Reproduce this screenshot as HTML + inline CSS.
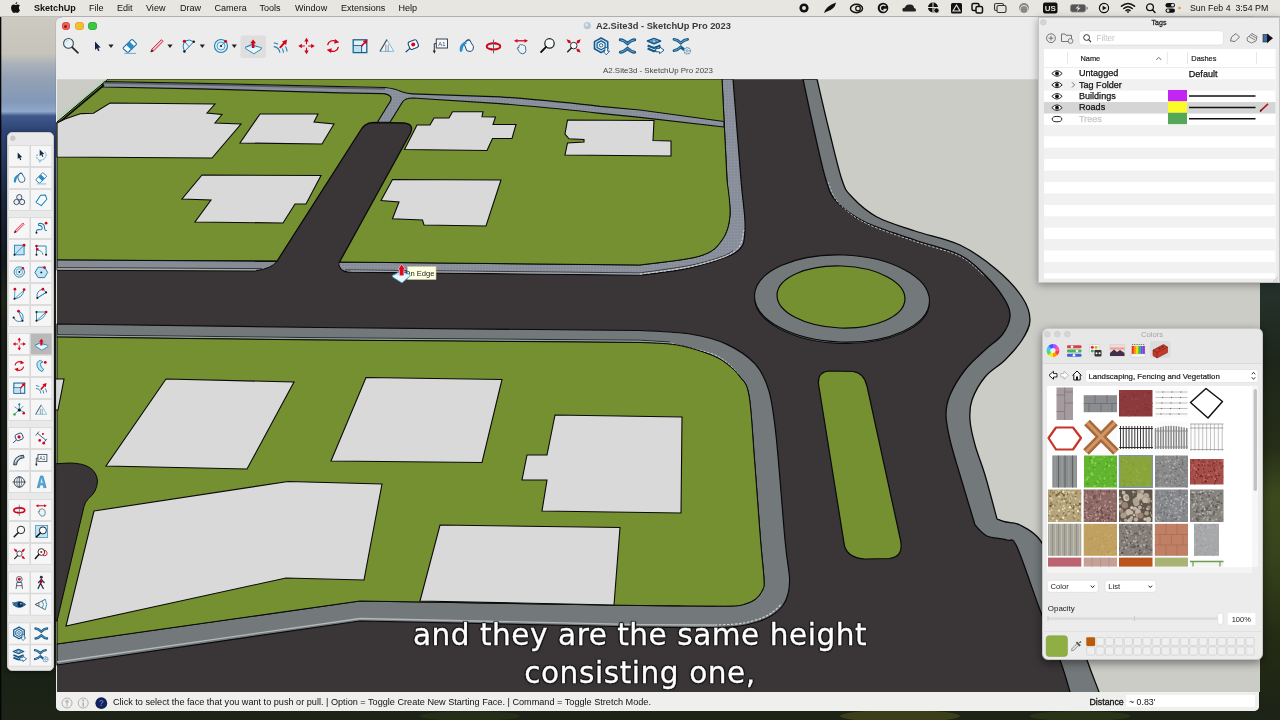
<!DOCTYPE html><html><head><meta charset="utf-8"><title>SketchUp</title><style>
*{margin:0;padding:0;box-sizing:border-box}
#root{position:absolute;left:0;top:0;width:1280px;height:720px;overflow:hidden;will-change:transform}
html,body{width:1280px;height:720px;overflow:hidden;background:#1d2418;font-family:"Liberation Sans",sans-serif;}
.abs{position:absolute}
#desk{position:absolute;left:0;top:0;width:1280px;height:720px}
#menubar{position:absolute;left:0;top:0;width:1280px;height:17px;background:#e7e6e0;border-bottom:1px solid #bdbcb8}
#menubar span{position:absolute;top:2.8px;font-size:9.05px;color:#111;white-space:nowrap;line-height:11px}
#win{position:absolute;left:56.3px;top:16.5px;width:1203.2px;height:694.8px;background:#ececec;border-radius:6px 6px 5px 5px;overflow:hidden;box-shadow:0 0 0 0.5px rgba(0,0,0,.12)}
.tl{position:absolute;width:8.6px;height:8.6px;border-radius:50%}
#title{position:absolute;left:596px;top:21px;font-size:9.3px;font-weight:bold;color:#3a3a3a;white-space:nowrap;line-height:11px}
#title2{position:absolute;left:603px;top:66px;font-size:7.92px;color:#444;white-space:nowrap;line-height:9px}
#status{position:absolute;left:56.3px;top:692px;width:1203.2px;height:19.3px;background:#efefed;border-radius:0 0 5px 5px}
#status .t{position:absolute;top:5.3px;font-size:9.13px;color:#111;white-space:nowrap;line-height:10px}
.scene{position:absolute;left:0;top:0}
#ui{position:absolute;left:0;top:0}
#palette{position:absolute;left:6.5px;top:131.5px;width:47px;height:539px;background:#e9e9e9;border-radius:5px;border:0.7px solid #c9c9c9;box-shadow:0 1px 4px rgba(0,0,0,.5)}
.cell{position:absolute;width:21px;height:21px;background:#f6f6f6;border:0.6px solid #d2d2d2}
#tags{position:absolute;left:1038px;top:16.5px;width:241.5px;height:266.5px;background:#ececec;border:0.6px solid #c4c4c4;box-shadow:0 2px 8px rgba(0,0,0,.35)}
#tags .hd{position:absolute;font-size:8.6px;color:#222}
#tags .row{position:absolute;left:6px;width:231px;height:11.5px}
#tags .nm{position:absolute;font-size:9.6px;color:#111;white-space:nowrap;line-height:11.5px}
#colors{position:absolute;left:1041.5px;top:327.6px;width:221.5px;height:332.4px;background:linear-gradient(#e7e7e7 0,#e7e7e7 34.4px,#d9d9d9 34.4px,#d9d9d9 35px,#ececec 35px);border-radius:6px;border:0.6px solid #c6c6c6;box-shadow:0 3px 10px rgba(0,0,0,.45)}
.sw{position:absolute}
.dd{position:absolute;background:#fff;border-radius:3px;box-shadow:0 0 0 .5px #cfcfcf,0 .5px 1px rgba(0,0,0,.25);font-size:8.6px;color:#222;line-height:12px;padding-left:4px;white-space:nowrap}
.sub{position:absolute;left:0;width:1280px;text-align:center;color:#fff;font-family:"DejaVu Sans","Liberation Sans",sans-serif;font-size:29.6px;white-space:nowrap;line-height:36px;
 text-shadow:-1px -1px 0 #1a1a1a,1px -1px 0 #1a1a1a,-1px 1px 0 #1a1a1a,1px 1px 0 #1a1a1a,0 1.4px 0 #1a1a1a,1.4px 0 0 #1a1a1a,-1.4px 0 0 #1a1a1a,0 -1.4px 0 #1a1a1a,0 0 3px #000;-webkit-text-stroke:.3px #fff}
</style></head><body><div id="root">
<svg id="desk" width="1280" height="720" viewBox="0 0 1280 720">
<defs>
<linearGradient id="sky" x1="0" y1="0" x2="0" y2="1">
<stop offset="0.022" stop-color="#cdcac1"/><stop offset="0.075" stop-color="#c6c3ba"/><stop offset="0.09" stop-color="#a9b0ba"/><stop offset="0.11" stop-color="#94a1b5"/><stop offset="0.14" stop-color="#8398b8"/><stop offset="0.155" stop-color="#90a8ca"/><stop offset="0.161" stop-color="#3f588b"/>
<stop offset="0.18" stop-color="#2f4575"/><stop offset="0.21" stop-color="#2a3e6a"/><stop offset="0.28" stop-color="#1b2840"/><stop offset="0.36" stop-color="#151b20"/><stop offset="0.42" stop-color="#23281a"/><stop offset="0.46" stop-color="#1a1f18"/><stop offset="0.8" stop-color="#141b14"/><stop offset="1" stop-color="#1c2416"/></linearGradient>
<linearGradient id="rgt" x1="0" y1="0" x2="0" y2="1">
<stop offset="0.39" stop-color="#26332e"/><stop offset="0.5" stop-color="#1d261a"/><stop offset="0.62" stop-color="#262d17"/><stop offset="0.69" stop-color="#3d4a1e"/><stop offset="0.78" stop-color="#36421b"/><stop offset="0.88" stop-color="#252c15"/><stop offset="1" stop-color="#1c2213"/></linearGradient>
</defs>
<rect width="1280" height="720" fill="#1c2317"/>
<rect x="0" y="0" width="60" height="720" fill="url(#sky)"/>
<rect x="1255" y="0" width="25" height="720" fill="url(#rgt)"/>
<rect x="0" y="706" width="1280" height="14" fill="#1d2417"/>
<rect x="0" y="0" width="1.3" height="720" fill="#050505"/>
<ellipse cx="900" cy="716" rx="60" ry="6" fill="#4a4a1c" opacity=".7"/>
<ellipse cx="1080" cy="716" rx="50" ry="5" fill="#2e3a1a" opacity=".7"/>
<ellipse cx="470" cy="716" rx="50" ry="5" fill="#2a3318" opacity=".7"/>
</svg>
<div id="menubar">
<span style="left:34px;font-weight:bold;">SketchUp</span>
<span style="left:89px;">File</span>
<span style="left:117px;">Edit</span>
<span style="left:146px;">View</span>
<span style="left:180px;">Draw</span>
<span style="left:214.5px;">Camera</span>
<span style="left:259.5px;">Tools</span>
<span style="left:295px;">Window</span>
<span style="left:341px;">Extensions</span>
<span style="left:398.5px;">Help</span>
<span style="left:1190px;font-size:8.8px">Sun Feb 4&nbsp; 3:54 PM</span>
</div>
<svg class="abs" style="left:0;top:0" width="1280" height="16" viewBox="0 0 1280 16"><path d="M17.6,5.2 C16.9,4.4 15.9,4.3 15.4,4.3 C14.5,4.3 14,4.8 13.3,4.8 C12.6,4.8 12.1,4.3 11.3,4.3 C10.2,4.3 8.8,5.3 8.8,7.5 C8.8,9.8 10.4,12.6 11.6,12.6 C12.2,12.6 12.6,12.2 13.4,12.2 C14.2,12.2 14.5,12.6 15.2,12.6 C16.3,12.6 17.4,10.6 17.7,9.7 C16.2,9 16.2,6.2 17.6,5.2Z M14.9,1.6 C14,1.7 13,2.7 13.2,3.8 C14.2,3.8 15.1,2.8 14.9,1.6Z" fill="#111" transform="translate(2.3,.3)"/><circle cx="804" cy="8" r="4.6" fill="#111"/><circle cx="804" cy="8" r="2" fill="#e6e4df"/><path d="M824,13 Q826,6 836,2.5 Q835,9 827,11.5Z" fill="#111"/><ellipse cx="856.5" cy="8.5" rx="6" ry="4.2" fill="none" stroke="#111" stroke-width="1.5"/><circle cx="858" cy="8.5" r="2.3" fill="none" stroke="#111" stroke-width="1.2"/><circle cx="883" cy="8" r="5.3" fill="#111"/><path d="M885.5,6 A3,3 0 1 0 886,9.5 L883.5,9.5" stroke="#e6e4df" stroke-width="1.3" fill="none"/><path d="M903,11.5 Q901,8 905,7.5 Q906,4 910,4.5 Q914,4.5 914,8 Q917,8.5 915.5,11.5Z" fill="#222"/><circle cx="933" cy="7.5" r="5" fill="#111"/><path d="M933,2.5 L933,12.5 M928,7.5 L938,7.5" stroke="#e6e4df" stroke-width="1"/><circle cx="936.5" cy="10.5" r="2.6" fill="#111" stroke="#e6e4df" stroke-width=".8"/><rect x="951" y="3" width="11" height="10.5" rx="1.5" fill="#111"/><path d="M956.5,5 L960,11 L953,11Z" fill="none" stroke="#e6e4df" stroke-width="1.1"/><rect x="972" y="3.5" width="7" height="7" rx="1.5" fill="none" stroke="#111" stroke-width="1.5"/><rect x="976" y="6.5" width="6.5" height="6.5" rx="1.5" fill="#e6e4df" stroke="#111" stroke-width="1.5"/><rect x="994.5" y="3.5" width="9" height="7" rx="1.6" fill="none" stroke="#333" stroke-width="1.1"/><rect x="997" y="5.5" width="9" height="7" rx="1.6" fill="#e6e4df" stroke="#333" stroke-width="1.1"/><circle cx="1024" cy="8" r="5" fill="#8a8883"/><path d="M1020.5,11.5 A4,4 0 1 1 1027.5,11.5" stroke="#e6e4df" stroke-width="1" fill="none"/><rect x="1043" y="2.5" width="14.5" height="11" rx="2" fill="#111"/><text x="1050.2" y="11.3" font-family="Liberation Sans,sans-serif" font-size="8" font-weight="bold" fill="#e6e4df" text-anchor="middle">US</text><rect x="1070.5" y="4.5" width="15" height="7.5" rx="2" fill="#555" stroke="#888" stroke-width=".8"/><rect x="1086.3" y="6.8" width="1.5" height="3" rx=".7" fill="#888"/><path d="M1079,5 L1075.5,8.6 L1078,8.6 L1077,11.5 L1080.6,7.8 L1078.2,7.8Z" fill="#e6e4df"/><circle cx="1104" cy="8" r="4.6" fill="none" stroke="#111" stroke-width="1.2"/><path d="M1102.6,5.7 L1106.6,8 L1102.6,10.3Z" fill="#111"/><path d="M1121.5,6.2 Q1128,0.8 1134.5,6.2 M1123.8,8.5 Q1128,5 1132.2,8.5 M1126,10.6 Q1128,9 1130,10.6" fill="none" stroke="#111" stroke-width="1.5" stroke-linecap="round"/><circle cx="1128" cy="12" r=".9" fill="#111"/><circle cx="1150" cy="7.3" r="3.4" fill="none" stroke="#111" stroke-width="1.3"/><path d="M1152.5,9.8 L1155,12.5" stroke="#111" stroke-width="1.4" stroke-linecap="round"/><rect x="1165.5" y="3" width="9.5" height="4.4" rx="2.2" fill="#111"/><rect x="1165.5" y="8.4" width="9.5" height="4.4" rx="2.2" fill="#111"/><circle cx="1172.6" cy="5.2" r="1.4" fill="#e6e4df"/><circle cx="1168" cy="10.6" r="1.4" fill="#e6e4df"/><circle cx="1179.5" cy="8" r="1.2" fill="#f08a24"/></svg>
<div id="win"></div>
<div class="tl" style="left:61.6px;top:21.8px;background:#ee5f57;box-shadow:inset 0 0 0 .5px #c9443d"></div><div class="abs" style="left:64.4px;top:24.6px;width:3px;height:3px;border-radius:50%;background:#8c1a10"></div>
<div class="tl" style="left:75px;top:21.8px;background:#f5bd30;box-shadow:inset 0 0 0 .5px #d39e25"></div>
<div class="tl" style="left:88.4px;top:21.8px;background:#3bc643;box-shadow:inset 0 0 0 .5px #2ba231"></div>
<div id="title">A2.Site3d - SketchUp Pro 2023</div>
<div id="title2">A2.Site3d - SketchUp Pro 2023</div>
<svg class="abs" style="left:0;top:0" width="1280" height="80" viewBox="0 0 1280 80"><rect x="240.5" y="35.5" width="25.5" height="22.5" rx="2" fill="#dedede"/><circle cx="587.3" cy="25.7" r="3.6" fill="#b7c7d6"/><circle cx="586.5" cy="24.8" r="1.6" fill="#d9e4ee"/><svg x="61.0" y="36.0" width="20" height="20" viewBox="0 0 20 20"><circle cx="7.5" cy="7.4" r="4.9" fill="#e6f2f8" stroke="#3a4a55" stroke-width="1.1"/><path d="M4.8,6.6 Q5.6,4.6 7.6,4.3" stroke="#a8d4e6" stroke-width="1" fill="none"/><path d="M11.3,11.3 L17,16.8" stroke="#222" stroke-width="1.6" stroke-linecap="round"/></svg><svg x="87.0" y="36.0" width="20" height="20" viewBox="0 0 20 20"><path d="M8,5.6 L8,13.9 L9.9,12.2 L11.2,15.2 L12.5,14.6 L11.2,11.7 L13.7,11.5 Z" fill="#15254a"/></svg><svg x="120.0" y="36.0" width="20" height="20" viewBox="0 0 20 20"><path d="M3.4,11.6 L11.2,3.9 Q12,3.3 12.8,3.9 L16.2,7.3 Q16.8,8 16.2,8.7 L8.6,16 Q7.8,16.5 7,16 L3.4,12.9 Q2.9,12.2 3.4,11.6Z" fill="#fff" stroke="#1b6fa3" stroke-width="1.1"/><path d="M6.2,8.9 L9.6,5.5 L14.3,10.3 L11,13.6Z" fill="#2a8cc4"/><path d="M4.4,17.4 L16,17.4" stroke="#5fb0d8" stroke-width="1"/></svg><svg x="147.0" y="36.0" width="20" height="20" viewBox="0 0 20 20"><path d="M3.9,15.9 L4.9,13.2 L14.4,3.7 L16,5.3 L6.6,14.9 Z" fill="#f7c6cb" stroke="#c8102e" stroke-width="0.9" stroke-linejoin="round"/><path d="M3.6,16.3 L4.9,13.2 L6.6,14.9Z" fill="#2b2b2b"/></svg><svg x="178.5" y="36.0" width="20" height="20" viewBox="0 0 20 20"><path d="M5.9,15.5 Q3.2,10 5.9,5.25 Q11,2.5 15.25,5.75 Z" fill="#eaf5fa" stroke="#1c7fb2" stroke-width="1"/><path d="M5.9,5.25 L10.5,10.6" stroke="#1c7fb2" stroke-width="0.9"/><circle cx="5.9" cy="5.25" r="1.6" fill="#d4041c"/><circle cx="15.25" cy="5.75" r="1.2" fill="#1a1a1a"/><circle cx="5.9" cy="15.5" r="1.2" fill="#1a1a1a"/></svg><svg x="211.0" y="36.0" width="20" height="20" viewBox="0 0 20 20"><circle cx="10" cy="10" r="6.5" fill="#dff0f8" stroke="#1c7fb2" stroke-width="1.1"/><circle cx="10" cy="10" r="4" fill="none" stroke="#1c7fb2" stroke-width="0.7"/><path d="M10,10 L14.4,5.4" stroke="#1c7fb2" stroke-width="0.8"/><circle cx="10" cy="10" r="1.1" fill="#1a1a1a"/><circle cx="14.6" cy="5.2" r="1.5" fill="#d4041c"/></svg><svg x="243.0" y="36.0" width="20" height="20" viewBox="0 0 20 20"><path d="M2.6,11.3 L8.3,8.7 L18.2,11.8 L10.8,16.3 Z" fill="#c9e8f6" stroke="#1c7fb2" stroke-width="1.1" stroke-linejoin="round"/><path d="M2.6,11.3 L2.6,12.6 L10.8,17.8 L18.2,13.2 L18.2,11.8" fill="#eaf6fb" stroke="#1c7fb2" stroke-width="0.9" stroke-linejoin="round"/><path d="M10.1,3.4 L13,7.2 L11.4,7.2 L11.4,12 L8.8,12 L8.8,7.2 L7.2,7.2 Z" fill="#d4041c"/></svg><svg x="270.5" y="36.0" width="20" height="20" viewBox="0 0 20 20"><path d="M3.2,10.6 A6.5,6.5 0 0 1 9.4,16.8 M3.2,7 A10,10 0 0 1 7.5,8.2 M11.8,12.5 A10,10 0 0 1 13,16.8 M16.6,15.5 A13.5,13.5 0 0 0 15,10.5" fill="none" stroke="#1c7fb2" stroke-width="1.1"/><path d="M8.6,11.2 L12.8,6.6 L11.5,5.4 L16.6,3.6 L15.6,9.1 L14.3,7.9 L10.1,12.6Z" fill="#d4041c"/></svg><svg x="296.5" y="36.0" width="20" height="20" viewBox="0 0 20 20"><path d="M10,3.2 L10,16.8 M3.2,10 L16.8,10" stroke="#d4041c" stroke-width="1.1"/><circle cx="10" cy="10" r="1.8" fill="#ececec"/><path d="M10,1.8 L12.2,5.4 L7.8,5.4Z M10,18.2 L12.2,14.6 L7.8,14.6Z M1.8,10 L5.4,7.8 L5.4,12.2Z M18.2,10 L14.6,7.8 L14.6,12.2Z" fill="#d4041c"/></svg><svg x="323.0" y="36.0" width="20" height="20" viewBox="0 0 20 20"><path d="M4.6,9.2 A5.5,5.5 0 0 1 13.2,5.6" fill="none" stroke="#d4041c" stroke-width="1.3"/><path d="M12,3 L16.3,6.3 L11.3,7.7 Z" fill="#d4041c"/><path d="M15.4,10.8 A5.5,5.5 0 0 1 6.8,14.4" fill="none" stroke="#d4041c" stroke-width="1.3"/><path d="M8,17 L3.7,13.7 L8.7,12.3 Z" fill="#d4041c"/></svg><svg x="350.0" y="36.0" width="20" height="20" viewBox="0 0 20 20"><rect x="3.2" y="3.8" width="13.6" height="12.8" fill="#e3f1f8" stroke="#1a5f8f" stroke-width="1.3"/><path d="M3.2,9.6 L11.6,9.6 L11.6,16.6" fill="none" stroke="#1a5f8f" stroke-width="1"/><rect x="3.9" y="10.2" width="7.1" height="5.8" fill="#bfe0f0"/><path d="M10.6,9.7 L14,6.2 L12.8,5 L17.4,3.4 L16.4,8.4 L15.2,7.3 L11.8,10.9Z" fill="#d4041c"/></svg><svg x="377.0" y="36.0" width="20" height="20" viewBox="0 0 20 20"><path d="M9.9,3.6 L16.8,15.4 L3,15.4 Z" fill="#f0f7fa" stroke="#6cc3dc" stroke-width="1" stroke-linejoin="round"/><path d="M9.9,3.6 L3,15.4" stroke="#4a5560" stroke-width="1.1"/><path d="M8.8,8.5 L8.8,15.4 M11.2,8.5 L11.2,15.4" stroke="#8a6a70" stroke-width="0.8"/></svg><svg x="403.5" y="36.0" width="20" height="20" viewBox="0 0 20 20"><rect x="5.2" y="4.6" width="9.2" height="8" rx="2.2" fill="#fafcfd" stroke="#1d4a75" stroke-width="1.1" transform="rotate(-22 9.8 8.6)"/><path d="M6.2,12.6 L2.6,15.8" stroke="#1d4a75" stroke-width="1.2" stroke-linecap="round"/><circle cx="9.7" cy="8.6" r="2" fill="#d4041c"/></svg><svg x="430.5" y="36.0" width="20" height="20" viewBox="0 0 20 20"><rect x="5.8" y="3" width="11.2" height="9" fill="#f6f8fa" stroke="#34465a" stroke-width="1"/><text x="11.4" y="10" font-family="Liberation Sans, sans-serif" font-size="5.8" text-anchor="middle" fill="#34465a">A1</text><path d="M5.8,7.6 L3.8,7.6 L3.8,15.5" fill="none" stroke="#222" stroke-width="0.9"/><path d="M2.3,14.6 L5.3,14.6 L3.8,17.8Z" fill="#222"/></svg><svg x="456.5" y="36.0" width="20" height="20" viewBox="0 0 20 20"><path d="M7.3,6.8 L12.8,3.6 L17,10.6 L16.4,13.8 Q15.5,15.8 12.6,15.4 L10.2,14.6 Z" fill="#f3f8fb" stroke="#1d4a75" stroke-width="1" stroke-linejoin="round"/><path d="M9,5.5 Q11.5,1.8 14.2,5.6" fill="none" stroke="#1d4a75" stroke-width="0.9"/><path d="M3.2,14.8 Q2.6,9 7,6.6 Q9.8,5.4 10.4,7.4 Q7,8.4 6.4,12 Q6.2,15.5 4.6,16 Q3.6,16 3.2,14.8Z" fill="#2a8fd0"/></svg><svg x="483.5" y="36.0" width="20" height="20" viewBox="0 0 20 20"><ellipse cx="10" cy="10.4" rx="6.8" ry="3.1" fill="none" stroke="#d4041c" stroke-width="2"/><path d="M10,3.6 L10,17.4" stroke="#555" stroke-width="0.9"/><path d="M7.2,12 L9.4,13.6 L7.4,14.8Z M12.8,8.9 L10.6,7.2 L12.6,6Z" fill="#d4041c"/></svg><svg x="511.0" y="36.0" width="20" height="20" viewBox="0 0 20 20"><path d="M5.5,4.8 L14.5,4.8" stroke="#d4041c" stroke-width="1.3"/><path d="M3,4.8 L6.4,2.9 L6.4,6.7Z M17,4.8 L13.6,2.9 L13.6,6.7Z" fill="#d4041c"/><path d="M7.8,10.4 Q7.8,8.9 9,9.1 Q9.6,7.9 10.7,8.9 Q11.8,8.1 12.6,9.4 Q13.9,9.1 14.4,10.6 L14.9,14.6 Q14.4,17.8 11.6,17.8 Q9.1,17.8 8.1,15.4 L6.2,12.2 Q6.3,10.9 7.8,12 Z" fill="#e9f2f7" stroke="#44607a" stroke-width="0.9"/></svg><svg x="537.5" y="36.0" width="20" height="20" viewBox="0 0 20 20"><circle cx="12" cy="7.4" r="4.7" fill="#f4f9fc" stroke="#222" stroke-width="1.2"/><path d="M8.6,10.9 L3.6,16" stroke="#111" stroke-width="1.8" stroke-linecap="round"/></svg><svg x="563.5" y="36.0" width="20" height="20" viewBox="0 0 20 20"><circle cx="10.2" cy="9.6" r="3.3" fill="#f4f9fc" stroke="#333" stroke-width="1"/><path d="M7.9,12 L4.2,15.8" stroke="#222" stroke-width="1.5" stroke-linecap="round"/><path d="M3,3.2 L6.8,4.6 L7.4,7.4 L4.6,6.8Z M17.2,3.2 L15.8,6.9 L13,7.4 L13.6,4.6Z M17.2,16.6 L13.5,15.4 L12.9,12.6 L15.7,13.2Z" fill="#d4041c"/></svg><svg x="591.5" y="36.0" width="20" height="20" viewBox="0 0 20 20"><path d="M9.6,2 L16.2,5.6 L16.2,12.8 L9.6,16.6 L3,12.8 L3,5.6 Z" fill="#dcebf5" stroke="#14598c" stroke-width="1.6" stroke-linejoin="round"/><path d="M9.6,4.9 L13.6,7.1 L13.6,11.5 L9.6,13.7 L5.6,11.5 L5.6,7.1Z" fill="#eef5fa" stroke="#14598c" stroke-width="1.2" stroke-linejoin="round"/><circle cx="9.6" cy="9.3" r="1.7" fill="none" stroke="#14598c" stroke-width="0.9"/><path d="M13.4,11.6 L13.4,15.2 L11.6,15.2 L14.8,18.8 L18,15.2 L16.2,15.2 L16.2,11.6Z" fill="#fff" stroke="#14598c" stroke-width="0.9" stroke-linejoin="round"/></svg><svg x="617.5" y="36.0" width="20" height="20" viewBox="0 0 20 20"><path d="M2.8,3.8 Q6.5,4 10,7.6 Q13.5,4 17.2,3.8 M2.8,16.2 Q6.5,16 10,12.4 Q13.5,16 17.2,16.2" fill="none" stroke="#14598c" stroke-width="3" stroke-linecap="round"/><path d="M3.4,3.9 Q6.6,4.2 10,7.6 Q13.4,4.2 16.6,3.9 M3.4,16.1 Q6.6,15.8 10,12.4 Q13.4,15.8 16.6,16.1" fill="none" stroke="#9cc3dd" stroke-width="0.7" stroke-linecap="round"/></svg><svg x="645.0" y="36.0" width="20" height="20" viewBox="0 0 20 20"><path d="M2.6,12.6 L9,15.2 L13,13.6 M2.6,9.4 L9,12 L15.4,9.4" fill="none" stroke="#14598c" stroke-width="2.2" stroke-linejoin="round"/><path d="M9,2.4 L15.6,5 L9,7.8 L2.4,5Z" fill="#cfe3f1" stroke="#14598c" stroke-width="1.5" stroke-linejoin="round"/><path d="M9,4 L12,5.1 L9,6.3 L6,5.1Z" fill="#eef5fa" stroke="#14598c" stroke-width=".7"/><path d="M10.8,12.6 L14.6,12.6 L14.6,10.8 L19,14.2 L14.6,17.6 L14.6,15.8 L10.8,15.8Z" fill="#fff" stroke="#14598c" stroke-width="1" stroke-linejoin="round"/></svg><svg x="672.0" y="36.0" width="20" height="20" viewBox="0 0 20 20"><path d="M2,3.4 Q5.4,3.6 8.8,7 Q12.2,3.6 15.6,3.4 M2,14.6 Q5.4,14.4 8.8,11 Q10.6,12.8 12,13.4" fill="none" stroke="#14598c" stroke-width="2.8" stroke-linecap="round"/><path d="M2.6,3.5 Q5.6,3.8 8.8,7 Q12,3.8 15,3.5 M2.6,14.5 Q5.6,14.2 8.8,11" fill="none" stroke="#9cc3dd" stroke-width="0.7" stroke-linecap="round"/><circle cx="15.2" cy="14.8" r="3.1" fill="#f0f0f0" stroke="#5a8fb8" stroke-width="1.3" stroke-dasharray="1.5 0.7"/><circle cx="15.2" cy="14.8" r="1.1" fill="none" stroke="#5a8fb8" stroke-width=".8"/></svg><path d="M108.4,44.6 L113.6,44.6 L111.0,48 Z" fill="#222"/><path d="M167.4,44.6 L172.6,44.6 L170.0,48 Z" fill="#222"/><path d="M199.7,44.6 L204.9,44.6 L202.3,48 Z" fill="#222"/><path d="M231.7,44.6 L236.9,44.6 L234.3,48 Z" fill="#222"/></svg>
<svg class="scene" width="1280" height="720" viewBox="0 0 1280 720">
<defs><clipPath id="vp"><rect x="56" y="79.3" width="1205" height="612.7"/></clipPath><pattern id="dots" width="3" height="3" patternUnits="userSpaceOnUse"><rect width="3" height="3" fill="#8d939e"/><circle cx="1" cy="1" r="0.6" fill="#6c7180"/></pattern><linearGradient id="bgg" x1="0" y1="0" x2="0" y2="1"><stop offset="0" stop-color="#cbccc6"/><stop offset="1" stop-color="#cbccc6"/></linearGradient></defs>
<g clip-path="url(#vp)">
<rect x="57" y="79" width="1203" height="614" fill="url(#bgg)"/>
<path d="M57,122 L108,79 L817,79 C819.0,87.5 824.8,113.2 829.0,130.0 C833.2,146.8 838.2,168.8 842.0,180.0 C845.8,191.2 846.2,190.8 852.0,197.0 C857.8,203.2 866.5,211.3 877.0,217.0 C887.5,222.7 901.2,226.3 915.0,231.0 C928.8,235.7 946.3,238.5 960.0,245.0 C973.7,251.5 986.7,261.3 997.0,270.0 C1007.3,278.7 1016.5,288.7 1022.0,297.0 C1027.5,305.3 1030.0,312.8 1030.0,320.0 C1030.0,327.2 1026.2,333.3 1022.0,340.0 C1017.8,346.7 1011.2,353.8 1005.0,360.0 C998.8,366.2 990.5,370.3 985.0,377.0 C979.5,383.7 974.5,392.8 972.0,400.0 C969.5,407.2 969.5,412.5 970.0,420.0 C970.5,427.5 972.5,435.8 975.0,445.0 C977.5,454.2 981.3,462.7 985.0,475.0 C988.7,487.3 995.0,511.7 997.0,519.0 C998.5,519.5 1002.2,521.0 1006.0,522.0 C1009.8,523.0 1014.3,522.0 1020.0,525.0 C1025.7,528.0 1033.3,530.8 1040.0,540.0 C1046.7,549.2 1052.2,560.0 1060.0,580.0 C1067.8,600.0 1080.5,641.3 1087.0,660.0 C1093.5,678.7 1096.7,685.3 1099.0,692.0 C1101.3,698.7 1100.7,698.7 1101.0,700.0 L57,700 Z" fill="#3a3536"/>
<path d="M817,79 C819.0,87.5 824.8,113.2 829.0,130.0 C833.2,146.8 838.2,168.8 842.0,180.0 C845.8,191.2 846.2,190.8 852.0,197.0 C857.8,203.2 866.5,211.3 877.0,217.0 C887.5,222.7 901.2,226.3 915.0,231.0 C928.8,235.7 946.3,238.5 960.0,245.0 C973.7,251.5 986.7,261.3 997.0,270.0 C1007.3,278.7 1016.5,288.7 1022.0,297.0 C1027.5,305.3 1030.0,312.8 1030.0,320.0 C1030.0,327.2 1026.2,333.3 1022.0,340.0 C1017.8,346.7 1011.2,353.8 1005.0,360.0 C998.8,366.2 990.5,370.3 985.0,377.0 C979.5,383.7 974.5,392.8 972.0,400.0 C969.5,407.2 969.5,412.5 970.0,420.0 C970.5,427.5 972.5,435.8 975.0,445.0 C977.5,454.2 981.3,462.7 985.0,475.0 C988.7,487.3 995.0,511.7 997.0,519.0 C998.5,519.5 1002.2,521.0 1006.0,522.0 C1009.8,523.0 1014.3,522.0 1020.0,525.0 C1025.7,528.0 1033.3,530.8 1040.0,540.0 C1046.7,549.2 1052.2,560.0 1060.0,580.0 C1067.8,600.0 1080.5,641.3 1087.0,660.0 C1093.5,678.7 1096.7,685.3 1099.0,692.0 C1101.3,698.7 1100.7,698.7 1101.0,700.0 L1072,700 C1071.7,698.7 1072.0,698.7 1070.0,692.0 C1068.0,685.3 1065.0,673.7 1060.0,660.0 C1055.0,646.3 1047.2,628.8 1040.0,610.0 C1032.8,591.2 1022.5,558.7 1017.0,547.0 C1011.5,535.3 1012.0,541.8 1007.0,540.0 C1002.0,538.2 992.3,538.5 987.0,536.0 C981.7,533.5 977.0,526.8 975.0,525.0 C972.5,516.7 964.2,489.2 960.0,475.0 C955.8,460.8 952.3,450.0 950.0,440.0 C947.7,430.0 946.0,422.5 946.0,415.0 C946.0,407.5 946.8,402.5 950.0,395.0 C953.2,387.5 959.2,377.5 965.0,370.0 C970.8,362.5 978.8,355.8 985.0,350.0 C991.2,344.2 997.8,340.5 1002.0,335.0 C1006.2,329.5 1009.5,322.8 1010.0,317.0 C1010.5,311.2 1009.2,307.0 1005.0,300.0 C1000.8,293.0 992.5,282.5 985.0,275.0 C977.5,267.5 971.7,260.8 960.0,255.0 C948.3,249.2 930.8,245.5 915.0,240.0 C899.2,234.5 878.0,228.3 865.0,222.0 C852.0,215.7 843.5,209.0 837.0,202.0 C830.5,195.0 829.8,192.0 826.0,180.0 C822.2,168.0 817.8,146.8 814.0,130.0 C810.2,113.2 804.8,87.5 803.0,79.0 Z" fill="#73797b" stroke="#0a0a0a" stroke-width="1.3" stroke-linejoin="round"/>
<path d="M733,79 C734.3,95.8 739.0,154.8 741.0,180.0 C743.0,205.2 745.9,217.9 745.0,230.0 C744.1,242.1 744.7,246.2 735.5,252.5 C726.3,258.8 705.9,264.0 690.0,267.8 C674.1,271.6 648.3,274.0 640.0,275.2 L348,272.2 Q338.5,271 338.5,262 L640,265 C650.0,263.5 686.3,260.2 700.0,256.0 C713.7,251.8 717.0,246.8 722.0,240.0 C727.0,233.2 729.2,225.0 730.0,215.0 C730.8,205.0 728.3,202.7 727.0,180.0 C725.7,157.3 722.8,95.8 722.0,79.0 Z" fill="url(#dots)" stroke="#0a0a0a" stroke-width="1.2" stroke-linejoin="round"/>
<path d="M57,122 L108,79 L722,79 L727,180 C727.5,185.8 730.8,205.0 730.0,215.0 C729.2,225.0 727.0,233.2 722.0,240.0 C717.0,246.8 713.7,251.8 700.0,256.0 C686.3,260.2 650.0,263.5 640.0,265.0 L339,262 L276.5,261 L57,260 Z" fill="#759031" stroke="#0a0a0a" stroke-width="1"/>
<path d="M345,269.8 L640,272.9 C648.3,271.6 676.3,268.1 690.0,265.4 C703.7,262.7 714.8,259.0 722.0,256.5 C729.2,254.0 731.2,251.6 733.0,250.6" fill="none" stroke="#30343c" stroke-width="0.9"/>
<path d="M351,271 L640,274.1 C648.3,272.9 676.3,269.4 690.0,266.7 C703.7,264.0 714.6,260.3 722.0,257.8 C729.4,255.3 732.4,252.6 734.5,251.6" fill="none" stroke="#a6a8ab" stroke-width="1"/>
<path d="M640,274.1 C648.3,272.9 674.2,270.4 690.0,266.7 C705.8,262.9 725.5,257.7 734.5,251.6 C743.5,245.5 742.4,233.6 744.0,230.0" fill="none" stroke="#d0d3d8" stroke-width="1" stroke-dasharray="2.5 1.5"/>
<path d="M828,182 C829.8,185.5 832.2,196.1 838.5,203.0 C844.8,209.9 853.2,216.9 866.0,223.3 C878.8,229.7 899.3,235.9 915.0,241.4 C930.7,246.9 948.5,250.6 960.0,256.4 C971.5,262.2 980.0,272.7 984.0,276.0" fill="none" stroke="#b9bdbf" stroke-width="1" stroke-dasharray="2.5 1.5"/>
<path d="M57,260 L277,261.3 Q272,268.5 255,271 L57,270.3 Z" fill="#868c95" stroke="#0a0a0a" stroke-width="1"/>
<path d="M57,267.6 L262,268.6" stroke="#2a2e33" stroke-width="0.9" fill="none"/>
<path d="M57,268.9 L256,269.8" stroke="#a9aba4" stroke-width="1.1" fill="none"/>
<path d="M276.5,262 L359.5,132 Q364,123 373,122.5 L404,123 Q415,124 410,134 L339,263 L338,266 L280,265 Z" fill="#3a3536"/>
<path d="M276.5,262 L359.5,132 Q364,123 373,122.5 L404,123 Q415,124 410,134 L339,263" fill="none" stroke="#0a0a0a" stroke-width="1.3" stroke-linejoin="round"/>
<path d="M103.5,81.6 L200,83.3 L340,86.6 L385,87.5 Q395,88.5 401,91.5 Q406,93.5 412,93.8 L500,96.8 Q560,101.5 600,106.4 L640,110 L724,121.5 L724,127 L640,117.3 L600,113.3 Q560,108.5 500,103.6 L413,98 Q405,98 402.5,102 L390,122.3 L377.5,122 L390.5,101 Q393,95 384,93.6 L340,92.9 L200,88.8 L102,87 Z" fill="url(#dots)" stroke="#0d0f12" stroke-width="1.2" stroke-linejoin="round"/>
<path d="M104,82.9 L200,84.6 L340,87.9 L385,88.9" fill="none" stroke="#4d5256" stroke-width="1.8" opacity=".8"/>
<path d="M57,124.3 L104,85" stroke="#0a0a0a" stroke-width="1.7" fill="none"/>
<path d="M57,118.6 L106.5,79" stroke="#9fdca6" stroke-width="1.2" fill="none"/>
<path d="M57,324 L320,327.5 L640,330.5 C648.3,331.1 675.5,331.7 690.0,334.0 C704.5,336.3 716.1,339.3 727.0,344.4 C737.9,349.5 748.5,356.6 755.5,364.4 C762.5,372.2 765.6,379.2 769.0,391.0 C772.4,402.8 773.3,410.2 776.0,435.0 C778.7,459.8 782.8,516.2 785.0,540.0 C787.2,563.8 789.0,568.5 789.5,577.5 C790.0,586.5 789.2,589.2 788.0,594.0 C786.8,598.8 785.1,602.5 782.5,606.0 C779.9,609.5 776.2,612.5 772.5,615.0 C768.8,617.5 765.4,619.2 760.0,621.0 C754.6,622.8 747.5,624.9 740.0,626.0 C732.5,627.1 731.7,627.3 715.0,627.5 C698.3,627.7 652.5,627.1 640.0,627.0 L360,621 L57,665 L57,644 L360,601 L640,605.5 C650.0,605.6 684.5,605.9 700.0,606.0 C715.5,606.1 725.5,606.3 733.0,606.0 C740.5,605.7 741.2,605.2 745.0,604.0 C748.8,602.8 752.6,601.3 755.5,599.0 C758.4,596.7 761.1,593.2 762.5,590.0 C763.9,586.8 764.3,588.3 764.0,580.0 C763.7,571.7 762.1,560.0 760.5,540.0 C758.9,520.0 756.4,484.1 754.5,460.0 C752.6,435.9 751.4,409.3 749.0,395.5 C746.6,381.7 743.7,382.2 740.0,377.0 C736.3,371.8 732.0,367.8 727.0,364.0 C722.0,360.2 718.3,357.7 710.0,354.5 C701.7,351.3 688.7,347.0 677.0,345.0 C665.3,343.0 646.2,342.9 640.0,342.5 L320,340 L57,337 Z" fill="#73797b" stroke="#0a0a0a" stroke-width="1.2" stroke-linejoin="round" fill-rule="evenodd"/>
<path d="M57,334.7 L320,337.7 L640,340.2 L670,342" stroke="#252d2f" stroke-width="1" fill="none"/><path d="M57,335.8 L320,338.8 L640,341.3 L672,343.3" stroke="#9aa59f" stroke-width="1.1" fill="none"/>
<path d="M57,662 L360,618.5 L640,624.6 L715,625" stroke="#b4b8ba" stroke-width="1.3" fill="none"/>
<path d="M715,625 C719.2,624.8 732.5,624.6 740.0,623.6 C747.5,622.6 754.8,620.5 760.0,618.7 C765.2,616.9 768.0,615.4 771.5,613.0 C775.0,610.6 779.4,605.9 781.0,604.5" stroke="#d5d8da" stroke-width="1.1" fill="none" stroke-dasharray="2.5 1.5"/>
<path d="M672,343.6 C678.3,345.2 700.8,349.9 710.0,353.0 C719.2,356.1 722.2,358.8 727.0,362.5 C731.8,366.2 737.0,372.9 739.0,375.0" stroke="#c9cdc9" stroke-width="1" fill="none" stroke-dasharray="2.5 1.5"/>
<path d="M57,337 L320,340 L640,342.5 C646.2,342.9 665.3,343.0 677.0,345.0 C688.7,347.0 701.7,351.3 710.0,354.5 C718.3,357.7 722.0,360.2 727.0,364.0 C732.0,367.8 736.3,371.8 740.0,377.0 C743.7,382.2 746.6,381.7 749.0,395.5 C751.4,409.3 752.6,435.9 754.5,460.0 C756.4,484.1 758.9,520.0 760.5,540.0 C762.1,560.0 763.7,571.7 764.0,580.0 C764.3,588.3 763.9,586.8 762.5,590.0 C761.1,593.2 758.4,596.7 755.5,599.0 C752.6,601.3 748.8,602.8 745.0,604.0 C741.2,605.2 740.5,605.7 733.0,606.0 C725.5,606.3 715.5,606.1 700.0,606.0 C684.5,605.9 650.0,605.6 640.0,605.5 L360,601 L57,644 Z" fill="#759031" stroke="#0a0a0a" stroke-width="1"/>
<path d="M50,464 L70,463 Q96,463.5 97.5,481 Q97,492 88.5,498.5 Q85,502 84,506.5 L57,621 L50,621 Z" fill="#3a3536" stroke="#0a0a0a" stroke-width="1"/>
<ellipse cx="842" cy="300" rx="87.5" ry="43.5" fill="#5d6263" stroke="#0a0a0a" stroke-width="1" transform="rotate(2 842 300)"/>
<ellipse cx="842" cy="298.5" rx="87.5" ry="43.5" fill="#73797b" stroke="#0a0a0a" stroke-width="1.1" transform="rotate(2 842 298.5)"/>
<ellipse cx="841" cy="297" rx="64" ry="31" fill="#759031" stroke="#0a0a0a" stroke-width="1.2" transform="rotate(2 841 297)"/>
<path d="M818.5,384 Q817.5,372 829,371 L853,371.5 Q864,373 867,386 L900.5,540 Q904,557 889,558.5 L865,559 Q848,558 844.5,546 Z" fill="#759031" stroke="#0a0a0a" stroke-width="1.2"/>
<path d="M57.0,123.0 L65.0,119.0 L81.0,113.6 L93.5,113.3 L110.0,103.0 L215.0,104.0 L207.0,113.0 L222.0,114.5 L215.0,123.0 L241.0,124.0 L212.0,158.0 L57.0,157.0Z" fill="#d9d9d9" stroke="#0a0a0a" stroke-width="1.1" stroke-linejoin="miter"/>
<path d="M260.0,114.0 L318.0,114.0 L314.0,122.0 L334.0,124.0 L322.0,144.0 L240.0,143.0Z" fill="#d9d9d9" stroke="#0a0a0a" stroke-width="1.1" stroke-linejoin="miter"/>
<path d="M202.0,175.0 L321.0,175.5 L306.0,204.0 L295.0,204.0 L283.0,223.0 L195.0,222.0 L211.0,200.0 L182.0,199.0Z" fill="#d9d9d9" stroke="#0a0a0a" stroke-width="1.1" stroke-linejoin="miter"/>
<path d="M404.5,149.5 L417.0,125.0 L430.0,125.0 L434.0,118.0 L449.0,118.0 L452.5,111.7 L483.0,111.7 L482.0,116.7 L495.5,117.0 L493.0,124.5 L516.0,124.5 L512.0,138.5 L492.5,138.5 L487.0,150.5Z" fill="#d9d9d9" stroke="#0a0a0a" stroke-width="1.1" stroke-linejoin="miter"/>
<path d="M567.5,120.0 L654.0,120.5 L653.0,140.5 L671.0,141.0 L671.0,156.0 L565.0,155.0 L567.5,143.0 L584.0,142.0 L584.0,139.5 L569.0,138.8 L565.0,134.0Z" fill="#d9d9d9" stroke="#0a0a0a" stroke-width="1.1" stroke-linejoin="miter"/>
<path d="M392.5,179.5 L501.0,180.0 L486.0,226.0 L424.0,225.0 L422.5,220.0 L392.5,218.8 L399.0,202.0 L381.0,200.5Z" fill="#d9d9d9" stroke="#0a0a0a" stroke-width="1.1" stroke-linejoin="miter"/>
<path d="M166.0,379.0 L294.0,382.0 L247.0,469.0 L106.0,466.0Z" fill="#d9d9d9" stroke="#0a0a0a" stroke-width="1.1" stroke-linejoin="miter"/>
<path d="M366.0,377.5 L502.0,379.5 L482.0,462.5 L331.0,461.0Z" fill="#d9d9d9" stroke="#0a0a0a" stroke-width="1.1" stroke-linejoin="miter"/>
<path d="M555.0,415.0 L682.0,417.0 L681.0,513.0 L542.0,511.0 L547.0,480.0 L522.0,480.0 L527.0,455.0 L547.0,455.0Z" fill="#d9d9d9" stroke="#0a0a0a" stroke-width="1.1" stroke-linejoin="miter"/>
<path d="M94.0,511.0 L288.0,481.5 L382.0,484.0 L364.0,580.0 L286.0,578.0 L66.0,626.0Z" fill="#d9d9d9" stroke="#0a0a0a" stroke-width="1.1" stroke-linejoin="miter"/>
<path d="M440.0,525.0 L620.0,527.5 L614.0,605.0 L420.0,601.0Z" fill="#d9d9d9" stroke="#0a0a0a" stroke-width="1.1" stroke-linejoin="miter"/>
<path d="M50.0,379.0 L64.0,379.0 L58.0,410.0 L50.0,410.0Z" fill="#d9d9d9" stroke="#0a0a0a" stroke-width="1.1" stroke-linejoin="miter"/>
</g></svg>
<svg class="abs" style="left:0;top:0" width="1280" height="720" viewBox="0 0 1280 720">
<rect x="407.5" y="266.5" width="28.5" height="13" fill="#ffffe1" stroke="#c9c9a0" stroke-width=".6"/>
<text x="404.5" y="275.8" font-family="Liberation Sans,sans-serif" font-size="7.6" fill="#222">On Edge</text>
<path d="M392.5,275.5 L400.5,271 L410,274.5 L402,281 Z" fill="#bfe3f4" stroke="#2f8fc4" stroke-width="1"/>
<path d="M392.5,275.5 L392.5,277 L402,283 L410,276 L410,274.5" fill="#e9f6fc" stroke="#2f8fc4" stroke-width=".8"/>
<path d="M401.6,264.6 L405,269.6 L403.6,269.6 L403.6,275.6 L399.6,275.6 L399.6,269.6 L398.2,269.6 Z" fill="#e0081c" stroke="#fff" stroke-width="1" paint-order="stroke"/>
</svg>
<div id="status">
<span class="t" style="left:56.7px">Click to select the face that you want to push or pull. | Option = Toggle Create New Starting Face. | Command = Toggle Stretch Mode.</span>
<span class="t" style="left:1033.2px;font-size:8.8px;top:5.3px;-webkit-text-stroke:.3px #111">Distance</span>
<div class="abs" style="left:1069.7px;top:2.8px;width:129px;height:12.4px;background:#fff"></div>
<span class="t" style="left:1072.7px;font-size:8.8px;top:5.3px">~ 0.83'</span>
</div>
<svg class="abs" style="left:0;top:0" width="1280" height="720" viewBox="0 0 1280 720">
<circle cx="67" cy="703" r="5" fill="none" stroke="#aaa" stroke-width=".9"/><circle cx="67" cy="701.5" r="1.7" fill="#bbb"/><path d="M67,702.5 L67,706.5" stroke="#bbb" stroke-width="1.2"/>
<circle cx="83.2" cy="703" r="5" fill="none" stroke="#aaa" stroke-width=".9"/><circle cx="83.2" cy="700.5" r="1" fill="#aaa"/><path d="M83.2,702.5 L83.2,706.5" stroke="#aaa" stroke-width="1.4"/>
<circle cx="101.3" cy="703.2" r="5.9" fill="#14225a"/><text x="101.3" y="706.4" font-family="Liberation Sans,sans-serif" font-size="8.5" font-weight="bold" fill="#4b78c8" text-anchor="middle">?</text>
</svg>
<div id="palette"></div>
<svg class="abs" style="left:0;top:0" width="60" height="720" viewBox="0 0 60 720"><circle cx="12.8" cy="138.3" r="2.7" fill="#c9c9c9"/><rect x="8.7" y="145.4" width="21.2" height="21.2" fill="#f6f6f6" stroke="#d0d0d0" stroke-width=".6"/><svg x="11.3" y="148.0" width="16" height="16" viewBox="0 0 20 20"><path d="M8,5.6 L8,13.9 L9.9,12.2 L11.2,15.2 L12.5,14.6 L11.2,11.7 L13.7,11.5 Z" fill="#15254a"/></svg><rect x="30.7" y="145.4" width="21.2" height="21.2" fill="#f6f6f6" stroke="#d0d0d0" stroke-width=".6"/><svg x="33.3" y="148.0" width="16" height="16" viewBox="0 0 20 20"><path d="M8,2 L8,10 L10,8.3 L11.3,11.2 L12.6,10.6 L11.3,7.8 L13.8,7.6 Z" fill="#1b2a4a"/><path d="M5,8 Q3,13 7,15 Q9,15.5 8,18 M8,15.5 Q15,15 16,9 Q16,6 14,5" fill="none" stroke="#1c7fb2" stroke-width="1" stroke-dasharray="2 1.3"/></svg><rect x="8.7" y="167.4" width="21.2" height="21.2" fill="#f6f6f6" stroke="#d0d0d0" stroke-width=".6"/><svg x="11.3" y="170.0" width="16" height="16" viewBox="0 0 20 20"><path d="M7.3,6.8 L12.8,3.6 L17,10.6 L16.4,13.8 Q15.5,15.8 12.6,15.4 L10.2,14.6 Z" fill="#f3f8fb" stroke="#1d4a75" stroke-width="1" stroke-linejoin="round"/><path d="M9,5.5 Q11.5,1.8 14.2,5.6" fill="none" stroke="#1d4a75" stroke-width="0.9"/><path d="M3.2,14.8 Q2.6,9 7,6.6 Q9.8,5.4 10.4,7.4 Q7,8.4 6.4,12 Q6.2,15.5 4.6,16 Q3.6,16 3.2,14.8Z" fill="#2a8fd0"/></svg><rect x="30.7" y="167.4" width="21.2" height="21.2" fill="#f6f6f6" stroke="#d0d0d0" stroke-width=".6"/><svg x="33.3" y="170.0" width="16" height="16" viewBox="0 0 20 20"><path d="M3.4,11.6 L11.2,3.9 Q12,3.3 12.8,3.9 L16.2,7.3 Q16.8,8 16.2,8.7 L8.6,16 Q7.8,16.5 7,16 L3.4,12.9 Q2.9,12.2 3.4,11.6Z" fill="#fff" stroke="#1b6fa3" stroke-width="1.1"/><path d="M6.2,8.9 L9.6,5.5 L14.3,10.3 L11,13.6Z" fill="#2a8cc4"/><path d="M4.4,17.4 L16,17.4" stroke="#5fb0d8" stroke-width="1"/></svg><rect x="8.7" y="189.4" width="21.2" height="21.2" fill="#f6f6f6" stroke="#d0d0d0" stroke-width=".6"/><svg x="11.3" y="192.0" width="16" height="16" viewBox="0 0 20 20"><circle cx="10" cy="6.5" r="3.3" fill="#eef" stroke="#234" stroke-width="1"/><circle cx="6.5" cy="12.5" r="3.3" fill="#eef" stroke="#234" stroke-width="1"/><circle cx="13.5" cy="12.5" r="3.3" fill="#eef" stroke="#234" stroke-width="1"/></svg><rect x="30.7" y="189.4" width="21.2" height="21.2" fill="#f6f6f6" stroke="#d0d0d0" stroke-width=".6"/><svg x="33.3" y="192.0" width="16" height="16" viewBox="0 0 20 20"><path d="M3,12 L10,4 L16,4.5 L17,10 L9,17 Z" fill="#f4fbff" stroke="#1c7fb2" stroke-width="1.2" stroke-linejoin="round" transform="rotate(-8 10 10)"/></svg><rect x="8.7" y="217.4" width="21.2" height="21.2" fill="#f6f6f6" stroke="#d0d0d0" stroke-width=".6"/><svg x="11.3" y="220.0" width="16" height="16" viewBox="0 0 20 20"><path d="M3.9,15.9 L4.9,13.2 L14.4,3.7 L16,5.3 L6.6,14.9 Z" fill="#f7c6cb" stroke="#c8102e" stroke-width="0.9" stroke-linejoin="round"/><path d="M3.6,16.3 L4.9,13.2 L6.6,14.9Z" fill="#2b2b2b"/></svg><rect x="30.7" y="217.4" width="21.2" height="21.2" fill="#f6f6f6" stroke="#d0d0d0" stroke-width=".6"/><svg x="33.3" y="220.0" width="16" height="16" viewBox="0 0 20 20"><path d="M4,16 Q3,12 7,12 Q12,13 11,9 Q9,6 7,7 Q5,4 9,4 Q14,5 14,9 Q14,14 17,13" fill="none" stroke="#1c7fb2" stroke-width="1.3"/><circle cx="16" cy="4" r="1.7" fill="#d4041c"/><circle cx="4" cy="16" r="1.2" fill="#1a1a1a"/></svg><rect x="8.7" y="239.4" width="21.2" height="21.2" fill="#f6f6f6" stroke="#d0d0d0" stroke-width=".6"/><svg x="11.3" y="242.0" width="16" height="16" viewBox="0 0 20 20"><rect x="4" y="4" width="12" height="12" fill="#c4e3f3" stroke="#1c7fb2" stroke-width="1.1"/><path d="M4,16 L16,4" stroke="#1c7fb2" stroke-width="1"/><circle cx="16" cy="4" r="1.7" fill="#d4041c"/><circle cx="4" cy="16" r="1.3" fill="#1a1a1a"/></svg><rect x="30.7" y="239.4" width="21.2" height="21.2" fill="#f6f6f6" stroke="#d0d0d0" stroke-width=".6"/><svg x="33.3" y="242.0" width="16" height="16" viewBox="0 0 20 20"><path d="M4,5 L16,5 L16,16 M4,5 L4,16" fill="none" stroke="#1c7fb2" stroke-width="1.1"/><path d="M4,10 Q11,10 12,16" fill="none" stroke="#1c7fb2" stroke-width="1"/><circle cx="4" cy="5" r="1.7" fill="#d4041c"/><circle cx="16" cy="16" r="1.3" fill="#1a1a1a"/><circle cx="4" cy="16" r="1.3" fill="#1a1a1a"/><circle cx="5" cy="9" r="1.6" fill="#d4041c"/></svg><rect x="8.7" y="261.4" width="21.2" height="21.2" fill="#f6f6f6" stroke="#d0d0d0" stroke-width=".6"/><svg x="11.3" y="264.0" width="16" height="16" viewBox="0 0 20 20"><circle cx="10" cy="10" r="6.5" fill="#dff0f8" stroke="#1c7fb2" stroke-width="1.1"/><circle cx="10" cy="10" r="4" fill="none" stroke="#1c7fb2" stroke-width="0.7"/><path d="M10,10 L14.4,5.4" stroke="#1c7fb2" stroke-width="0.8"/><circle cx="10" cy="10" r="1.1" fill="#1a1a1a"/><circle cx="14.6" cy="5.2" r="1.5" fill="#d4041c"/></svg><rect x="30.7" y="261.4" width="21.2" height="21.2" fill="#f6f6f6" stroke="#d0d0d0" stroke-width=".6"/><svg x="33.3" y="264.0" width="16" height="16" viewBox="0 0 20 20"><path d="M6,4 L14,4 L18,10.5 L14,17 L6,17 L2,10.5 Z" fill="#c4e3f3" stroke="#1c7fb2" stroke-width="1.2"/><circle cx="10" cy="10.5" r="1.2" fill="#1a1a1a"/><circle cx="14" cy="4.5" r="1.7" fill="#d4041c"/></svg><rect x="8.7" y="283.4" width="21.2" height="21.2" fill="#f6f6f6" stroke="#d0d0d0" stroke-width=".6"/><svg x="11.3" y="286.0" width="16" height="16" viewBox="0 0 20 20"><path d="M4,16 L4.5,4 M4,16 L16,5" stroke="#1c7fb2" stroke-width="0.9" fill="none"/><path d="M4,16 Q14,15 16,5" stroke="#1c7fb2" stroke-width="1.2" fill="none"/><circle cx="4.5" cy="4" r="1.7" fill="#d4041c"/><circle cx="16" cy="4.5" r="1.7" fill="#d4041c"/><circle cx="4" cy="16" r="1.3" fill="#1a1a1a"/></svg><rect x="30.7" y="283.4" width="21.2" height="21.2" fill="#f6f6f6" stroke="#d0d0d0" stroke-width=".6"/><svg x="33.3" y="286.0" width="16" height="16" viewBox="0 0 20 20"><path d="M5,15 Q3,6 12,4 L16,8 Z" fill="none" stroke="#1c7fb2" stroke-width="1.1"/><path d="M5,15 L16,8" stroke="#1c7fb2" stroke-width="0.9"/><circle cx="12" cy="4" r="1.7" fill="#d4041c"/><circle cx="5" cy="15" r="1.3" fill="#1a1a1a"/><circle cx="16" cy="8" r="1.3" fill="#1a1a1a"/></svg><rect x="8.7" y="305.4" width="21.2" height="21.2" fill="#f6f6f6" stroke="#d0d0d0" stroke-width=".6"/><svg x="11.3" y="308.0" width="16" height="16" viewBox="0 0 20 20"><path d="M3,12 Q6,19 14,16 M9,4 L14,16 M9,4 Q17,7 14,16" stroke="#1c7fb2" stroke-width="1.1" fill="none"/><circle cx="9" cy="4" r="1.7" fill="#d4041c"/><circle cx="14" cy="16" r="1.3" fill="#1a1a1a"/><circle cx="3" cy="12" r="1.3" fill="#1a1a1a"/></svg><rect x="30.7" y="305.4" width="21.2" height="21.2" fill="#f6f6f6" stroke="#d0d0d0" stroke-width=".6"/><svg x="33.3" y="308.0" width="16" height="16" viewBox="0 0 20 20"><path d="M4,5 L4,16 L16,5 Z" fill="none" stroke="#1c7fb2" stroke-width="1.1"/><path d="M4,16 Q14,14 16,5" stroke="#1c7fb2" stroke-width="1" fill="none"/><circle cx="16" cy="5" r="1.7" fill="#d4041c"/><circle cx="4" cy="5" r="1.3" fill="#1a1a1a"/><circle cx="4" cy="16" r="1.3" fill="#1a1a1a"/></svg><rect x="8.7" y="333.4" width="21.2" height="21.2" fill="#f6f6f6" stroke="#d0d0d0" stroke-width=".6"/><svg x="11.3" y="336.0" width="16" height="16" viewBox="0 0 20 20"><path d="M10,3.2 L10,16.8 M3.2,10 L16.8,10" stroke="#d4041c" stroke-width="1.1"/><circle cx="10" cy="10" r="1.8" fill="#ececec"/><path d="M10,1.8 L12.2,5.4 L7.8,5.4Z M10,18.2 L12.2,14.6 L7.8,14.6Z M1.8,10 L5.4,7.8 L5.4,12.2Z M18.2,10 L14.6,7.8 L14.6,12.2Z" fill="#d4041c"/></svg><rect x="30.7" y="333.4" width="21.2" height="21.2" fill="#b9b9b9" stroke="#d0d0d0" stroke-width=".6"/><svg x="33.3" y="336.0" width="16" height="16" viewBox="0 0 20 20"><path d="M2.6,11.3 L8.3,8.7 L18.2,11.8 L10.8,16.3 Z" fill="#c9e8f6" stroke="#1c7fb2" stroke-width="1.1" stroke-linejoin="round"/><path d="M2.6,11.3 L2.6,12.6 L10.8,17.8 L18.2,13.2 L18.2,11.8" fill="#eaf6fb" stroke="#1c7fb2" stroke-width="0.9" stroke-linejoin="round"/><path d="M10.1,3.4 L13,7.2 L11.4,7.2 L11.4,12 L8.8,12 L8.8,7.2 L7.2,7.2 Z" fill="#d4041c"/></svg><rect x="8.7" y="355.4" width="21.2" height="21.2" fill="#f6f6f6" stroke="#d0d0d0" stroke-width=".6"/><svg x="11.3" y="358.0" width="16" height="16" viewBox="0 0 20 20"><path d="M4.6,9.2 A5.5,5.5 0 0 1 13.2,5.6" fill="none" stroke="#d4041c" stroke-width="1.3"/><path d="M12,3 L16.3,6.3 L11.3,7.7 Z" fill="#d4041c"/><path d="M15.4,10.8 A5.5,5.5 0 0 1 6.8,14.4" fill="none" stroke="#d4041c" stroke-width="1.3"/><path d="M8,17 L3.7,13.7 L8.7,12.3 Z" fill="#d4041c"/></svg><rect x="30.7" y="355.4" width="21.2" height="21.2" fill="#f6f6f6" stroke="#d0d0d0" stroke-width=".6"/><svg x="33.3" y="358.0" width="16" height="16" viewBox="0 0 20 20"><path d="M9,3 Q3,4 5,11 Q7,16 11,17 L13,14 Q9,12 9,8 Q9,5 12,5 Z" fill="#c4e3f3" stroke="#1c7fb2" stroke-width="1.1"/><circle cx="15" cy="5.5" r="1.8" fill="#d4041c"/></svg><rect x="8.7" y="377.4" width="21.2" height="21.2" fill="#f6f6f6" stroke="#d0d0d0" stroke-width=".6"/><svg x="11.3" y="380.0" width="16" height="16" viewBox="0 0 20 20"><rect x="3.2" y="3.8" width="13.6" height="12.8" fill="#e3f1f8" stroke="#1a5f8f" stroke-width="1.3"/><path d="M3.2,9.6 L11.6,9.6 L11.6,16.6" fill="none" stroke="#1a5f8f" stroke-width="1"/><rect x="3.9" y="10.2" width="7.1" height="5.8" fill="#bfe0f0"/><path d="M10.6,9.7 L14,6.2 L12.8,5 L17.4,3.4 L16.4,8.4 L15.2,7.3 L11.8,10.9Z" fill="#d4041c"/></svg><rect x="30.7" y="377.4" width="21.2" height="21.2" fill="#f6f6f6" stroke="#d0d0d0" stroke-width=".6"/><svg x="33.3" y="380.0" width="16" height="16" viewBox="0 0 20 20"><path d="M3.2,10.6 A6.5,6.5 0 0 1 9.4,16.8 M3.2,7 A10,10 0 0 1 7.5,8.2 M11.8,12.5 A10,10 0 0 1 13,16.8 M16.6,15.5 A13.5,13.5 0 0 0 15,10.5" fill="none" stroke="#1c7fb2" stroke-width="1.1"/><path d="M8.6,11.2 L12.8,6.6 L11.5,5.4 L16.6,3.6 L15.6,9.1 L14.3,7.9 L10.1,12.6Z" fill="#d4041c"/></svg><rect x="8.7" y="399.4" width="21.2" height="21.2" fill="#f6f6f6" stroke="#d0d0d0" stroke-width=".6"/><svg x="11.3" y="402.0" width="16" height="16" viewBox="0 0 20 20"><path d="M10,10 L10,3 M10,10 L4,15 M10,10 L17,13 M10,10 L15,5 M10,10 L4,6" stroke="#1c7fb2" stroke-width="0.9"/><circle cx="10" cy="10" r="2" fill="#1a1a1a"/><circle cx="15.5" cy="14" r="1.6" fill="#d4041c"/><circle cx="4" cy="15.5" r="1.5" fill="#2a9d3a"/><circle cx="10" cy="3" r="1.4" fill="#1c7fb2"/></svg><rect x="30.7" y="399.4" width="21.2" height="21.2" fill="#f6f6f6" stroke="#d0d0d0" stroke-width=".6"/><svg x="33.3" y="402.0" width="16" height="16" viewBox="0 0 20 20"><path d="M9.9,3.6 L16.8,15.4 L3,15.4 Z" fill="#f0f7fa" stroke="#6cc3dc" stroke-width="1" stroke-linejoin="round"/><path d="M9.9,3.6 L3,15.4" stroke="#4a5560" stroke-width="1.1"/><path d="M8.8,8.5 L8.8,15.4 M11.2,8.5 L11.2,15.4" stroke="#8a6a70" stroke-width="0.8"/></svg><rect x="8.7" y="427.4" width="21.2" height="21.2" fill="#f6f6f6" stroke="#d0d0d0" stroke-width=".6"/><svg x="11.3" y="430.0" width="16" height="16" viewBox="0 0 20 20"><rect x="5.2" y="4.6" width="9.2" height="8" rx="2.2" fill="#fafcfd" stroke="#1d4a75" stroke-width="1.1" transform="rotate(-22 9.8 8.6)"/><path d="M6.2,12.6 L2.6,15.8" stroke="#1d4a75" stroke-width="1.2" stroke-linecap="round"/><circle cx="9.7" cy="8.6" r="2" fill="#d4041c"/></svg><rect x="30.7" y="427.4" width="21.2" height="21.2" fill="#f6f6f6" stroke="#d0d0d0" stroke-width=".6"/><svg x="33.3" y="430.0" width="16" height="16" viewBox="0 0 20 20"><path d="M5,4 L16,13 M3,7 L7,2 M13,16 L17,11" stroke="#246" stroke-width="1" fill="none"/><circle cx="8" cy="13" r="1.7" fill="#d4041c"/><circle cx="13" cy="16.5" r="1.7" fill="#d4041c"/><circle cx="12" cy="5" r="1.3" fill="#d4041c"/></svg><rect x="8.7" y="449.4" width="21.2" height="21.2" fill="#f6f6f6" stroke="#d0d0d0" stroke-width=".6"/><svg x="11.3" y="452.0" width="16" height="16" viewBox="0 0 20 20"><path d="M3,16 Q3,5 15,4 L16,7 Q7,8 6.5,16 Z" fill="#cfe3ee" stroke="#234" stroke-width="1.2" stroke-linejoin="round"/><path d="M3,16 L15,4" stroke="#234" stroke-width="0.8"/></svg><rect x="30.7" y="449.4" width="21.2" height="21.2" fill="#f6f6f6" stroke="#d0d0d0" stroke-width=".6"/><svg x="33.3" y="452.0" width="16" height="16" viewBox="0 0 20 20"><rect x="5.8" y="3" width="11.2" height="9" fill="#f6f8fa" stroke="#34465a" stroke-width="1"/><text x="11.4" y="10" font-family="Liberation Sans, sans-serif" font-size="5.8" text-anchor="middle" fill="#34465a">A1</text><path d="M5.8,7.6 L3.8,7.6 L3.8,15.5" fill="none" stroke="#222" stroke-width="0.9"/><path d="M2.3,14.6 L5.3,14.6 L3.8,17.8Z" fill="#222"/></svg><rect x="8.7" y="471.4" width="21.2" height="21.2" fill="#f6f6f6" stroke="#d0d0d0" stroke-width=".6"/><svg x="11.3" y="474.0" width="16" height="16" viewBox="0 0 20 20"><circle cx="10" cy="10" r="6.5" fill="none" stroke="#234" stroke-width="1.1"/><path d="M1.5,10 L18.5,10 M10,3.5 L10,16.5" stroke="#234" stroke-width="0.9"/><ellipse cx="10" cy="10" rx="3" ry="6.5" fill="none" stroke="#234" stroke-width="0.7"/></svg><rect x="30.7" y="471.4" width="21.2" height="21.2" fill="#f6f6f6" stroke="#d0d0d0" stroke-width=".6"/><svg x="33.3" y="474.0" width="16" height="16" viewBox="0 0 20 20"><path d="M9,2.5 L12,2.5 L16,17 L13,17 L12.3,13.5 L8.5,13.5 L7.5,17 L5,17 Z" fill="#5aa9d6" stroke="#1c7fb2" stroke-width="0.8"/><path d="M10.3,6 L9.2,11 L11.6,11Z" fill="#f3f3f3"/></svg><rect x="8.7" y="499.4" width="21.2" height="21.2" fill="#f6f6f6" stroke="#d0d0d0" stroke-width=".6"/><svg x="11.3" y="502.0" width="16" height="16" viewBox="0 0 20 20"><ellipse cx="10" cy="10.4" rx="6.8" ry="3.1" fill="none" stroke="#d4041c" stroke-width="2"/><path d="M10,3.6 L10,17.4" stroke="#555" stroke-width="0.9"/><path d="M7.2,12 L9.4,13.6 L7.4,14.8Z M12.8,8.9 L10.6,7.2 L12.6,6Z" fill="#d4041c"/></svg><rect x="30.7" y="499.4" width="21.2" height="21.2" fill="#f6f6f6" stroke="#d0d0d0" stroke-width=".6"/><svg x="33.3" y="502.0" width="16" height="16" viewBox="0 0 20 20"><path d="M5.5,4.8 L14.5,4.8" stroke="#d4041c" stroke-width="1.3"/><path d="M3,4.8 L6.4,2.9 L6.4,6.7Z M17,4.8 L13.6,2.9 L13.6,6.7Z" fill="#d4041c"/><path d="M7.8,10.4 Q7.8,8.9 9,9.1 Q9.6,7.9 10.7,8.9 Q11.8,8.1 12.6,9.4 Q13.9,9.1 14.4,10.6 L14.9,14.6 Q14.4,17.8 11.6,17.8 Q9.1,17.8 8.1,15.4 L6.2,12.2 Q6.3,10.9 7.8,12 Z" fill="#e9f2f7" stroke="#44607a" stroke-width="0.9"/></svg><rect x="8.7" y="521.4" width="21.2" height="21.2" fill="#f6f6f6" stroke="#d0d0d0" stroke-width=".6"/><svg x="11.3" y="524.0" width="16" height="16" viewBox="0 0 20 20"><circle cx="12" cy="7.4" r="4.7" fill="#f4f9fc" stroke="#222" stroke-width="1.2"/><path d="M8.6,10.9 L3.6,16" stroke="#111" stroke-width="1.8" stroke-linecap="round"/></svg><rect x="30.7" y="521.4" width="21.2" height="21.2" fill="#f6f6f6" stroke="#d0d0d0" stroke-width=".6"/><svg x="33.3" y="524.0" width="16" height="16" viewBox="0 0 20 20"><rect x="3" y="2" width="15" height="15" fill="#c4e3f3" stroke="#1c7fb2" stroke-width="0.8"/><circle cx="12" cy="8" r="4.4" fill="#f8fbfd" stroke="#222" stroke-width="1.2"/><path d="M8.8,11.2 L4,16" stroke="#111" stroke-width="2" stroke-linecap="round"/></svg><rect x="8.7" y="543.4" width="21.2" height="21.2" fill="#f6f6f6" stroke="#d0d0d0" stroke-width=".6"/><svg x="11.3" y="546.0" width="16" height="16" viewBox="0 0 20 20"><circle cx="10.2" cy="9.6" r="3.3" fill="#f4f9fc" stroke="#333" stroke-width="1"/><path d="M7.9,12 L4.2,15.8" stroke="#222" stroke-width="1.5" stroke-linecap="round"/><path d="M3,3.2 L6.8,4.6 L7.4,7.4 L4.6,6.8Z M17.2,3.2 L15.8,6.9 L13,7.4 L13.6,4.6Z M17.2,16.6 L13.5,15.4 L12.9,12.6 L15.7,13.2Z" fill="#d4041c"/></svg><rect x="30.7" y="543.4" width="21.2" height="21.2" fill="#f6f6f6" stroke="#d0d0d0" stroke-width=".6"/><svg x="33.3" y="546.0" width="16" height="16" viewBox="0 0 20 20"><circle cx="10" cy="7.5" r="4.2" fill="#f8fbfd" stroke="#222" stroke-width="1.1"/><path d="M7,10.7 L2.5,15.5" stroke="#111" stroke-width="1.8" stroke-linecap="round"/><path d="M12,12 Q18,13 17,8 Q16,4.5 13,6" fill="none" stroke="#d4041c" stroke-width="1.1"/><circle cx="10" cy="7.5" r="1.3" fill="#d4041c"/></svg><rect x="8.7" y="571.9" width="21.2" height="21.2" fill="#f6f6f6" stroke="#d0d0d0" stroke-width=".6"/><svg x="11.3" y="574.5" width="16" height="16" viewBox="0 0 20 20"><circle cx="10" cy="6" r="3.6" fill="#f8fbfd" stroke="#345" stroke-width="1"/><circle cx="10" cy="6" r="1.8" fill="#d4041c"/><path d="M7,10 L6,18 M13,10 L14,18 M7,10 L13,10 M6.5,14 L13.5,14" stroke="#345" stroke-width="1" fill="none"/></svg><rect x="30.7" y="571.9" width="21.2" height="21.2" fill="#f6f6f6" stroke="#d0d0d0" stroke-width=".6"/><svg x="33.3" y="574.5" width="16" height="16" viewBox="0 0 20 20"><circle cx="10" cy="3.3" r="1.8" fill="#234"/><path d="M10,5.5 L9,11 L6,17.5 M9,11 L12.5,17.5 M10,6.5 L6.5,10 M10,6.5 L13.5,10" stroke="#234" stroke-width="1.6" fill="none" stroke-linecap="round"/><path d="M9.2,6 L11.3,6 L11,11 L8.7,11Z" fill="#d4041c"/></svg><rect x="8.7" y="593.9" width="21.2" height="21.2" fill="#f6f6f6" stroke="#d0d0d0" stroke-width=".6"/><svg x="11.3" y="596.5" width="16" height="16" viewBox="0 0 20 20"><path d="M2,10 Q10,3 18,10 Q10,17 2,10Z" fill="#2a78b0" stroke="#0f3d66" stroke-width="1"/><circle cx="11" cy="10" r="3.3" fill="#0f2e55"/><circle cx="12" cy="9" r="1" fill="#cfe6f5"/><path d="M1,8 L5,8" stroke="#0f3d66" stroke-width="1.2"/></svg><rect x="30.7" y="593.9" width="21.2" height="21.2" fill="#f6f6f6" stroke="#d0d0d0" stroke-width=".6"/><svg x="33.3" y="596.5" width="16" height="16" viewBox="0 0 20 20"><path d="M2.5,10 L15,3.5 M2.5,10 L15,16.5" stroke="#345" stroke-width="1" fill="none"/><path d="M11,5.5 Q14.5,10 11,14.5 M15,3.5 Q18.5,10 15,16.5" stroke="#1c7fb2" stroke-width="1" fill="none"/><path d="M2.5,10 L7,8 L7,12Z" fill="#f4fbff" stroke="#345" stroke-width="0.8"/></svg><rect x="8.7" y="622.9" width="21.2" height="21.2" fill="#f6f6f6" stroke="#d0d0d0" stroke-width=".6"/><svg x="11.3" y="625.5" width="16" height="16" viewBox="0 0 20 20"><path d="M9.6,2 L16.2,5.6 L16.2,12.8 L9.6,16.6 L3,12.8 L3,5.6 Z" fill="#dcebf5" stroke="#14598c" stroke-width="1.6" stroke-linejoin="round"/><path d="M9.6,4.9 L13.6,7.1 L13.6,11.5 L9.6,13.7 L5.6,11.5 L5.6,7.1Z" fill="#eef5fa" stroke="#14598c" stroke-width="1.2" stroke-linejoin="round"/><circle cx="9.6" cy="9.3" r="1.7" fill="none" stroke="#14598c" stroke-width="0.9"/><path d="M13.4,11.6 L13.4,15.2 L11.6,15.2 L14.8,18.8 L18,15.2 L16.2,15.2 L16.2,11.6Z" fill="#fff" stroke="#14598c" stroke-width="0.9" stroke-linejoin="round"/></svg><rect x="30.7" y="622.9" width="21.2" height="21.2" fill="#f6f6f6" stroke="#d0d0d0" stroke-width=".6"/><svg x="33.3" y="625.5" width="16" height="16" viewBox="0 0 20 20"><path d="M2.8,3.8 Q6.5,4 10,7.6 Q13.5,4 17.2,3.8 M2.8,16.2 Q6.5,16 10,12.4 Q13.5,16 17.2,16.2" fill="none" stroke="#14598c" stroke-width="3" stroke-linecap="round"/><path d="M3.4,3.9 Q6.6,4.2 10,7.6 Q13.4,4.2 16.6,3.9 M3.4,16.1 Q6.6,15.8 10,12.4 Q13.4,15.8 16.6,16.1" fill="none" stroke="#9cc3dd" stroke-width="0.7" stroke-linecap="round"/></svg><rect x="8.7" y="644.9" width="21.2" height="21.2" fill="#f6f6f6" stroke="#d0d0d0" stroke-width=".6"/><svg x="11.3" y="647.5" width="16" height="16" viewBox="0 0 20 20"><path d="M2.6,12.6 L9,15.2 L13,13.6 M2.6,9.4 L9,12 L15.4,9.4" fill="none" stroke="#14598c" stroke-width="2.2" stroke-linejoin="round"/><path d="M9,2.4 L15.6,5 L9,7.8 L2.4,5Z" fill="#cfe3f1" stroke="#14598c" stroke-width="1.5" stroke-linejoin="round"/><path d="M9,4 L12,5.1 L9,6.3 L6,5.1Z" fill="#eef5fa" stroke="#14598c" stroke-width=".7"/><path d="M10.8,12.6 L14.6,12.6 L14.6,10.8 L19,14.2 L14.6,17.6 L14.6,15.8 L10.8,15.8Z" fill="#fff" stroke="#14598c" stroke-width="1" stroke-linejoin="round"/></svg><rect x="30.7" y="644.9" width="21.2" height="21.2" fill="#f6f6f6" stroke="#d0d0d0" stroke-width=".6"/><svg x="33.3" y="647.5" width="16" height="16" viewBox="0 0 20 20"><path d="M2,3.4 Q5.4,3.6 8.8,7 Q12.2,3.6 15.6,3.4 M2,14.6 Q5.4,14.4 8.8,11 Q10.6,12.8 12,13.4" fill="none" stroke="#14598c" stroke-width="2.8" stroke-linecap="round"/><path d="M2.6,3.5 Q5.6,3.8 8.8,7 Q12,3.8 15,3.5 M2.6,14.5 Q5.6,14.2 8.8,11" fill="none" stroke="#9cc3dd" stroke-width="0.7" stroke-linecap="round"/><circle cx="15.2" cy="14.8" r="3.1" fill="#f0f0f0" stroke="#5a8fb8" stroke-width="1.3" stroke-dasharray="1.5 0.7"/><circle cx="15.2" cy="14.8" r="1.1" fill="none" stroke="#5a8fb8" stroke-width=".8"/></svg></svg>
<div id="tags"></div>
<svg class="abs" style="left:0;top:0" width="1280" height="300" viewBox="0 0 1280 300"><circle cx="1043.3" cy="22.3" r="2.8" fill="#d4d4d4" stroke="#c2c2c2" stroke-width=".5"/><text x="1159" y="25" font-family="Liberation Sans,sans-serif" font-size="7" fill="#2a2a2a" stroke="#2a2a2a" stroke-width=".3" text-anchor="middle">Tags</text><circle cx="1051" cy="38.2" r="4.4" fill="none" stroke="#666" stroke-width=".9"/><path d="M1048.6,38.2 L1053.4,38.2 M1051,35.8 L1051,40.6" stroke="#666" stroke-width=".9"/><path d="M1061.5,34 L1065,34 L1066,35.3 L1071.5,35.3 L1071.5,41.5 L1061.5,41.5Z" fill="none" stroke="#666" stroke-width=".9"/><circle cx="1070.5" cy="41" r="2.4" fill="#ececec" stroke="#666" stroke-width=".8"/><rect x="1079" y="30.7" width="144.5" height="14.3" rx="3.5" fill="#fff" stroke="#d8d8d8" stroke-width=".6"/><circle cx="1086.6" cy="37.5" r="2.9" fill="none" stroke="#333" stroke-width="1"/><path d="M1088.7,39.7 L1091,42" stroke="#333" stroke-width="1.1"/><text x="1096.5" y="41" font-family="Liberation Sans,sans-serif" font-size="8.2" fill="#c4c4c4">Filter</text><path d="M1230.5,41 L1231.5,37 L1236,33.5 L1239.5,37 L1235,41.5 Z" fill="none" stroke="#666" stroke-width=".9" stroke-linejoin="round"/><path d="M1247,38 L1252,33.5 L1257,36.5 L1256,41 L1251.5,43 L1247.5,41Z M1249,36.5 L1255,40 M1251,35 L1256.5,38.3" fill="none" stroke="#666" stroke-width=".8" stroke-linejoin="round"/><rect x="1263" y="34.5" width="5" height="7.5" fill="#3b6ea8" stroke="#223" stroke-width=".6"/><path d="M1267,33.5 L1273,38.2 L1267,43 Z" fill="#111"/><rect x="1044" y="49" width="231.5" height="229.5" fill="#fff"/><rect x="1044" y="79.2" width="231.5" height="11.4" fill="#f1f1f1"/><rect x="1044" y="102.1" width="231.5" height="11.4" fill="#f1f1f1"/><rect x="1044" y="124.9" width="231.5" height="11.4" fill="#f1f1f1"/><rect x="1044" y="147.7" width="231.5" height="11.4" fill="#f1f1f1"/><rect x="1044" y="170.6" width="231.5" height="11.4" fill="#f1f1f1"/><rect x="1044" y="193.4" width="231.5" height="11.4" fill="#f1f1f1"/><rect x="1044" y="216.3" width="231.5" height="11.4" fill="#f1f1f1"/><rect x="1044" y="239.1" width="231.5" height="11.4" fill="#f1f1f1"/><rect x="1044" y="261.9" width="231.5" height="11.4" fill="#f1f1f1"/><rect x="1044" y="102.05" width="231.5" height="11.45" fill="#d5d5d5"/><path d="M1044,67.6 L1275.5,67.6" stroke="#e3e3e3" stroke-width=".7"/><path d="M1067.5,52 L1067.5,64" stroke="#e0e0e0" stroke-width=".8"/><path d="M1167.3,52 L1167.3,64" stroke="#e0e0e0" stroke-width=".8"/><path d="M1187.5,52 L1187.5,64" stroke="#e0e0e0" stroke-width=".8"/><path d="M1256.5,52 L1256.5,64" stroke="#e0e0e0" stroke-width=".8"/><text x="1080.5" y="61.3" font-family="Liberation Sans,sans-serif" font-size="7.4" fill="#222" stroke="#222" stroke-width=".2">Name</text><text x="1191.3" y="61.3" font-family="Liberation Sans,sans-serif" font-size="7.4" fill="#222" stroke="#222" stroke-width=".2">Dashes</text><path d="M1156.3,60 L1158.8,57.3 L1161.3,60" fill="none" stroke="#666" stroke-width=".9"/><text x="1079" y="76.2" font-family="Liberation Sans,sans-serif" font-size="9.05" fill="#111" stroke="#111" stroke-width=".25">Untagged</text><path d="M1051.8,73.5 Q1057,67.9 1062.2,73.5 Q1057,79.1 1051.8,73.5Z" fill="#fff" stroke="#111" stroke-width=".9"/><circle cx="1057" cy="73.5" r="1.9" fill="#111"/><text x="1079" y="87.6" font-family="Liberation Sans,sans-serif" font-size="9.05" fill="#111" stroke="#111" stroke-width=".25">Tag Folder</text><path d="M1051.8,84.9 Q1057,79.3 1062.2,84.9 Q1057,90.5 1051.8,84.9Z" fill="#fff" stroke="#111" stroke-width=".9"/><circle cx="1057" cy="84.9" r="1.9" fill="#111"/><text x="1079" y="99.0" font-family="Liberation Sans,sans-serif" font-size="9.05" fill="#111" stroke="#111" stroke-width=".25">Buildings</text><path d="M1051.8,96.3 Q1057,90.7 1062.2,96.3 Q1057,101.9 1051.8,96.3Z" fill="#fff" stroke="#111" stroke-width=".9"/><circle cx="1057" cy="96.3" r="1.9" fill="#111"/><text x="1079" y="110.4" font-family="Liberation Sans,sans-serif" font-size="9.05" fill="#111" stroke="#111" stroke-width=".25">Roads</text><path d="M1051.8,107.7 Q1057,102.1 1062.2,107.7 Q1057,113.3 1051.8,107.7Z" fill="#fff" stroke="#111" stroke-width=".9"/><circle cx="1057" cy="107.7" r="1.9" fill="#111"/><text x="1079" y="121.8" font-family="Liberation Sans,sans-serif" font-size="9.05" fill="#c8c8c8" stroke="#c8c8c8" stroke-width=".25">Trees</text><ellipse cx="1057" cy="119.1" rx="4.8" ry="2.7" fill="#fff" stroke="#111" stroke-width=".9"/><path d="M1072,82.3 L1074.6,84.9 L1072,87.5" fill="none" stroke="#555" stroke-width=".8"/><text x="1188.8" y="76.5" font-family="Liberation Sans,sans-serif" font-size="9.05" fill="#111" stroke="#111" stroke-width=".25">Default</text><rect x="1168" y="90.0" width="19" height="11.4" fill="#c326f2"/><path d="M1189,96.0 L1255.5,96.0" stroke="#111" stroke-width="1.5"/><rect x="1168" y="101.4" width="19" height="11.4" fill="#fbfb2a"/><path d="M1189,107.4 L1255.5,107.4" stroke="#111" stroke-width="1.5"/><rect x="1168" y="112.8" width="19" height="11.4" fill="#55a857"/><path d="M1189,118.8 L1255.5,118.8" stroke="#111" stroke-width="1.5"/><path d="M1260.5,110.9 L1268,103.9" stroke="#b8151f" stroke-width="1.6"/><path d="M1260,111.4 L1261.5,109.9" stroke="#222" stroke-width="1.4"/><path d="M1273,282 L1278,277 M1275.5,282 L1278,279.5" stroke="#aaa" stroke-width=".6"/></svg>
<div id="colors"></div>
<svg class="abs" style="left:0;top:0" width="1280" height="720" viewBox="0 0 1280 720"><circle cx="1047.3" cy="334.2" r="2.9" fill="#d6d6d6" stroke="#c6c6c6" stroke-width=".5"/><circle cx="1057.3" cy="334.2" r="2.9" fill="#d6d6d6" stroke="#c6c6c6" stroke-width=".5"/><circle cx="1067.3" cy="334.2" r="2.9" fill="#d6d6d6" stroke="#c6c6c6" stroke-width=".5"/><text x="1152" y="337" font-family="Liberation Sans,sans-serif" font-size="7.7" fill="#a6a6a6" text-anchor="middle">Colors</text><rect x="1150" y="341" width="20.5" height="17" rx="3" fill="#dcdcdc"/><path d="M1053,350.5 L1059.40,350.50 A6.4,6.4 0 0 1 1057.29,355.25 Z" fill="#ff3b30"/><path d="M1053,350.5 L1057.53,355.03 A6.4,6.4 0 0 1 1052.68,356.89 Z" fill="#ff9500"/><path d="M1053,350.5 L1053.00,356.90 A6.4,6.4 0 0 1 1048.25,354.79 Z" fill="#ffe600"/><path d="M1053,350.5 L1048.47,355.03 A6.4,6.4 0 0 1 1046.61,350.18 Z" fill="#4cd964"/><path d="M1053,350.5 L1046.60,350.50 A6.4,6.4 0 0 1 1048.71,345.75 Z" fill="#34c8ff"/><path d="M1053,350.5 L1048.47,345.97 A6.4,6.4 0 0 1 1053.32,344.11 Z" fill="#3a5bff"/><path d="M1053,350.5 L1053.00,344.10 A6.4,6.4 0 0 1 1057.75,346.21 Z" fill="#b44cff"/><path d="M1053,350.5 L1057.53,345.97 A6.4,6.4 0 0 1 1059.39,350.82 Z" fill="#ff4fb8"/><circle cx="1053" cy="350.5" r="2.6" fill="#fff" opacity=".85"/><rect x="1067" y="345.3" width="14.5" height="3" rx="1" fill="#d8434b"/><rect x="1067" y="349.5" width="14.5" height="3" rx="1" fill="#49b35a"/><rect x="1067" y="353.7" width="14.5" height="3" rx="1" fill="#3d63d8"/><circle cx="1072" cy="346.8" r="1.3" fill="#fff"/><circle cx="1077" cy="351" r="1.3" fill="#fff"/><circle cx="1074" cy="355.2" r="1.3" fill="#fff"/><rect x="1089.5" y="344.5" width="9.5" height="9.5" rx="1" fill="#fbfbfb" stroke="#bbb" stroke-width=".5"/><circle cx="1092.3" cy="347.3" r="1.5" fill="#e23"/><circle cx="1096.0" cy="347.3" r="1.5" fill="#ea2"/><circle cx="1092.3" cy="351.0" r="1.5" fill="#3a5"/><circle cx="1096.0" cy="351.0" r="1.5" fill="#35d"/><rect x="1094.5" y="350" width="7" height="6.5" rx="1" fill="#333"/><circle cx="1096.5" cy="353.2" r="1" fill="#fff"/><circle cx="1099.6" cy="353.2" r="1" fill="#fff"/><rect x="1110" y="344.5" width="14.5" height="11.5" fill="#f4d9d4" stroke="#ccc" stroke-width=".5"/><path d="M1110,353 L1114,349.5 L1117,352 L1120,350 L1124.5,353 L1124.5,356 L1110,356Z" fill="#43304a"/><rect x="1110" y="347.5" width="14.5" height="2" fill="#e8908a" opacity=".8"/><rect x="1131.7" y="346" width="2.2" height="8" fill="#e33"/><rect x="1133.9" y="346" width="2.2" height="8" fill="#f90"/><rect x="1136.1" y="346" width="2.2" height="8" fill="#ed0"/><rect x="1138.3" y="346" width="2.2" height="8" fill="#3b4"/><rect x="1140.5" y="346" width="2.2" height="8" fill="#36d"/><rect x="1142.7" y="346" width="2.2" height="8" fill="#93c"/><rect x="1131" y="354" width="14.6" height="3" fill="#f8f8f8" stroke="#bbb" stroke-width=".4"/><path d="M1132,344.5 L1145,344.5" stroke="#555" stroke-width=".8" stroke-dasharray="1.2 1"/><path d="M1153,350 L1163.5,344.5 L1167.5,347 L1167.5,352.5 L1157,358 L1153,355.5Z" fill="#c3392b" stroke="#7e1f16" stroke-width=".6"/><path d="M1153,350 L1157,352.5 L1167.5,347 M1157,352.5 L1157,358" stroke="#7e1f16" stroke-width=".6" fill="none"/><ellipse cx="1159.5" cy="348.5" rx="1.2" ry=".7" fill="#6d1a12"/><ellipse cx="1162.5" cy="347" rx="1.2" ry=".7" fill="#6d1a12"/><path d="M1049,375.3 L1053.5,371.3 L1053.5,373.6 L1057,373.6 L1057,377 L1053.5,377 L1053.5,379.3Z" fill="#fff" stroke="#111" stroke-width=".9" stroke-linejoin="round"/><path d="M1068.5,375.3 L1064,371.3 L1064,373.6 L1060.8,373.6 L1060.8,377 L1064,377 L1064,379.3Z" fill="#fff" stroke="#aaa" stroke-width=".8" stroke-linejoin="round"/><path d="M1072.5,375.5 L1077,371 L1081.5,375.5 M1073.8,374.6 L1073.8,380 L1080.2,380 L1080.2,374.6" fill="#fff" stroke="#111" stroke-width="1"/><rect x="1076" y="376.5" width="2" height="3.5" fill="#111"/><rect x="1085.5" y="369.5" width="172.5" height="13" rx="3" fill="#fff" stroke="#d6d6d6" stroke-width=".5"/><text x="1088.5" y="379" font-family="Liberation Sans,sans-serif" font-size="7.85" fill="#222" stroke="#222" stroke-width=".2">Landscaping, Fencing and Vegetation</text><path d="M1251.8,374.3 L1253.5,372.3 L1255.2,374.3 M1251.8,377.3 L1253.5,379.3 L1255.2,377.3" fill="none" stroke="#222" stroke-width=".9"/><rect x="1047" y="386" width="205" height="181" fill="#fff"/><rect x="1252" y="386" width="6" height="181" fill="#f6f6f6"/><rect x="1253.6" y="389" width="3.4" height="102" rx="1.7" fill="#c2c2c2"/><g><rect x="1056.5" y="387.5" width="16.5" height="32.5" fill="#a59a9d"/><path d="M1064.7,387.5 L1064.7,420 M1056.5,395 L1064.7,395 M1064.7,403 L1073,403 M1056.5,411.5 L1064.7,411.5 M1064.7,392 L1073,392" stroke="#7d7276" stroke-width=".7"/><rect x="1083.7" y="395.2" width="33.3" height="17" fill="#8b8d90"/><path d="M1083.7,403.5 L1117,403.5 M1095,395.2 L1095,403.5 M1107,395.2 L1107,403.5 M1089,403.5 L1089,412 M1101,403.5 L1101,412 M1112,403.5 L1112,412" stroke="#67696c" stroke-width=".7"/><rect x="1119.0" y="390.0" width="33.5" height="26.5" fill="#8d3a3c"/><circle cx="1123.5" cy="412.5" r="1.0" fill="#964446"/><circle cx="1123.0" cy="410.2" r="0.8" fill="#964446"/><circle cx="1145.4" cy="392.5" r="0.5" fill="#964446"/><circle cx="1133.5" cy="410.2" r="0.5" fill="#964446"/><circle cx="1127.9" cy="411.2" r="0.9" fill="#84343a"/><circle cx="1149.2" cy="390.8" r="0.5" fill="#803034"/><circle cx="1119.3" cy="413.4" r="0.3" fill="#964446"/><circle cx="1143.3" cy="404.0" r="1.0" fill="#964446"/><circle cx="1137.5" cy="399.2" r="1.0" fill="#964446"/><circle cx="1150.9" cy="414.6" r="0.8" fill="#803034"/><circle cx="1149.9" cy="392.7" r="0.9" fill="#803034"/><circle cx="1147.8" cy="393.2" r="0.7" fill="#803034"/><circle cx="1151.6" cy="403.3" r="0.9" fill="#803034"/><circle cx="1146.8" cy="407.8" r="0.7" fill="#803034"/><circle cx="1151.6" cy="403.2" r="0.9" fill="#964446"/><circle cx="1138.7" cy="390.9" r="0.7" fill="#964446"/><circle cx="1132.9" cy="394.6" r="0.9" fill="#803034"/><circle cx="1145.0" cy="409.6" r="0.6" fill="#803034"/><circle cx="1136.0" cy="410.6" r="0.9" fill="#964446"/><circle cx="1131.4" cy="409.4" r="0.8" fill="#964446"/><circle cx="1142.6" cy="416.1" r="0.4" fill="#964446"/><circle cx="1140.7" cy="394.5" r="0.7" fill="#84343a"/><circle cx="1144.8" cy="404.3" r="1.1" fill="#84343a"/><circle cx="1132.5" cy="399.1" r="1.1" fill="#964446"/><circle cx="1134.4" cy="397.1" r="0.9" fill="#803034"/><circle cx="1148.7" cy="409.6" r="1.1" fill="#803034"/><circle cx="1145.0" cy="395.4" r="1.2" fill="#964446"/><circle cx="1148.1" cy="405.1" r="0.6" fill="#803034"/><circle cx="1132.8" cy="411.6" r="0.8" fill="#84343a"/><circle cx="1137.0" cy="406.5" r="0.9" fill="#964446"/><circle cx="1139.1" cy="411.3" r="0.9" fill="#803034"/><circle cx="1138.6" cy="412.8" r="1.1" fill="#964446"/><circle cx="1120.1" cy="415.0" r="0.5" fill="#84343a"/><circle cx="1134.2" cy="410.0" r="0.7" fill="#964446"/><circle cx="1122.7" cy="406.6" r="0.7" fill="#84343a"/><circle cx="1124.6" cy="396.8" r="1.2" fill="#803034"/><circle cx="1128.1" cy="408.9" r="0.8" fill="#964446"/><circle cx="1135.6" cy="393.0" r="0.7" fill="#964446"/><circle cx="1133.1" cy="395.0" r="0.6" fill="#803034"/><circle cx="1136.1" cy="395.5" r="0.9" fill="#84343a"/><circle cx="1126.6" cy="400.5" r="0.5" fill="#84343a"/><circle cx="1133.9" cy="403.4" r="0.8" fill="#84343a"/><circle cx="1151.7" cy="406.7" r="0.8" fill="#964446"/><circle cx="1126.5" cy="407.2" r="0.8" fill="#803034"/><circle cx="1145.9" cy="407.5" r="0.8" fill="#803034"/><circle cx="1129.0" cy="415.6" r="0.9" fill="#964446"/><circle cx="1121.4" cy="392.0" r="1.1" fill="#964446"/><circle cx="1143.9" cy="401.0" r="0.7" fill="#84343a"/><circle cx="1137.8" cy="412.5" r="0.9" fill="#84343a"/><circle cx="1151.2" cy="405.1" r="0.6" fill="#803034"/><circle cx="1139.9" cy="391.0" r="0.6" fill="#84343a"/><circle cx="1125.9" cy="407.9" r="0.8" fill="#84343a"/><circle cx="1135.5" cy="414.9" r="0.8" fill="#803034"/><circle cx="1135.7" cy="398.6" r="1.1" fill="#964446"/><circle cx="1119.6" cy="395.3" r="0.6" fill="#803034"/><circle cx="1145.2" cy="399.0" r="0.6" fill="#803034"/><circle cx="1122.2" cy="400.0" r="0.9" fill="#803034"/><circle cx="1136.9" cy="410.4" r="0.9" fill="#84343a"/><circle cx="1143.3" cy="392.2" r="0.6" fill="#803034"/><rect x="1154.8" y="388" width="33" height="30" fill="#fcfcfc"/><path d="M1155.5,392 L1187.5,392" stroke="#999" stroke-width=".6"/><circle cx="1163" cy="392" r=".7" fill="#777"/><circle cx="1172" cy="392" r=".7" fill="#777"/><circle cx="1181" cy="392" r=".7" fill="#777"/><path d="M1155.5,397.5 L1187.5,397.5" stroke="#999" stroke-width=".6"/><circle cx="1162.5" cy="397.5" r=".7" fill="#777"/><circle cx="1171.5" cy="397.5" r=".7" fill="#777"/><circle cx="1180.5" cy="397.5" r=".7" fill="#777"/><path d="M1155.5,403 L1187.5,403" stroke="#999" stroke-width=".6"/><circle cx="1162" cy="403" r=".7" fill="#777"/><circle cx="1171" cy="403" r=".7" fill="#777"/><circle cx="1180" cy="403" r=".7" fill="#777"/><path d="M1155.5,408.5 L1187.5,408.5" stroke="#999" stroke-width=".6"/><circle cx="1161.5" cy="408.5" r=".7" fill="#777"/><circle cx="1170.5" cy="408.5" r=".7" fill="#777"/><circle cx="1179.5" cy="408.5" r=".7" fill="#777"/><path d="M1155.5,414 L1187.5,414" stroke="#999" stroke-width=".6"/><circle cx="1161" cy="414" r=".7" fill="#777"/><circle cx="1170" cy="414" r=".7" fill="#777"/><circle cx="1179" cy="414" r=".7" fill="#777"/><path d="M1190.5,402.5 L1206,388.5 L1222.5,401.5 L1208,418 Z" fill="#fff" stroke="#111" stroke-width="1.5" stroke-linejoin="round"/><path d="M1048.5,438 L1056,427.5 L1073,427.5 L1081,438 L1073,449.5 L1056,449.5Z" fill="none" stroke="#c8342a" stroke-width="2.2" stroke-linejoin="round"/><rect x="1084" y="421.5" width="33" height="32.5" fill="#fbfbfb"/><path d="M1087,422.5 L1116,452 M1115,422.5 L1086,452" stroke="#a8683c" stroke-width="8"/><path d="M1087,422.5 L1116,452 M1115,422.5 L1086,452" stroke="#cf9766" stroke-width="3.2"/><rect x="1119" y="421.5" width="34" height="32.5" fill="#fbfbfb"/><path d="M1120.5,426 L1120.5,449" stroke="#222" stroke-width=".9"/><path d="M1123.3,426 L1123.3,449" stroke="#222" stroke-width=".9"/><path d="M1126.2,426 L1126.2,449" stroke="#222" stroke-width=".9"/><path d="M1129.0,426 L1129.0,449" stroke="#222" stroke-width=".9"/><path d="M1131.9,426 L1131.9,449" stroke="#222" stroke-width=".9"/><path d="M1134.8,426 L1134.8,449" stroke="#222" stroke-width=".9"/><path d="M1137.6,426 L1137.6,449" stroke="#222" stroke-width=".9"/><path d="M1140.5,426 L1140.5,449" stroke="#222" stroke-width=".9"/><path d="M1143.3,426 L1143.3,449" stroke="#222" stroke-width=".9"/><path d="M1146.2,426 L1146.2,449" stroke="#222" stroke-width=".9"/><path d="M1149.0,426 L1149.0,449" stroke="#222" stroke-width=".9"/><path d="M1151.8,426 L1151.8,449" stroke="#222" stroke-width=".9"/><path d="M1119,428.5 L1153,428.5 M1119,447.5 L1153,447.5" stroke="#222" stroke-width=".9"/><rect x="1154.8" y="421.5" width="34" height="32.5" fill="#fbfbfb"/><path d="M1155.5,428.0 L1155.5,449" stroke="#8a8a8a" stroke-width="1.5"/><path d="M1158.1,427.4 L1158.1,449" stroke="#8a8a8a" stroke-width="1.5"/><path d="M1160.7,426.9 L1160.7,449" stroke="#8a8a8a" stroke-width="1.5"/><path d="M1163.3,426.4 L1163.3,449" stroke="#8a8a8a" stroke-width="1.5"/><path d="M1165.9,426.1 L1165.9,449" stroke="#8a8a8a" stroke-width="1.5"/><path d="M1168.5,425.9 L1168.5,449" stroke="#8a8a8a" stroke-width="1.5"/><path d="M1171.1,425.8 L1171.1,449" stroke="#8a8a8a" stroke-width="1.5"/><path d="M1173.7,425.9 L1173.7,449" stroke="#8a8a8a" stroke-width="1.5"/><path d="M1176.3,426.1 L1176.3,449" stroke="#8a8a8a" stroke-width="1.5"/><path d="M1178.9,426.4 L1178.9,449" stroke="#8a8a8a" stroke-width="1.5"/><path d="M1181.5,426.9 L1181.5,449" stroke="#8a8a8a" stroke-width="1.5"/><path d="M1184.1,427.4 L1184.1,449" stroke="#8a8a8a" stroke-width="1.5"/><path d="M1186.7,428.0 L1186.7,449" stroke="#8a8a8a" stroke-width="1.5"/><path d="M1155,447 L1188,447 M1155,431 L1188,431" stroke="#8a8a8a" stroke-width=".9"/><rect x="1190" y="422" width="33.5" height="32" fill="#fdfdfd"/><path d="M1191.0,424 L1191.0,451" stroke="#aaa" stroke-width=".7"/><path d="M1194.9,424 L1194.9,451" stroke="#aaa" stroke-width=".7"/><path d="M1198.8,424 L1198.8,451" stroke="#aaa" stroke-width=".7"/><path d="M1202.7,424 L1202.7,451" stroke="#aaa" stroke-width=".7"/><path d="M1206.6,424 L1206.6,451" stroke="#aaa" stroke-width=".7"/><path d="M1210.5,424 L1210.5,451" stroke="#aaa" stroke-width=".7"/><path d="M1214.4,424 L1214.4,451" stroke="#aaa" stroke-width=".7"/><path d="M1218.3,424 L1218.3,451" stroke="#aaa" stroke-width=".7"/><path d="M1222.2,424 L1222.2,451" stroke="#aaa" stroke-width=".7"/><path d="M1190,424 L1223.5,424 M1190,428 L1223.5,428 M1190,449.5 L1223.5,449.5" stroke="#999" stroke-width=".8"/><rect x="1052.3" y="455.5" width="24.7" height="32" fill="#8c8f8f"/><path d="M1055,455.5 L1055,487.5" stroke="#9da1a3" stroke-width="1"/><path d="M1058.5,455.5 L1058.5,487.5" stroke="#5f6366" stroke-width="1"/><path d="M1062,455.5 L1062,487.5" stroke="#9da1a3" stroke-width="1"/><path d="M1065,455.5 L1065,487.5" stroke="#5f6366" stroke-width="1"/><path d="M1069,455.5 L1069,487.5" stroke="#9da1a3" stroke-width="1"/><path d="M1072.5,455.5 L1072.5,487.5" stroke="#5f6366" stroke-width="1"/><path d="M1075,455.5 L1075,487.5" stroke="#9da1a3" stroke-width="1"/><rect x="1084.0" y="455.5" width="33.0" height="32.0" fill="#62b52f"/><circle cx="1091.9" cy="472.9" r="0.8" fill="#8fd455"/><circle cx="1104.6" cy="457.6" r="0.5" fill="#8fd455"/><circle cx="1092.6" cy="463.0" r="1.2" fill="#8fd455"/><circle cx="1101.9" cy="473.1" r="0.8" fill="#79c840"/><circle cx="1091.7" cy="460.4" r="1.1" fill="#8fd455"/><circle cx="1108.5" cy="477.0" r="0.5" fill="#4fa020"/><circle cx="1093.9" cy="456.5" r="1.0" fill="#8fd455"/><circle cx="1103.6" cy="484.9" r="0.8" fill="#8fd455"/><circle cx="1097.0" cy="481.1" r="0.8" fill="#79c840"/><circle cx="1113.0" cy="458.6" r="0.6" fill="#79c840"/><circle cx="1092.5" cy="477.0" r="1.0" fill="#58ad2a"/><circle cx="1097.9" cy="482.2" r="0.9" fill="#8fd455"/><circle cx="1103.3" cy="484.4" r="1.0" fill="#4fa020"/><circle cx="1112.3" cy="487.2" r="0.3" fill="#79c840"/><circle cx="1107.1" cy="465.9" r="0.9" fill="#4fa020"/><circle cx="1107.6" cy="462.3" r="1.1" fill="#58ad2a"/><circle cx="1093.4" cy="457.5" r="1.1" fill="#8fd455"/><circle cx="1086.9" cy="481.1" r="0.8" fill="#79c840"/><circle cx="1084.7" cy="469.2" r="0.7" fill="#4fa020"/><circle cx="1085.5" cy="475.2" r="0.5" fill="#58ad2a"/><circle cx="1102.2" cy="485.0" r="0.7" fill="#79c840"/><circle cx="1103.8" cy="456.5" r="0.6" fill="#8fd455"/><circle cx="1093.6" cy="463.9" r="1.0" fill="#58ad2a"/><circle cx="1094.4" cy="486.2" r="1.1" fill="#8fd455"/><circle cx="1096.4" cy="483.3" r="0.8" fill="#4fa020"/><circle cx="1104.5" cy="485.6" r="0.9" fill="#8fd455"/><circle cx="1104.9" cy="478.4" r="1.2" fill="#8fd455"/><circle cx="1116.3" cy="472.2" r="0.7" fill="#4fa020"/><circle cx="1110.0" cy="487.1" r="0.4" fill="#8fd455"/><circle cx="1104.3" cy="475.7" r="0.5" fill="#58ad2a"/><circle cx="1099.4" cy="477.2" r="0.7" fill="#58ad2a"/><circle cx="1108.4" cy="456.2" r="0.5" fill="#4fa020"/><circle cx="1115.8" cy="463.5" r="0.8" fill="#58ad2a"/><circle cx="1089.9" cy="461.4" r="1.0" fill="#58ad2a"/><circle cx="1093.9" cy="467.6" r="1.0" fill="#4fa020"/><circle cx="1116.1" cy="477.4" r="0.6" fill="#79c840"/><circle cx="1105.6" cy="464.1" r="0.7" fill="#8fd455"/><circle cx="1105.4" cy="458.6" r="0.9" fill="#58ad2a"/><circle cx="1106.3" cy="462.7" r="1.1" fill="#79c840"/><circle cx="1086.6" cy="479.2" r="0.7" fill="#8fd455"/><circle cx="1092.9" cy="480.7" r="0.5" fill="#79c840"/><circle cx="1094.4" cy="482.3" r="0.9" fill="#58ad2a"/><circle cx="1095.2" cy="482.0" r="0.6" fill="#58ad2a"/><circle cx="1103.5" cy="469.0" r="0.9" fill="#58ad2a"/><circle cx="1099.3" cy="475.8" r="0.7" fill="#8fd455"/><circle cx="1085.2" cy="468.7" r="0.6" fill="#8fd455"/><circle cx="1115.1" cy="483.7" r="1.2" fill="#8fd455"/><circle cx="1102.4" cy="487.0" r="0.5" fill="#4fa020"/><circle cx="1108.6" cy="482.3" r="1.0" fill="#58ad2a"/><circle cx="1101.9" cy="484.0" r="1.1" fill="#58ad2a"/><circle cx="1088.0" cy="463.3" r="0.5" fill="#79c840"/><circle cx="1113.6" cy="484.3" r="0.9" fill="#4fa020"/><circle cx="1099.9" cy="459.4" r="0.9" fill="#79c840"/><circle cx="1105.9" cy="472.3" r="0.8" fill="#4fa020"/><circle cx="1095.3" cy="463.6" r="1.1" fill="#8fd455"/><circle cx="1110.8" cy="457.5" r="0.7" fill="#4fa020"/><circle cx="1101.6" cy="481.6" r="0.6" fill="#58ad2a"/><circle cx="1114.4" cy="481.3" r="1.1" fill="#4fa020"/><circle cx="1100.1" cy="473.8" r="0.8" fill="#58ad2a"/><circle cx="1092.2" cy="475.3" r="0.9" fill="#4fa020"/><circle cx="1099.6" cy="480.3" r="0.5" fill="#4fa020"/><circle cx="1109.6" cy="457.0" r="0.5" fill="#8fd455"/><circle cx="1116.2" cy="482.8" r="0.6" fill="#8fd455"/><circle cx="1094.4" cy="465.6" r="0.7" fill="#8fd455"/><circle cx="1103.4" cy="467.0" r="0.6" fill="#58ad2a"/><circle cx="1098.1" cy="459.6" r="0.5" fill="#8fd455"/><circle cx="1110.2" cy="473.6" r="0.5" fill="#8fd455"/><circle cx="1103.9" cy="480.5" r="0.8" fill="#4fa020"/><circle cx="1104.6" cy="469.3" r="0.8" fill="#8fd455"/><circle cx="1109.1" cy="465.6" r="1.2" fill="#8fd455"/><circle cx="1099.2" cy="463.3" r="0.9" fill="#4fa020"/><circle cx="1110.5" cy="462.7" r="0.6" fill="#4fa020"/><circle cx="1114.9" cy="467.5" r="1.1" fill="#58ad2a"/><circle cx="1088.0" cy="477.6" r="1.2" fill="#8fd455"/><circle cx="1106.0" cy="479.0" r="0.9" fill="#4fa020"/><circle cx="1110.8" cy="478.4" r="0.8" fill="#79c840"/><circle cx="1109.6" cy="456.9" r="0.6" fill="#4fa020"/><circle cx="1105.8" cy="467.5" r="1.1" fill="#58ad2a"/><circle cx="1111.8" cy="459.4" r="1.1" fill="#8fd455"/><circle cx="1111.6" cy="486.0" r="0.9" fill="#4fa020"/><circle cx="1085.2" cy="480.1" r="0.9" fill="#79c840"/><circle cx="1087.5" cy="479.5" r="1.2" fill="#4fa020"/><circle cx="1102.2" cy="483.3" r="0.6" fill="#4fa020"/><circle cx="1092.0" cy="461.3" r="0.7" fill="#8fd455"/><circle cx="1092.3" cy="474.7" r="1.2" fill="#8fd455"/><circle cx="1115.9" cy="467.5" r="0.7" fill="#8fd455"/><circle cx="1111.8" cy="486.4" r="0.8" fill="#8fd455"/><circle cx="1089.2" cy="468.3" r="1.1" fill="#79c840"/><circle cx="1087.2" cy="479.4" r="1.1" fill="#8fd455"/><circle cx="1103.4" cy="483.0" r="0.6" fill="#79c840"/><circle cx="1088.8" cy="472.0" r="1.2" fill="#58ad2a"/><circle cx="1106.2" cy="482.9" r="0.9" fill="#58ad2a"/><circle cx="1113.4" cy="465.3" r="0.7" fill="#8fd455"/><circle cx="1090.6" cy="473.7" r="0.7" fill="#8fd455"/><circle cx="1109.5" cy="460.1" r="1.2" fill="#8fd455"/><circle cx="1107.1" cy="462.1" r="0.9" fill="#4fa020"/><circle cx="1099.9" cy="478.6" r="1.1" fill="#8fd455"/><circle cx="1109.8" cy="483.7" r="0.5" fill="#79c840"/><circle cx="1113.4" cy="476.2" r="1.0" fill="#4fa020"/><circle cx="1115.6" cy="482.8" r="0.7" fill="#79c840"/><circle cx="1109.6" cy="459.9" r="0.9" fill="#4fa020"/><circle cx="1113.7" cy="463.7" r="1.1" fill="#58ad2a"/><circle cx="1090.0" cy="458.4" r="1.1" fill="#4fa020"/><circle cx="1087.1" cy="482.2" r="0.7" fill="#58ad2a"/><circle cx="1098.9" cy="479.0" r="0.7" fill="#4fa020"/><circle cx="1095.0" cy="469.5" r="0.8" fill="#79c840"/><circle cx="1105.3" cy="479.3" r="0.8" fill="#79c840"/><circle cx="1102.0" cy="459.3" r="0.7" fill="#8fd455"/><circle cx="1087.7" cy="483.9" r="1.1" fill="#4fa020"/><rect x="1118.8" y="455" width="34.2" height="33" fill="#7d97a6"/><rect x="1120.2" y="456.5" width="31.4" height="30.0" fill="#8aa53a"/><circle cx="1127.6" cy="459.6" r="0.8" fill="#7f9a33"/><circle cx="1123.0" cy="457.1" r="0.6" fill="#96b045"/><circle cx="1145.3" cy="479.5" r="0.7" fill="#86a23c"/><circle cx="1131.5" cy="479.9" r="1.1" fill="#96b045"/><circle cx="1126.9" cy="484.3" r="1.1" fill="#96b045"/><circle cx="1145.3" cy="462.3" r="0.7" fill="#86a23c"/><circle cx="1147.4" cy="485.3" r="1.1" fill="#96b045"/><circle cx="1122.9" cy="474.7" r="1.0" fill="#86a23c"/><circle cx="1128.0" cy="463.9" r="0.7" fill="#86a23c"/><circle cx="1146.6" cy="456.7" r="0.2" fill="#86a23c"/><circle cx="1147.9" cy="481.9" r="0.9" fill="#96b045"/><circle cx="1133.5" cy="465.1" r="0.8" fill="#7f9a33"/><circle cx="1129.8" cy="480.9" r="0.5" fill="#7f9a33"/><circle cx="1140.5" cy="477.5" r="0.6" fill="#86a23c"/><circle cx="1126.3" cy="468.9" r="0.6" fill="#86a23c"/><circle cx="1134.1" cy="462.0" r="0.8" fill="#86a23c"/><circle cx="1130.3" cy="473.3" r="1.1" fill="#7f9a33"/><circle cx="1146.6" cy="477.7" r="0.7" fill="#86a23c"/><circle cx="1139.5" cy="463.6" r="0.7" fill="#7f9a33"/><circle cx="1129.3" cy="457.3" r="0.7" fill="#7f9a33"/><circle cx="1148.3" cy="485.1" r="1.0" fill="#96b045"/><circle cx="1120.8" cy="465.2" r="0.6" fill="#86a23c"/><circle cx="1133.1" cy="484.8" r="0.9" fill="#7f9a33"/><circle cx="1129.4" cy="462.2" r="0.8" fill="#7f9a33"/><circle cx="1128.1" cy="474.5" r="0.6" fill="#86a23c"/><circle cx="1120.5" cy="457.8" r="0.3" fill="#96b045"/><circle cx="1126.7" cy="484.0" r="0.6" fill="#7f9a33"/><circle cx="1121.9" cy="461.6" r="1.0" fill="#7f9a33"/><circle cx="1139.2" cy="472.9" r="0.9" fill="#96b045"/><circle cx="1144.5" cy="468.8" r="1.2" fill="#96b045"/><circle cx="1126.5" cy="469.7" r="0.8" fill="#7f9a33"/><circle cx="1133.4" cy="464.0" r="1.1" fill="#7f9a33"/><circle cx="1135.9" cy="457.4" r="0.7" fill="#7f9a33"/><circle cx="1136.7" cy="479.7" r="0.8" fill="#96b045"/><circle cx="1124.6" cy="458.0" r="1.1" fill="#86a23c"/><circle cx="1123.9" cy="473.6" r="1.2" fill="#86a23c"/><circle cx="1140.7" cy="480.2" r="1.0" fill="#96b045"/><circle cx="1132.4" cy="469.4" r="1.2" fill="#86a23c"/><circle cx="1148.5" cy="484.2" r="0.7" fill="#86a23c"/><circle cx="1135.0" cy="483.5" r="0.7" fill="#96b045"/><circle cx="1136.8" cy="476.1" r="1.0" fill="#96b045"/><circle cx="1130.8" cy="468.3" r="0.8" fill="#96b045"/><circle cx="1150.4" cy="476.6" r="0.5" fill="#86a23c"/><circle cx="1124.2" cy="485.6" r="0.9" fill="#7f9a33"/><circle cx="1147.5" cy="477.1" r="0.8" fill="#96b045"/><circle cx="1143.6" cy="484.3" r="0.7" fill="#7f9a33"/><circle cx="1126.8" cy="461.2" r="0.9" fill="#96b045"/><circle cx="1123.8" cy="480.8" r="1.0" fill="#7f9a33"/><circle cx="1137.5" cy="482.9" r="0.6" fill="#86a23c"/><circle cx="1139.3" cy="481.1" r="0.9" fill="#96b045"/><circle cx="1148.9" cy="469.7" r="0.6" fill="#86a23c"/><circle cx="1138.9" cy="471.2" r="1.1" fill="#86a23c"/><circle cx="1144.5" cy="457.7" r="0.6" fill="#86a23c"/><circle cx="1148.6" cy="465.4" r="0.7" fill="#7f9a33"/><circle cx="1122.9" cy="472.8" r="0.8" fill="#96b045"/><circle cx="1132.4" cy="479.3" r="1.1" fill="#96b045"/><circle cx="1123.2" cy="459.9" r="0.9" fill="#96b045"/><circle cx="1136.3" cy="469.5" r="1.1" fill="#96b045"/><circle cx="1122.3" cy="482.9" r="0.6" fill="#96b045"/><circle cx="1149.4" cy="470.9" r="0.6" fill="#86a23c"/><circle cx="1125.5" cy="482.7" r="0.6" fill="#7f9a33"/><circle cx="1130.5" cy="482.3" r="0.7" fill="#7f9a33"/><circle cx="1137.3" cy="471.1" r="1.0" fill="#96b045"/><circle cx="1136.7" cy="472.1" r="0.8" fill="#96b045"/><circle cx="1131.4" cy="479.5" r="1.2" fill="#86a23c"/><rect x="1155.0" y="455.5" width="33.0" height="32.0" fill="#8a8a8a"/><circle cx="1175.6" cy="479.2" r="1.0" fill="#6c6c6c"/><circle cx="1182.7" cy="480.3" r="0.6" fill="#6c6c6c"/><circle cx="1184.7" cy="459.1" r="0.8" fill="#a5a5a5"/><circle cx="1167.6" cy="458.8" r="0.6" fill="#a5a5a5"/><circle cx="1168.5" cy="461.3" r="1.0" fill="#b8b4b0"/><circle cx="1160.3" cy="481.0" r="0.6" fill="#b8b4b0"/><circle cx="1161.9" cy="462.4" r="1.1" fill="#a5a5a5"/><circle cx="1164.5" cy="486.3" r="0.8" fill="#a5a5a5"/><circle cx="1161.0" cy="486.5" r="0.6" fill="#b8b4b0"/><circle cx="1164.9" cy="467.1" r="0.6" fill="#a5a5a5"/><circle cx="1163.7" cy="466.1" r="1.0" fill="#6c6c6c"/><circle cx="1174.7" cy="478.1" r="0.5" fill="#777"/><circle cx="1182.0" cy="470.9" r="0.7" fill="#b8b4b0"/><circle cx="1170.6" cy="461.1" r="0.7" fill="#6c6c6c"/><circle cx="1186.3" cy="466.9" r="0.7" fill="#b8b4b0"/><circle cx="1167.1" cy="474.0" r="0.5" fill="#6c6c6c"/><circle cx="1178.4" cy="475.5" r="1.1" fill="#6c6c6c"/><circle cx="1179.9" cy="485.2" r="1.1" fill="#777"/><circle cx="1171.9" cy="484.1" r="0.7" fill="#b8b4b0"/><circle cx="1158.6" cy="479.4" r="1.0" fill="#777"/><circle cx="1156.2" cy="485.8" r="0.6" fill="#777"/><circle cx="1171.9" cy="467.1" r="0.6" fill="#777"/><circle cx="1185.5" cy="472.9" r="0.7" fill="#777"/><circle cx="1165.1" cy="481.1" r="0.9" fill="#777"/><circle cx="1187.6" cy="472.6" r="0.4" fill="#a5a5a5"/><circle cx="1179.4" cy="466.5" r="0.7" fill="#b8b4b0"/><circle cx="1159.8" cy="486.8" r="0.7" fill="#b8b4b0"/><circle cx="1166.0" cy="462.1" r="1.1" fill="#a5a5a5"/><circle cx="1175.8" cy="480.7" r="0.6" fill="#b8b4b0"/><circle cx="1167.3" cy="457.4" r="0.8" fill="#a5a5a5"/><circle cx="1187.2" cy="470.0" r="0.8" fill="#777"/><circle cx="1170.8" cy="464.8" r="0.7" fill="#a5a5a5"/><circle cx="1158.7" cy="481.8" r="0.8" fill="#a5a5a5"/><circle cx="1175.7" cy="471.5" r="0.7" fill="#6c6c6c"/><circle cx="1171.2" cy="472.0" r="0.8" fill="#777"/><circle cx="1157.1" cy="480.9" r="0.7" fill="#6c6c6c"/><circle cx="1180.1" cy="467.1" r="0.9" fill="#777"/><circle cx="1182.6" cy="464.0" r="1.1" fill="#777"/><circle cx="1186.6" cy="466.4" r="0.6" fill="#6c6c6c"/><circle cx="1170.7" cy="480.3" r="0.7" fill="#777"/><circle cx="1170.3" cy="481.6" r="0.9" fill="#777"/><circle cx="1166.5" cy="476.1" r="0.9" fill="#b8b4b0"/><circle cx="1166.6" cy="482.5" r="1.0" fill="#b8b4b0"/><circle cx="1187.2" cy="486.1" r="0.8" fill="#a5a5a5"/><circle cx="1161.6" cy="467.1" r="1.0" fill="#777"/><circle cx="1177.8" cy="478.5" r="0.9" fill="#a5a5a5"/><circle cx="1175.4" cy="485.5" r="0.8" fill="#b8b4b0"/><circle cx="1165.0" cy="473.2" r="1.0" fill="#777"/><circle cx="1178.8" cy="456.4" r="0.6" fill="#b8b4b0"/><circle cx="1175.6" cy="461.3" r="1.0" fill="#a5a5a5"/><circle cx="1175.8" cy="456.8" r="0.8" fill="#a5a5a5"/><circle cx="1160.5" cy="484.0" r="0.6" fill="#a5a5a5"/><circle cx="1170.9" cy="473.0" r="0.7" fill="#777"/><circle cx="1167.5" cy="475.1" r="0.9" fill="#a5a5a5"/><circle cx="1178.7" cy="467.5" r="0.7" fill="#777"/><circle cx="1183.2" cy="483.2" r="0.9" fill="#777"/><circle cx="1186.8" cy="473.1" r="0.7" fill="#777"/><circle cx="1173.0" cy="466.4" r="0.8" fill="#777"/><circle cx="1182.0" cy="468.9" r="1.0" fill="#777"/><circle cx="1170.4" cy="460.5" r="0.7" fill="#b8b4b0"/><circle cx="1186.6" cy="486.5" r="0.9" fill="#777"/><circle cx="1182.1" cy="476.7" r="0.7" fill="#777"/><circle cx="1173.7" cy="475.2" r="0.6" fill="#b8b4b0"/><circle cx="1169.2" cy="486.8" r="0.7" fill="#b8b4b0"/><circle cx="1187.1" cy="467.7" r="0.9" fill="#a5a5a5"/><circle cx="1174.7" cy="463.8" r="1.1" fill="#b8b4b0"/><circle cx="1163.3" cy="456.1" r="0.6" fill="#777"/><circle cx="1171.2" cy="464.7" r="0.8" fill="#6c6c6c"/><circle cx="1176.8" cy="486.2" r="0.6" fill="#6c6c6c"/><circle cx="1180.8" cy="482.0" r="0.5" fill="#777"/><circle cx="1163.0" cy="470.7" r="0.5" fill="#b8b4b0"/><circle cx="1163.8" cy="460.5" r="1.1" fill="#777"/><circle cx="1171.2" cy="487.3" r="0.2" fill="#6c6c6c"/><circle cx="1155.5" cy="459.5" r="0.5" fill="#777"/><circle cx="1175.2" cy="478.9" r="0.5" fill="#777"/><circle cx="1166.9" cy="479.3" r="0.9" fill="#6c6c6c"/><circle cx="1158.6" cy="477.5" r="0.6" fill="#b8b4b0"/><circle cx="1180.7" cy="469.2" r="0.8" fill="#b8b4b0"/><circle cx="1183.3" cy="482.4" r="0.8" fill="#a5a5a5"/><circle cx="1184.7" cy="470.4" r="1.0" fill="#777"/><circle cx="1182.6" cy="477.7" r="0.8" fill="#777"/><circle cx="1176.4" cy="470.6" r="0.7" fill="#a5a5a5"/><circle cx="1170.8" cy="473.1" r="0.8" fill="#777"/><circle cx="1172.8" cy="469.1" r="0.8" fill="#6c6c6c"/><circle cx="1157.3" cy="462.9" r="1.0" fill="#6c6c6c"/><circle cx="1176.9" cy="456.3" r="0.8" fill="#6c6c6c"/><circle cx="1182.8" cy="462.5" r="0.9" fill="#6c6c6c"/><circle cx="1178.5" cy="459.8" r="0.7" fill="#b8b4b0"/><circle cx="1159.9" cy="475.0" r="0.7" fill="#a5a5a5"/><circle cx="1157.2" cy="462.3" r="0.8" fill="#b8b4b0"/><circle cx="1179.6" cy="464.5" r="0.8" fill="#6c6c6c"/><circle cx="1179.5" cy="483.6" r="0.6" fill="#b8b4b0"/><circle cx="1158.0" cy="477.4" r="0.8" fill="#777"/><circle cx="1186.0" cy="467.5" r="0.5" fill="#777"/><circle cx="1160.0" cy="475.7" r="0.8" fill="#a5a5a5"/><circle cx="1163.7" cy="473.2" r="0.7" fill="#777"/><circle cx="1172.1" cy="459.8" r="0.6" fill="#777"/><circle cx="1170.0" cy="467.9" r="0.6" fill="#6c6c6c"/><circle cx="1176.6" cy="458.2" r="0.9" fill="#6c6c6c"/><circle cx="1183.5" cy="471.7" r="0.8" fill="#b8b4b0"/><circle cx="1183.9" cy="470.9" r="0.7" fill="#6c6c6c"/><circle cx="1172.9" cy="467.8" r="1.0" fill="#b8b4b0"/><circle cx="1177.5" cy="462.6" r="0.6" fill="#b8b4b0"/><circle cx="1182.1" cy="460.0" r="0.9" fill="#777"/><circle cx="1182.6" cy="464.8" r="1.1" fill="#777"/><circle cx="1181.3" cy="467.6" r="0.9" fill="#777"/><circle cx="1176.4" cy="481.2" r="0.8" fill="#777"/><circle cx="1172.1" cy="474.5" r="0.8" fill="#a5a5a5"/><circle cx="1168.1" cy="458.6" r="0.5" fill="#a5a5a5"/><circle cx="1161.5" cy="471.2" r="1.1" fill="#777"/><circle cx="1175.4" cy="469.2" r="0.8" fill="#6c6c6c"/><circle cx="1161.3" cy="476.4" r="0.5" fill="#b8b4b0"/><circle cx="1183.7" cy="470.5" r="0.8" fill="#6c6c6c"/><circle cx="1164.2" cy="460.7" r="0.7" fill="#a5a5a5"/><circle cx="1156.1" cy="484.2" r="0.7" fill="#777"/><circle cx="1165.4" cy="457.4" r="0.5" fill="#b8b4b0"/><circle cx="1170.6" cy="485.8" r="0.6" fill="#777"/><circle cx="1164.6" cy="477.1" r="0.9" fill="#a5a5a5"/><circle cx="1156.1" cy="478.4" r="0.8" fill="#6c6c6c"/><circle cx="1175.4" cy="484.7" r="0.9" fill="#777"/><circle cx="1161.1" cy="467.1" r="0.5" fill="#b8b4b0"/><circle cx="1160.4" cy="463.2" r="0.9" fill="#6c6c6c"/><circle cx="1176.3" cy="469.3" r="1.1" fill="#6c6c6c"/><circle cx="1170.2" cy="470.0" r="0.9" fill="#a5a5a5"/><circle cx="1156.5" cy="473.0" r="1.1" fill="#777"/><circle cx="1186.0" cy="478.4" r="0.6" fill="#b8b4b0"/><circle cx="1158.0" cy="470.6" r="0.9" fill="#6c6c6c"/><circle cx="1171.4" cy="480.5" r="0.5" fill="#b8b4b0"/><circle cx="1169.7" cy="476.0" r="1.0" fill="#a5a5a5"/><circle cx="1160.9" cy="471.8" r="0.7" fill="#a5a5a5"/><circle cx="1157.8" cy="465.5" r="0.6" fill="#a5a5a5"/><circle cx="1174.7" cy="482.9" r="0.6" fill="#6c6c6c"/><circle cx="1169.6" cy="466.9" r="0.8" fill="#b8b4b0"/><circle cx="1172.2" cy="459.7" r="0.5" fill="#777"/><rect x="1190.0" y="459.0" width="33.5" height="25.5" fill="#a64f49"/><circle cx="1216.6" cy="480.0" r="0.7" fill="#8e3a36"/><circle cx="1191.2" cy="462.7" r="0.8" fill="#8e3a36"/><circle cx="1200.7" cy="459.6" r="0.6" fill="#c4766e"/><circle cx="1214.4" cy="469.6" r="0.8" fill="#7e2e2b"/><circle cx="1196.5" cy="473.1" r="0.9" fill="#8e3a36"/><circle cx="1212.2" cy="474.6" r="0.5" fill="#b8605a"/><circle cx="1201.2" cy="461.4" r="0.9" fill="#8e3a36"/><circle cx="1204.9" cy="461.4" r="0.6" fill="#8e3a36"/><circle cx="1193.3" cy="460.2" r="1.0" fill="#8e3a36"/><circle cx="1206.3" cy="480.2" r="0.6" fill="#6e2624"/><circle cx="1211.6" cy="476.8" r="0.9" fill="#7e2e2b"/><circle cx="1211.2" cy="465.2" r="0.7" fill="#8e3a36"/><circle cx="1209.7" cy="461.3" r="0.9" fill="#6e2624"/><circle cx="1196.7" cy="474.5" r="0.6" fill="#c4766e"/><circle cx="1202.7" cy="464.7" r="0.8" fill="#6e2624"/><circle cx="1190.4" cy="478.8" r="0.4" fill="#8e3a36"/><circle cx="1208.7" cy="476.1" r="0.8" fill="#8e3a36"/><circle cx="1202.6" cy="468.9" r="0.6" fill="#b8605a"/><circle cx="1191.8" cy="469.8" r="0.9" fill="#b8605a"/><circle cx="1193.2" cy="470.3" r="0.9" fill="#7e2e2b"/><circle cx="1219.9" cy="476.1" r="0.9" fill="#b8605a"/><circle cx="1216.3" cy="468.7" r="0.5" fill="#b8605a"/><circle cx="1205.8" cy="477.0" r="0.7" fill="#7e2e2b"/><circle cx="1196.4" cy="476.3" r="0.7" fill="#c4766e"/><circle cx="1190.6" cy="472.7" r="0.6" fill="#8e3a36"/><circle cx="1196.3" cy="471.8" r="0.7" fill="#6e2624"/><circle cx="1198.5" cy="469.5" r="0.9" fill="#6e2624"/><circle cx="1206.3" cy="474.4" r="0.8" fill="#b8605a"/><circle cx="1194.8" cy="468.6" r="0.7" fill="#b8605a"/><circle cx="1200.8" cy="475.8" r="1.0" fill="#6e2624"/><circle cx="1202.6" cy="474.4" r="0.7" fill="#b8605a"/><circle cx="1222.7" cy="477.6" r="0.6" fill="#8e3a36"/><circle cx="1208.8" cy="474.9" r="1.0" fill="#c4766e"/><circle cx="1191.0" cy="478.7" r="0.6" fill="#8e3a36"/><circle cx="1202.1" cy="482.9" r="0.9" fill="#7e2e2b"/><circle cx="1220.8" cy="462.9" r="0.6" fill="#7e2e2b"/><circle cx="1204.1" cy="478.9" r="0.9" fill="#b8605a"/><circle cx="1192.5" cy="464.9" r="0.7" fill="#c4766e"/><circle cx="1212.8" cy="465.2" r="0.7" fill="#7e2e2b"/><circle cx="1211.0" cy="461.5" r="0.6" fill="#b8605a"/><circle cx="1205.5" cy="481.9" r="0.8" fill="#6e2624"/><circle cx="1194.3" cy="480.2" r="0.5" fill="#6e2624"/><circle cx="1211.1" cy="465.8" r="0.9" fill="#b8605a"/><circle cx="1206.7" cy="459.5" r="0.5" fill="#c4766e"/><circle cx="1220.4" cy="470.2" r="0.9" fill="#b8605a"/><circle cx="1208.7" cy="471.2" r="0.8" fill="#8e3a36"/><circle cx="1222.8" cy="466.3" r="0.7" fill="#7e2e2b"/><circle cx="1206.8" cy="466.0" r="0.6" fill="#b8605a"/><circle cx="1204.4" cy="482.5" r="0.5" fill="#7e2e2b"/><circle cx="1198.4" cy="474.4" r="0.6" fill="#7e2e2b"/><circle cx="1214.8" cy="467.6" r="0.5" fill="#c4766e"/><circle cx="1213.5" cy="467.8" r="0.5" fill="#7e2e2b"/><circle cx="1203.4" cy="462.5" r="0.9" fill="#7e2e2b"/><circle cx="1194.3" cy="467.9" r="1.0" fill="#c4766e"/><circle cx="1207.6" cy="462.8" r="0.6" fill="#c4766e"/><circle cx="1207.0" cy="480.7" r="0.9" fill="#c4766e"/><circle cx="1213.3" cy="477.2" r="0.6" fill="#c4766e"/><circle cx="1215.5" cy="480.8" r="0.8" fill="#7e2e2b"/><circle cx="1212.2" cy="477.3" r="0.8" fill="#8e3a36"/><circle cx="1199.1" cy="463.7" r="0.6" fill="#c4766e"/><circle cx="1202.9" cy="460.6" r="0.5" fill="#7e2e2b"/><circle cx="1193.8" cy="477.1" r="0.6" fill="#8e3a36"/><circle cx="1210.0" cy="460.5" r="0.6" fill="#b8605a"/><circle cx="1197.6" cy="473.4" r="1.0" fill="#8e3a36"/><circle cx="1193.1" cy="461.0" r="0.8" fill="#7e2e2b"/><circle cx="1195.6" cy="475.9" r="0.6" fill="#7e2e2b"/><circle cx="1213.5" cy="463.5" r="0.8" fill="#7e2e2b"/><circle cx="1215.1" cy="476.2" r="0.9" fill="#8e3a36"/><circle cx="1198.6" cy="464.9" r="0.9" fill="#6e2624"/><circle cx="1216.4" cy="464.5" r="0.8" fill="#8e3a36"/><circle cx="1207.7" cy="477.7" r="1.0" fill="#8e3a36"/><circle cx="1216.0" cy="461.4" r="0.8" fill="#7e2e2b"/><circle cx="1202.1" cy="476.6" r="0.6" fill="#7e2e2b"/><circle cx="1202.1" cy="476.7" r="0.7" fill="#7e2e2b"/><circle cx="1201.5" cy="459.8" r="0.7" fill="#b8605a"/><circle cx="1209.8" cy="466.0" r="0.6" fill="#b8605a"/><circle cx="1208.3" cy="465.2" r="0.8" fill="#6e2624"/><circle cx="1204.4" cy="472.2" r="0.9" fill="#8e3a36"/><circle cx="1198.5" cy="466.6" r="0.5" fill="#b8605a"/><circle cx="1193.5" cy="463.5" r="0.6" fill="#7e2e2b"/><circle cx="1207.2" cy="462.1" r="0.8" fill="#b8605a"/><circle cx="1206.3" cy="481.2" r="0.9" fill="#6e2624"/><circle cx="1217.2" cy="471.0" r="0.9" fill="#b8605a"/><circle cx="1195.2" cy="482.4" r="0.9" fill="#7e2e2b"/><circle cx="1201.3" cy="465.4" r="0.6" fill="#8e3a36"/><circle cx="1209.7" cy="476.3" r="0.6" fill="#8e3a36"/><circle cx="1195.9" cy="469.4" r="0.8" fill="#c4766e"/><circle cx="1221.0" cy="461.3" r="0.7" fill="#c4766e"/><circle cx="1215.2" cy="482.3" r="0.6" fill="#7e2e2b"/><circle cx="1207.4" cy="478.8" r="0.7" fill="#8e3a36"/><circle cx="1219.6" cy="467.4" r="0.9" fill="#b8605a"/><circle cx="1219.1" cy="475.6" r="0.9" fill="#7e2e2b"/><circle cx="1198.8" cy="460.1" r="0.8" fill="#6e2624"/><circle cx="1214.1" cy="463.0" r="0.8" fill="#7e2e2b"/><circle cx="1216.2" cy="478.5" r="1.0" fill="#7e2e2b"/><circle cx="1222.8" cy="476.0" r="0.6" fill="#8e3a36"/><circle cx="1201.3" cy="483.8" r="0.7" fill="#c4766e"/><circle cx="1195.9" cy="463.7" r="0.8" fill="#b8605a"/><circle cx="1214.8" cy="470.7" r="0.6" fill="#6e2624"/><circle cx="1194.6" cy="483.8" r="0.6" fill="#8e3a36"/><circle cx="1214.6" cy="483.8" r="0.7" fill="#7e2e2b"/><circle cx="1192.1" cy="466.0" r="0.9" fill="#b8605a"/><circle cx="1221.3" cy="467.6" r="0.9" fill="#8e3a36"/><circle cx="1194.8" cy="478.3" r="0.7" fill="#b8605a"/><circle cx="1214.9" cy="479.1" r="1.0" fill="#c4766e"/><circle cx="1193.5" cy="470.4" r="0.5" fill="#c4766e"/><circle cx="1212.7" cy="471.2" r="0.5" fill="#7e2e2b"/><circle cx="1203.4" cy="464.1" r="0.8" fill="#c4766e"/><circle cx="1204.7" cy="465.5" r="0.8" fill="#8e3a36"/><circle cx="1199.9" cy="476.6" r="0.6" fill="#6e2624"/><circle cx="1222.9" cy="477.3" r="0.5" fill="#c4766e"/><circle cx="1212.2" cy="474.9" r="0.5" fill="#b8605a"/><circle cx="1208.7" cy="465.5" r="0.9" fill="#8e3a36"/><circle cx="1190.5" cy="464.4" r="0.5" fill="#c4766e"/><circle cx="1199.3" cy="466.0" r="0.7" fill="#8e3a36"/><circle cx="1197.3" cy="477.6" r="0.8" fill="#7e2e2b"/><circle cx="1217.3" cy="480.1" r="0.8" fill="#8e3a36"/><circle cx="1196.1" cy="482.6" r="0.6" fill="#b8605a"/><circle cx="1219.8" cy="474.9" r="0.6" fill="#7e2e2b"/><circle cx="1222.5" cy="460.4" r="0.9" fill="#c4766e"/><circle cx="1210.4" cy="465.9" r="0.8" fill="#7e2e2b"/><circle cx="1206.2" cy="475.4" r="0.9" fill="#8e3a36"/><circle cx="1207.5" cy="475.3" r="0.7" fill="#b8605a"/><circle cx="1215.1" cy="461.4" r="0.9" fill="#b8605a"/><circle cx="1220.0" cy="463.1" r="0.6" fill="#6e2624"/><circle cx="1200.7" cy="475.9" r="0.8" fill="#7e2e2b"/><circle cx="1212.3" cy="460.5" r="0.7" fill="#7e2e2b"/><circle cx="1195.9" cy="465.7" r="0.5" fill="#8e3a36"/><circle cx="1213.9" cy="467.8" r="0.7" fill="#7e2e2b"/><circle cx="1214.8" cy="466.2" r="0.7" fill="#8e3a36"/><circle cx="1219.9" cy="465.1" r="0.5" fill="#7e2e2b"/><circle cx="1216.0" cy="472.8" r="0.7" fill="#c4766e"/><circle cx="1216.3" cy="475.3" r="0.9" fill="#7e2e2b"/><circle cx="1193.6" cy="479.2" r="0.6" fill="#7e2e2b"/><circle cx="1191.0" cy="465.6" r="0.6" fill="#8e3a36"/><circle cx="1215.6" cy="481.7" r="0.6" fill="#7e2e2b"/><circle cx="1216.6" cy="474.2" r="0.9" fill="#b8605a"/><circle cx="1210.5" cy="471.4" r="0.7" fill="#6e2624"/><circle cx="1205.2" cy="479.4" r="0.8" fill="#c4766e"/><circle cx="1212.4" cy="462.6" r="0.6" fill="#8e3a36"/><circle cx="1205.6" cy="478.6" r="0.6" fill="#6e2624"/><circle cx="1218.6" cy="473.5" r="0.6" fill="#7e2e2b"/><circle cx="1203.6" cy="469.1" r="0.8" fill="#7e2e2b"/><circle cx="1220.8" cy="459.9" r="0.7" fill="#b8605a"/><rect x="1048.0" y="489.5" width="33.3" height="32.5" fill="#b3a27a"/><circle cx="1058.8" cy="494.4" r="1.0" fill="#8f7d55"/><circle cx="1075.3" cy="492.6" r="1.0" fill="#efe6c8"/><circle cx="1055.1" cy="492.3" r="0.8" fill="#d4c7a0"/><circle cx="1051.0" cy="503.3" r="1.2" fill="#8f7d55"/><circle cx="1079.6" cy="510.0" r="1.0" fill="#8f7d55"/><circle cx="1067.2" cy="502.4" r="1.3" fill="#8f7d55"/><circle cx="1066.5" cy="493.8" r="0.8" fill="#efe6c8"/><circle cx="1051.9" cy="499.5" r="1.2" fill="#d4c7a0"/><circle cx="1051.4" cy="508.1" r="0.7" fill="#8f7d55"/><circle cx="1066.2" cy="491.5" r="0.5" fill="#d4c7a0"/><circle cx="1064.5" cy="506.8" r="1.1" fill="#c0b088"/><circle cx="1067.5" cy="504.2" r="0.7" fill="#d4c7a0"/><circle cx="1071.3" cy="497.4" r="1.0" fill="#efe6c8"/><circle cx="1064.5" cy="500.7" r="0.9" fill="#efe6c8"/><circle cx="1080.6" cy="493.3" r="0.7" fill="#6e6040"/><circle cx="1053.1" cy="505.4" r="0.5" fill="#8f7d55"/><circle cx="1073.5" cy="508.1" r="1.2" fill="#6e6040"/><circle cx="1059.3" cy="500.9" r="0.9" fill="#c0b088"/><circle cx="1050.3" cy="492.5" r="0.7" fill="#8f7d55"/><circle cx="1050.0" cy="512.3" r="1.0" fill="#c0b088"/><circle cx="1057.5" cy="502.0" r="1.0" fill="#8f7d55"/><circle cx="1079.3" cy="501.1" r="1.0" fill="#c0b088"/><circle cx="1050.0" cy="514.5" r="0.6" fill="#d4c7a0"/><circle cx="1061.2" cy="519.3" r="0.9" fill="#d4c7a0"/><circle cx="1063.0" cy="507.4" r="1.2" fill="#c0b088"/><circle cx="1076.8" cy="498.5" r="0.8" fill="#6e6040"/><circle cx="1070.7" cy="501.9" r="0.7" fill="#8f7d55"/><circle cx="1053.9" cy="497.0" r="0.7" fill="#c0b088"/><circle cx="1075.7" cy="495.4" r="0.7" fill="#d4c7a0"/><circle cx="1062.0" cy="501.5" r="1.0" fill="#d4c7a0"/><circle cx="1071.0" cy="506.3" r="1.0" fill="#8f7d55"/><circle cx="1063.2" cy="517.8" r="1.3" fill="#efe6c8"/><circle cx="1061.1" cy="502.5" r="0.6" fill="#c0b088"/><circle cx="1050.1" cy="491.7" r="0.7" fill="#d4c7a0"/><circle cx="1051.7" cy="509.0" r="0.6" fill="#efe6c8"/><circle cx="1053.0" cy="492.8" r="0.8" fill="#8f7d55"/><circle cx="1050.3" cy="496.3" r="0.8" fill="#6e6040"/><circle cx="1079.8" cy="509.1" r="0.9" fill="#8f7d55"/><circle cx="1076.3" cy="521.8" r="0.2" fill="#c0b088"/><circle cx="1058.4" cy="494.2" r="1.1" fill="#6e6040"/><circle cx="1063.9" cy="512.0" r="0.9" fill="#d4c7a0"/><circle cx="1079.7" cy="506.7" r="0.6" fill="#efe6c8"/><circle cx="1078.4" cy="514.1" r="0.7" fill="#8f7d55"/><circle cx="1071.2" cy="498.0" r="0.8" fill="#d4c7a0"/><circle cx="1059.8" cy="496.7" r="0.9" fill="#efe6c8"/><circle cx="1059.0" cy="496.7" r="1.1" fill="#d4c7a0"/><circle cx="1074.8" cy="516.1" r="1.1" fill="#d4c7a0"/><circle cx="1054.7" cy="505.5" r="1.1" fill="#8f7d55"/><circle cx="1074.3" cy="504.8" r="0.7" fill="#efe6c8"/><circle cx="1079.9" cy="504.0" r="1.2" fill="#6e6040"/><circle cx="1079.8" cy="501.4" r="0.7" fill="#d4c7a0"/><circle cx="1063.7" cy="500.5" r="0.9" fill="#efe6c8"/><circle cx="1076.0" cy="505.1" r="1.0" fill="#8f7d55"/><circle cx="1075.8" cy="493.4" r="0.8" fill="#d4c7a0"/><circle cx="1063.9" cy="495.3" r="1.1" fill="#6e6040"/><circle cx="1050.9" cy="520.3" r="1.1" fill="#c0b088"/><circle cx="1061.4" cy="520.3" r="1.1" fill="#d4c7a0"/><circle cx="1081.1" cy="490.4" r="0.2" fill="#c0b088"/><circle cx="1074.9" cy="494.3" r="1.2" fill="#c0b088"/><circle cx="1069.9" cy="500.9" r="0.9" fill="#d4c7a0"/><circle cx="1048.7" cy="515.5" r="0.7" fill="#8f7d55"/><circle cx="1065.5" cy="519.8" r="0.8" fill="#d4c7a0"/><circle cx="1075.5" cy="496.4" r="0.7" fill="#6e6040"/><circle cx="1064.7" cy="514.3" r="0.8" fill="#efe6c8"/><circle cx="1062.0" cy="493.8" r="1.2" fill="#6e6040"/><circle cx="1077.9" cy="511.0" r="1.2" fill="#efe6c8"/><circle cx="1062.0" cy="519.3" r="0.9" fill="#efe6c8"/><circle cx="1053.1" cy="506.1" r="1.2" fill="#d4c7a0"/><circle cx="1068.3" cy="514.7" r="0.6" fill="#d4c7a0"/><circle cx="1063.8" cy="513.1" r="0.9" fill="#6e6040"/><circle cx="1070.7" cy="506.7" r="0.9" fill="#8f7d55"/><circle cx="1077.4" cy="491.3" r="0.7" fill="#8f7d55"/><circle cx="1073.7" cy="506.0" r="0.9" fill="#8f7d55"/><circle cx="1062.8" cy="509.4" r="0.9" fill="#efe6c8"/><circle cx="1054.6" cy="498.5" r="0.9" fill="#c0b088"/><circle cx="1064.9" cy="497.5" r="0.9" fill="#6e6040"/><circle cx="1078.7" cy="518.5" r="0.7" fill="#c0b088"/><circle cx="1052.6" cy="493.5" r="0.9" fill="#8f7d55"/><circle cx="1070.3" cy="503.4" r="0.7" fill="#6e6040"/><circle cx="1074.1" cy="518.7" r="0.6" fill="#6e6040"/><circle cx="1052.8" cy="518.2" r="1.3" fill="#d4c7a0"/><circle cx="1072.9" cy="492.6" r="1.2" fill="#d4c7a0"/><circle cx="1081.0" cy="516.6" r="0.3" fill="#c0b088"/><circle cx="1059.9" cy="492.5" r="0.8" fill="#6e6040"/><circle cx="1066.4" cy="503.8" r="0.5" fill="#6e6040"/><circle cx="1065.2" cy="499.1" r="1.3" fill="#8f7d55"/><circle cx="1080.8" cy="515.1" r="0.5" fill="#8f7d55"/><circle cx="1050.8" cy="498.3" r="1.2" fill="#d4c7a0"/><circle cx="1057.0" cy="493.7" r="0.8" fill="#6e6040"/><circle cx="1061.5" cy="506.9" r="0.9" fill="#c0b088"/><circle cx="1071.3" cy="492.4" r="0.5" fill="#d4c7a0"/><circle cx="1062.2" cy="491.9" r="1.3" fill="#8f7d55"/><circle cx="1074.7" cy="492.2" r="1.2" fill="#8f7d55"/><circle cx="1056.8" cy="493.5" r="0.5" fill="#efe6c8"/><circle cx="1061.9" cy="519.3" r="1.0" fill="#8f7d55"/><circle cx="1065.5" cy="497.2" r="0.6" fill="#d4c7a0"/><circle cx="1056.7" cy="495.4" r="1.2" fill="#6e6040"/><circle cx="1065.7" cy="496.2" r="0.9" fill="#d4c7a0"/><circle cx="1057.0" cy="515.6" r="1.3" fill="#8f7d55"/><circle cx="1048.5" cy="513.3" r="0.5" fill="#d4c7a0"/><circle cx="1065.1" cy="497.5" r="0.9" fill="#c0b088"/><circle cx="1069.9" cy="507.2" r="1.2" fill="#efe6c8"/><circle cx="1058.2" cy="496.5" r="0.7" fill="#d4c7a0"/><circle cx="1075.7" cy="512.5" r="1.0" fill="#c0b088"/><circle cx="1080.9" cy="521.4" r="0.4" fill="#8f7d55"/><circle cx="1050.4" cy="513.6" r="0.7" fill="#d4c7a0"/><circle cx="1049.8" cy="511.1" r="0.8" fill="#efe6c8"/><circle cx="1070.3" cy="498.7" r="0.7" fill="#6e6040"/><circle cx="1049.5" cy="495.5" r="0.7" fill="#8f7d55"/><circle cx="1056.8" cy="520.8" r="1.2" fill="#efe6c8"/><circle cx="1058.8" cy="490.6" r="1.1" fill="#d4c7a0"/><circle cx="1063.8" cy="505.8" r="0.7" fill="#efe6c8"/><circle cx="1073.8" cy="492.5" r="1.2" fill="#d4c7a0"/><circle cx="1061.3" cy="490.9" r="0.5" fill="#6e6040"/><circle cx="1069.0" cy="492.2" r="1.3" fill="#d4c7a0"/><circle cx="1069.9" cy="512.8" r="1.2" fill="#c0b088"/><circle cx="1073.5" cy="512.9" r="0.9" fill="#6e6040"/><circle cx="1072.1" cy="510.4" r="0.5" fill="#efe6c8"/><circle cx="1068.9" cy="513.4" r="1.1" fill="#d4c7a0"/><circle cx="1078.3" cy="514.0" r="1.0" fill="#8f7d55"/><circle cx="1075.5" cy="508.5" r="1.2" fill="#d4c7a0"/><circle cx="1050.8" cy="490.9" r="1.0" fill="#8f7d55"/><circle cx="1060.5" cy="504.2" r="0.5" fill="#8f7d55"/><circle cx="1068.9" cy="511.6" r="0.9" fill="#8f7d55"/><circle cx="1063.2" cy="491.8" r="1.2" fill="#efe6c8"/><circle cx="1051.1" cy="506.6" r="1.1" fill="#c0b088"/><circle cx="1056.4" cy="491.9" r="0.7" fill="#d4c7a0"/><circle cx="1055.7" cy="510.6" r="0.9" fill="#c0b088"/><circle cx="1050.6" cy="519.1" r="0.7" fill="#8f7d55"/><circle cx="1068.5" cy="510.4" r="0.6" fill="#d4c7a0"/><circle cx="1059.0" cy="510.7" r="1.1" fill="#efe6c8"/><circle cx="1066.9" cy="489.9" r="0.4" fill="#6e6040"/><circle cx="1080.4" cy="492.7" r="0.7" fill="#c0b088"/><circle cx="1057.7" cy="506.3" r="0.9" fill="#c0b088"/><circle cx="1073.5" cy="521.8" r="0.2" fill="#6e6040"/><circle cx="1080.6" cy="519.9" r="0.5" fill="#c0b088"/><circle cx="1050.5" cy="506.0" r="1.3" fill="#6e6040"/><circle cx="1060.9" cy="519.3" r="1.2" fill="#8f7d55"/><circle cx="1067.4" cy="494.1" r="0.9" fill="#6e6040"/><circle cx="1052.4" cy="516.2" r="0.9" fill="#8f7d55"/><circle cx="1071.4" cy="497.0" r="1.2" fill="#c0b088"/><circle cx="1061.1" cy="494.7" r="1.3" fill="#c0b088"/><circle cx="1061.5" cy="513.1" r="0.8" fill="#c0b088"/><circle cx="1058.5" cy="516.8" r="0.5" fill="#6e6040"/><circle cx="1075.9" cy="493.4" r="1.2" fill="#8f7d55"/><circle cx="1078.0" cy="498.9" r="0.8" fill="#c0b088"/><circle cx="1061.0" cy="517.8" r="0.6" fill="#c0b088"/><circle cx="1073.2" cy="517.3" r="0.7" fill="#8f7d55"/><circle cx="1075.8" cy="498.8" r="1.2" fill="#d4c7a0"/><circle cx="1080.3" cy="503.7" r="0.8" fill="#6e6040"/><circle cx="1074.1" cy="503.4" r="0.5" fill="#c0b088"/><circle cx="1078.4" cy="520.1" r="0.9" fill="#8f7d55"/><circle cx="1049.6" cy="513.3" r="0.9" fill="#d4c7a0"/><circle cx="1069.5" cy="498.8" r="0.5" fill="#efe6c8"/><circle cx="1052.2" cy="504.8" r="0.8" fill="#6e6040"/><circle cx="1056.5" cy="513.5" r="1.0" fill="#c0b088"/><circle cx="1069.8" cy="499.3" r="0.9" fill="#c0b088"/><circle cx="1052.0" cy="510.4" r="0.6" fill="#efe6c8"/><circle cx="1078.2" cy="505.7" r="0.7" fill="#6e6040"/><circle cx="1054.4" cy="492.4" r="0.8" fill="#8f7d55"/><circle cx="1058.6" cy="501.5" r="1.1" fill="#d4c7a0"/><circle cx="1077.5" cy="513.9" r="0.8" fill="#c0b088"/><circle cx="1072.8" cy="496.3" r="0.7" fill="#8f7d55"/><circle cx="1064.6" cy="508.2" r="0.8" fill="#efe6c8"/><circle cx="1065.6" cy="515.2" r="1.2" fill="#8f7d55"/><circle cx="1057.0" cy="497.6" r="0.8" fill="#c0b088"/><circle cx="1062.4" cy="499.6" r="1.2" fill="#8f7d55"/><rect x="1083.7" y="489.5" width="33.3" height="32.5" fill="#8e6a66"/><circle cx="1091.2" cy="520.8" r="0.6" fill="#7a5050"/><circle cx="1086.5" cy="497.5" r="1.2" fill="#a58580"/><circle cx="1097.0" cy="490.5" r="0.8" fill="#b79a98"/><circle cx="1100.2" cy="495.7" r="1.1" fill="#7a5050"/><circle cx="1099.9" cy="514.2" r="1.0" fill="#b79a98"/><circle cx="1099.5" cy="519.1" r="1.0" fill="#6a4a48"/><circle cx="1086.9" cy="516.0" r="0.8" fill="#b79a98"/><circle cx="1087.3" cy="491.4" r="0.7" fill="#7a5050"/><circle cx="1100.3" cy="510.6" r="1.1" fill="#a58580"/><circle cx="1103.9" cy="507.0" r="0.5" fill="#a58580"/><circle cx="1088.6" cy="517.5" r="0.8" fill="#b79a98"/><circle cx="1093.2" cy="501.1" r="1.1" fill="#a58580"/><circle cx="1089.0" cy="509.0" r="0.9" fill="#6a4a48"/><circle cx="1107.1" cy="520.4" r="1.1" fill="#a58580"/><circle cx="1094.0" cy="501.1" r="0.7" fill="#7a5050"/><circle cx="1110.6" cy="517.3" r="1.1" fill="#a58580"/><circle cx="1095.2" cy="519.0" r="0.7" fill="#a58580"/><circle cx="1092.6" cy="503.3" r="0.8" fill="#b79a98"/><circle cx="1089.5" cy="502.4" r="0.6" fill="#7a5050"/><circle cx="1090.4" cy="514.4" r="0.7" fill="#7a5050"/><circle cx="1110.2" cy="501.9" r="1.1" fill="#b79a98"/><circle cx="1113.8" cy="494.0" r="0.9" fill="#b79a98"/><circle cx="1097.6" cy="508.6" r="0.7" fill="#7a5050"/><circle cx="1084.8" cy="511.1" r="1.0" fill="#6a4a48"/><circle cx="1088.8" cy="519.9" r="0.8" fill="#a58580"/><circle cx="1116.3" cy="491.5" r="0.5" fill="#a58580"/><circle cx="1095.0" cy="510.9" r="0.6" fill="#6a4a48"/><circle cx="1095.4" cy="520.9" r="0.5" fill="#b79a98"/><circle cx="1090.7" cy="517.9" r="0.5" fill="#a58580"/><circle cx="1089.6" cy="521.0" r="0.8" fill="#7a5050"/><circle cx="1090.4" cy="496.8" r="1.1" fill="#a58580"/><circle cx="1096.4" cy="493.0" r="1.0" fill="#a58580"/><circle cx="1107.7" cy="506.2" r="0.6" fill="#b79a98"/><circle cx="1102.5" cy="516.0" r="0.8" fill="#7a5050"/><circle cx="1090.3" cy="504.0" r="0.6" fill="#7a5050"/><circle cx="1107.3" cy="509.4" r="0.5" fill="#6a4a48"/><circle cx="1111.3" cy="506.7" r="1.2" fill="#a58580"/><circle cx="1100.4" cy="500.0" r="0.8" fill="#a58580"/><circle cx="1083.9" cy="509.4" r="0.2" fill="#6a4a48"/><circle cx="1114.6" cy="521.4" r="0.6" fill="#6a4a48"/><circle cx="1086.4" cy="503.1" r="1.0" fill="#6a4a48"/><circle cx="1100.9" cy="509.8" r="1.2" fill="#6a4a48"/><circle cx="1105.4" cy="493.1" r="0.8" fill="#b79a98"/><circle cx="1115.6" cy="517.0" r="0.7" fill="#6a4a48"/><circle cx="1096.9" cy="502.0" r="1.1" fill="#6a4a48"/><circle cx="1111.0" cy="509.2" r="0.8" fill="#b79a98"/><circle cx="1090.2" cy="516.2" r="0.9" fill="#7a5050"/><circle cx="1092.7" cy="491.7" r="1.0" fill="#6a4a48"/><circle cx="1116.6" cy="514.9" r="0.4" fill="#6a4a48"/><circle cx="1116.6" cy="498.4" r="0.4" fill="#6a4a48"/><circle cx="1092.9" cy="518.4" r="0.8" fill="#6a4a48"/><circle cx="1091.9" cy="497.6" r="0.9" fill="#b79a98"/><circle cx="1092.0" cy="515.9" r="0.9" fill="#a58580"/><circle cx="1096.0" cy="514.9" r="1.1" fill="#b79a98"/><circle cx="1086.5" cy="495.0" r="0.9" fill="#b79a98"/><circle cx="1114.4" cy="515.1" r="0.6" fill="#a58580"/><circle cx="1106.5" cy="492.3" r="0.8" fill="#6a4a48"/><circle cx="1114.5" cy="492.5" r="0.9" fill="#7a5050"/><circle cx="1094.4" cy="490.8" r="1.1" fill="#a58580"/><circle cx="1105.5" cy="501.4" r="1.1" fill="#a58580"/><circle cx="1107.8" cy="509.0" r="0.7" fill="#6a4a48"/><circle cx="1108.5" cy="520.9" r="0.5" fill="#7a5050"/><circle cx="1114.2" cy="509.3" r="0.8" fill="#a58580"/><circle cx="1092.2" cy="502.2" r="0.8" fill="#7a5050"/><circle cx="1087.0" cy="496.7" r="0.7" fill="#a58580"/><circle cx="1094.9" cy="496.0" r="1.2" fill="#7a5050"/><circle cx="1102.2" cy="513.4" r="1.1" fill="#6a4a48"/><circle cx="1093.5" cy="497.4" r="0.9" fill="#7a5050"/><circle cx="1102.4" cy="519.9" r="1.2" fill="#a58580"/><circle cx="1091.2" cy="496.6" r="0.6" fill="#a58580"/><circle cx="1109.1" cy="491.5" r="1.1" fill="#6a4a48"/><circle cx="1097.5" cy="519.9" r="0.9" fill="#6a4a48"/><circle cx="1106.7" cy="521.5" r="0.5" fill="#6a4a48"/><circle cx="1108.2" cy="514.8" r="0.6" fill="#6a4a48"/><circle cx="1106.3" cy="505.0" r="0.6" fill="#6a4a48"/><circle cx="1100.3" cy="521.1" r="0.9" fill="#6a4a48"/><circle cx="1110.6" cy="508.0" r="0.8" fill="#a58580"/><circle cx="1111.2" cy="510.5" r="0.6" fill="#b79a98"/><circle cx="1084.8" cy="517.7" r="0.9" fill="#6a4a48"/><circle cx="1095.3" cy="512.2" r="0.9" fill="#a58580"/><circle cx="1111.3" cy="490.0" r="0.5" fill="#b79a98"/><circle cx="1103.0" cy="493.6" r="1.2" fill="#b79a98"/><circle cx="1102.5" cy="508.3" r="1.1" fill="#6a4a48"/><circle cx="1105.5" cy="521.5" r="0.5" fill="#6a4a48"/><circle cx="1105.4" cy="505.0" r="0.6" fill="#a58580"/><circle cx="1099.6" cy="508.2" r="1.2" fill="#b79a98"/><circle cx="1096.2" cy="509.9" r="0.5" fill="#a58580"/><circle cx="1114.6" cy="511.0" r="1.0" fill="#7a5050"/><circle cx="1084.8" cy="497.1" r="0.8" fill="#6a4a48"/><circle cx="1099.6" cy="495.1" r="0.6" fill="#6a4a48"/><circle cx="1109.9" cy="515.0" r="1.0" fill="#6a4a48"/><circle cx="1098.8" cy="499.1" r="0.8" fill="#b79a98"/><circle cx="1098.6" cy="509.9" r="0.8" fill="#b79a98"/><circle cx="1095.1" cy="508.3" r="1.0" fill="#6a4a48"/><circle cx="1107.6" cy="511.2" r="0.8" fill="#b79a98"/><circle cx="1090.5" cy="506.5" r="0.9" fill="#a58580"/><circle cx="1100.5" cy="490.6" r="0.9" fill="#6a4a48"/><circle cx="1090.9" cy="510.2" r="0.7" fill="#a58580"/><circle cx="1115.5" cy="490.0" r="0.5" fill="#a58580"/><circle cx="1094.2" cy="490.4" r="0.5" fill="#7a5050"/><circle cx="1108.3" cy="508.2" r="0.9" fill="#7a5050"/><circle cx="1085.2" cy="496.4" r="0.7" fill="#7a5050"/><circle cx="1097.5" cy="519.1" r="0.5" fill="#7a5050"/><circle cx="1100.9" cy="496.1" r="1.1" fill="#b79a98"/><circle cx="1113.9" cy="503.3" r="0.6" fill="#a58580"/><circle cx="1105.6" cy="514.8" r="1.1" fill="#6a4a48"/><circle cx="1114.9" cy="503.7" r="0.5" fill="#b79a98"/><circle cx="1106.8" cy="496.0" r="0.5" fill="#7a5050"/><circle cx="1109.3" cy="499.7" r="0.6" fill="#7a5050"/><circle cx="1096.9" cy="512.0" r="0.7" fill="#6a4a48"/><circle cx="1103.8" cy="502.7" r="0.6" fill="#a58580"/><circle cx="1090.0" cy="515.7" r="1.0" fill="#b79a98"/><circle cx="1088.9" cy="516.3" r="0.7" fill="#7a5050"/><circle cx="1098.2" cy="518.5" r="1.1" fill="#b79a98"/><circle cx="1114.0" cy="517.8" r="1.2" fill="#a58580"/><circle cx="1104.2" cy="504.7" r="0.7" fill="#6a4a48"/><circle cx="1104.0" cy="494.8" r="0.7" fill="#a58580"/><circle cx="1097.9" cy="511.5" r="1.1" fill="#6a4a48"/><circle cx="1106.6" cy="507.8" r="0.7" fill="#b79a98"/><circle cx="1094.5" cy="508.1" r="1.0" fill="#b79a98"/><circle cx="1111.7" cy="519.5" r="0.8" fill="#6a4a48"/><circle cx="1087.6" cy="502.1" r="1.1" fill="#b79a98"/><circle cx="1097.4" cy="489.8" r="0.3" fill="#a58580"/><circle cx="1084.2" cy="490.0" r="0.5" fill="#6a4a48"/><circle cx="1096.1" cy="505.2" r="0.9" fill="#a58580"/><circle cx="1101.9" cy="495.9" r="0.9" fill="#7a5050"/><circle cx="1085.7" cy="500.7" r="1.0" fill="#b79a98"/><circle cx="1103.9" cy="520.8" r="1.0" fill="#6a4a48"/><circle cx="1104.6" cy="521.0" r="1.0" fill="#b79a98"/><circle cx="1111.6" cy="508.5" r="0.7" fill="#7a5050"/><circle cx="1100.8" cy="506.0" r="0.8" fill="#b79a98"/><circle cx="1101.1" cy="518.0" r="1.0" fill="#7a5050"/><circle cx="1102.8" cy="509.5" r="1.1" fill="#a58580"/><circle cx="1114.2" cy="513.4" r="0.9" fill="#b79a98"/><circle cx="1104.5" cy="504.0" r="0.6" fill="#a58580"/><circle cx="1108.6" cy="518.3" r="1.2" fill="#6a4a48"/><circle cx="1101.3" cy="511.6" r="0.9" fill="#6a4a48"/><circle cx="1086.0" cy="497.5" r="1.1" fill="#b79a98"/><circle cx="1098.3" cy="512.3" r="0.6" fill="#7a5050"/><circle cx="1105.4" cy="510.0" r="0.7" fill="#a58580"/><circle cx="1096.8" cy="507.3" r="0.6" fill="#b79a98"/><circle cx="1094.4" cy="497.2" r="0.6" fill="#a58580"/><circle cx="1109.3" cy="490.5" r="0.7" fill="#7a5050"/><circle cx="1101.3" cy="505.5" r="0.5" fill="#7a5050"/><circle cx="1098.5" cy="501.5" r="0.7" fill="#7a5050"/><circle cx="1087.2" cy="517.8" r="0.8" fill="#b79a98"/><circle cx="1087.0" cy="517.0" r="0.5" fill="#a58580"/><circle cx="1096.7" cy="518.7" r="1.0" fill="#b79a98"/><circle cx="1103.5" cy="515.0" r="0.8" fill="#b79a98"/><circle cx="1111.4" cy="514.8" r="1.0" fill="#a58580"/><circle cx="1098.5" cy="498.5" r="0.9" fill="#a58580"/><circle cx="1090.8" cy="506.5" r="1.1" fill="#6a4a48"/><circle cx="1116.5" cy="501.4" r="0.5" fill="#6a4a48"/><circle cx="1102.4" cy="517.4" r="1.2" fill="#6a4a48"/><circle cx="1088.2" cy="501.7" r="0.5" fill="#7a5050"/><circle cx="1113.7" cy="496.7" r="1.1" fill="#a58580"/><circle cx="1105.1" cy="505.6" r="1.1" fill="#b79a98"/><circle cx="1086.6" cy="512.6" r="1.2" fill="#b79a98"/><circle cx="1098.4" cy="505.6" r="0.7" fill="#a58580"/><circle cx="1094.0" cy="521.3" r="0.7" fill="#7a5050"/><circle cx="1084.4" cy="519.1" r="0.7" fill="#b79a98"/><circle cx="1084.1" cy="497.9" r="0.4" fill="#6a4a48"/><circle cx="1085.1" cy="509.9" r="0.9" fill="#b79a98"/><circle cx="1114.9" cy="491.2" r="0.5" fill="#7a5050"/><circle cx="1094.3" cy="497.6" r="1.2" fill="#6a4a48"/><circle cx="1110.4" cy="511.0" r="0.8" fill="#7a5050"/><circle cx="1091.7" cy="517.8" r="0.9" fill="#a58580"/><circle cx="1100.6" cy="498.6" r="0.9" fill="#b79a98"/><rect x="1119.0" y="489.5" width="33.5" height="32.5" fill="#5e544a"/><circle cx="1134.5" cy="501.6" r="0.9" fill="#bcae9e"/><circle cx="1119.2" cy="505.8" r="0.2" fill="#c2b6a6"/><circle cx="1130.2" cy="519.9" r="2.1" fill="#bcae9e"/><circle cx="1131.7" cy="512.4" r="1.8" fill="#bcae9e"/><circle cx="1133.2" cy="495.0" r="0.6" fill="#a89c8c"/><circle cx="1136.0" cy="519.5" r="2.2" fill="#bcae9e"/><circle cx="1131.9" cy="513.7" r="0.8" fill="#d0c6b8"/><circle cx="1125.9" cy="496.8" r="2.8" fill="#c2b6a6"/><circle cx="1144.9" cy="519.1" r="1.6" fill="#d0c6b8"/><circle cx="1146.1" cy="496.0" r="3.1" fill="#b0a494"/><circle cx="1120.8" cy="501.8" r="1.8" fill="#c2b6a6"/><circle cx="1126.9" cy="513.4" r="3.0" fill="#9a8474"/><circle cx="1147.5" cy="500.2" r="3.1" fill="#a89c8c"/><circle cx="1137.1" cy="490.1" r="0.6" fill="#b0a494"/><circle cx="1137.0" cy="495.9" r="0.7" fill="#a89c8c"/><circle cx="1140.4" cy="492.5" r="2.2" fill="#a89c8c"/><circle cx="1150.5" cy="512.9" r="0.6" fill="#d0c6b8"/><circle cx="1137.6" cy="509.2" r="0.9" fill="#d0c6b8"/><circle cx="1143.7" cy="508.2" r="0.6" fill="#bcae9e"/><circle cx="1132.5" cy="518.9" r="1.0" fill="#9a8474"/><circle cx="1120.4" cy="501.4" r="1.4" fill="#9a8474"/><circle cx="1137.9" cy="511.9" r="3.0" fill="#c2b6a6"/><circle cx="1147.9" cy="508.5" r="1.8" fill="#b0a494"/><circle cx="1125.7" cy="520.3" r="1.7" fill="#b0a494"/><circle cx="1145.8" cy="500.2" r="1.8" fill="#a89c8c"/><circle cx="1126.4" cy="498.3" r="2.9" fill="#d0c6b8"/><circle cx="1140.1" cy="492.8" r="2.8" fill="#c2b6a6"/><circle cx="1131.8" cy="507.7" r="1.7" fill="#d0c6b8"/><circle cx="1142.8" cy="497.6" r="2.6" fill="#b0a494"/><circle cx="1140.7" cy="492.6" r="2.7" fill="#9a8474"/><circle cx="1131.5" cy="517.4" r="1.6" fill="#bcae9e"/><circle cx="1128.7" cy="512.0" r="3.0" fill="#c2b6a6"/><circle cx="1120.7" cy="521.2" r="0.8" fill="#a89c8c"/><circle cx="1152.0" cy="509.2" r="0.5" fill="#c2b6a6"/><circle cx="1134.1" cy="515.1" r="1.4" fill="#c2b6a6"/><circle cx="1151.4" cy="501.0" r="0.9" fill="#9a8474"/><circle cx="1128.3" cy="520.8" r="1.2" fill="#d0c6b8"/><circle cx="1142.3" cy="491.6" r="1.8" fill="#bcae9e"/><circle cx="1137.8" cy="515.3" r="2.2" fill="#a89c8c"/><circle cx="1141.2" cy="498.4" r="2.2" fill="#9a8474"/><circle cx="1135.6" cy="492.7" r="0.6" fill="#9a8474"/><circle cx="1123.3" cy="515.4" r="2.9" fill="#a89c8c"/><circle cx="1145.1" cy="496.7" r="0.5" fill="#a89c8c"/><circle cx="1134.9" cy="508.7" r="2.1" fill="#c2b6a6"/><circle cx="1124.8" cy="505.2" r="3.2" fill="#9a8474"/><circle cx="1121.2" cy="510.7" r="2.2" fill="#9a8474"/><circle cx="1148.8" cy="507.2" r="2.0" fill="#9a8474"/><circle cx="1140.5" cy="515.4" r="3.0" fill="#9a8474"/><circle cx="1137.2" cy="499.3" r="2.6" fill="#bcae9e"/><circle cx="1123.6" cy="492.7" r="1.9" fill="#c2b6a6"/><circle cx="1135.4" cy="510.2" r="0.7" fill="#9a8474"/><circle cx="1120.0" cy="497.4" r="1.0" fill="#d0c6b8"/><circle cx="1146.6" cy="513.2" r="2.3" fill="#a89c8c"/><circle cx="1120.2" cy="508.9" r="1.2" fill="#bcae9e"/><circle cx="1132.7" cy="508.6" r="0.7" fill="#c2b6a6"/><circle cx="1139.4" cy="495.4" r="0.7" fill="#d0c6b8"/><circle cx="1139.9" cy="507.3" r="1.9" fill="#bcae9e"/><circle cx="1145.0" cy="500.3" r="2.8" fill="#c2b6a6"/><circle cx="1134.5" cy="504.1" r="0.9" fill="#b0a494"/><circle cx="1152.0" cy="516.6" r="0.5" fill="#d0c6b8"/><circle cx="1141.5" cy="504.2" r="0.9" fill="#a89c8c"/><circle cx="1122.6" cy="491.2" r="0.7" fill="#bcae9e"/><circle cx="1151.7" cy="501.6" r="0.8" fill="#b0a494"/><circle cx="1140.0" cy="496.0" r="3.0" fill="#c2b6a6"/><circle cx="1126.9" cy="497.8" r="2.0" fill="#a89c8c"/><circle cx="1119.5" cy="497.7" r="0.5" fill="#c2b6a6"/><circle cx="1136.4" cy="503.1" r="3.1" fill="#b0a494"/><circle cx="1147.5" cy="509.2" r="1.1" fill="#c2b6a6"/><circle cx="1141.8" cy="493.8" r="0.6" fill="#a89c8c"/><circle cx="1151.7" cy="515.1" r="0.8" fill="#c2b6a6"/><circle cx="1148.4" cy="519.4" r="2.6" fill="#c2b6a6"/><circle cx="1120.0" cy="503.8" r="1.0" fill="#d0c6b8"/><circle cx="1135.5" cy="500.8" r="2.9" fill="#b0a494"/><circle cx="1133.4" cy="492.1" r="1.4" fill="#b0a494"/><rect x="1154.8" y="489.5" width="33.2" height="32.5" fill="#86888b"/><circle cx="1173.8" cy="503.4" r="0.8" fill="#a3a5a8"/><circle cx="1170.2" cy="505.5" r="0.7" fill="#a3a5a8"/><circle cx="1155.9" cy="505.4" r="0.5" fill="#75777b"/><circle cx="1156.3" cy="517.5" r="0.9" fill="#b5b3b0"/><circle cx="1168.8" cy="516.4" r="0.7" fill="#a3a5a8"/><circle cx="1177.6" cy="511.0" r="0.6" fill="#a3a5a8"/><circle cx="1187.0" cy="509.4" r="0.5" fill="#6a6c70"/><circle cx="1162.6" cy="495.8" r="1.0" fill="#75777b"/><circle cx="1180.4" cy="497.3" r="0.9" fill="#b5b3b0"/><circle cx="1169.3" cy="491.6" r="0.9" fill="#a3a5a8"/><circle cx="1182.8" cy="521.0" r="0.6" fill="#6a6c70"/><circle cx="1171.3" cy="516.1" r="0.9" fill="#6a6c70"/><circle cx="1159.8" cy="507.9" r="0.7" fill="#a3a5a8"/><circle cx="1158.5" cy="514.7" r="0.6" fill="#a3a5a8"/><circle cx="1187.4" cy="495.7" r="0.6" fill="#b5b3b0"/><circle cx="1169.6" cy="511.6" r="0.6" fill="#a3a5a8"/><circle cx="1183.5" cy="498.2" r="0.7" fill="#a3a5a8"/><circle cx="1180.6" cy="505.1" r="0.7" fill="#b5b3b0"/><circle cx="1162.2" cy="507.2" r="0.5" fill="#75777b"/><circle cx="1162.9" cy="498.0" r="0.7" fill="#a3a5a8"/><circle cx="1167.8" cy="517.8" r="0.9" fill="#a3a5a8"/><circle cx="1179.2" cy="521.7" r="0.3" fill="#b5b3b0"/><circle cx="1174.8" cy="491.5" r="0.8" fill="#b5b3b0"/><circle cx="1184.6" cy="493.9" r="0.8" fill="#75777b"/><circle cx="1172.7" cy="505.4" r="0.6" fill="#b5b3b0"/><circle cx="1158.1" cy="521.2" r="0.8" fill="#6a6c70"/><circle cx="1169.4" cy="491.6" r="0.7" fill="#a3a5a8"/><circle cx="1158.4" cy="504.3" r="1.1" fill="#b5b3b0"/><circle cx="1159.4" cy="517.5" r="1.0" fill="#b5b3b0"/><circle cx="1166.2" cy="497.9" r="1.0" fill="#b5b3b0"/><circle cx="1168.9" cy="510.6" r="1.0" fill="#a3a5a8"/><circle cx="1179.4" cy="500.0" r="0.5" fill="#a3a5a8"/><circle cx="1176.1" cy="508.6" r="1.0" fill="#b5b3b0"/><circle cx="1155.6" cy="493.3" r="0.7" fill="#a3a5a8"/><circle cx="1178.6" cy="518.4" r="0.5" fill="#6a6c70"/><circle cx="1187.4" cy="498.8" r="0.6" fill="#a3a5a8"/><circle cx="1166.8" cy="502.5" r="1.0" fill="#75777b"/><circle cx="1160.9" cy="508.7" r="0.8" fill="#6a6c70"/><circle cx="1177.5" cy="499.5" r="1.1" fill="#b5b3b0"/><circle cx="1169.7" cy="513.7" r="0.6" fill="#75777b"/><circle cx="1158.6" cy="514.9" r="0.5" fill="#b5b3b0"/><circle cx="1175.0" cy="517.9" r="1.0" fill="#a3a5a8"/><circle cx="1157.1" cy="503.3" r="0.6" fill="#6a6c70"/><circle cx="1166.4" cy="501.2" r="0.8" fill="#a3a5a8"/><circle cx="1175.7" cy="498.7" r="0.9" fill="#b5b3b0"/><circle cx="1171.6" cy="498.1" r="0.8" fill="#75777b"/><circle cx="1166.4" cy="498.5" r="1.0" fill="#b5b3b0"/><circle cx="1174.3" cy="492.2" r="0.8" fill="#75777b"/><circle cx="1181.4" cy="502.7" r="1.0" fill="#b5b3b0"/><circle cx="1178.7" cy="491.6" r="1.0" fill="#75777b"/><circle cx="1155.3" cy="500.1" r="0.5" fill="#b5b3b0"/><circle cx="1175.1" cy="498.7" r="0.6" fill="#a3a5a8"/><circle cx="1165.0" cy="507.6" r="1.0" fill="#6a6c70"/><circle cx="1162.1" cy="513.7" r="1.1" fill="#a3a5a8"/><circle cx="1173.7" cy="521.5" r="0.5" fill="#6a6c70"/><circle cx="1167.8" cy="500.5" r="1.0" fill="#a3a5a8"/><circle cx="1172.2" cy="515.8" r="1.0" fill="#75777b"/><circle cx="1183.7" cy="510.9" r="0.8" fill="#6a6c70"/><circle cx="1173.6" cy="517.4" r="0.7" fill="#a3a5a8"/><circle cx="1180.5" cy="493.3" r="1.0" fill="#75777b"/><circle cx="1171.8" cy="500.9" r="0.7" fill="#75777b"/><circle cx="1156.8" cy="519.5" r="0.8" fill="#b5b3b0"/><circle cx="1175.0" cy="513.0" r="1.1" fill="#a3a5a8"/><circle cx="1166.5" cy="503.3" r="1.0" fill="#b5b3b0"/><circle cx="1167.7" cy="492.7" r="0.9" fill="#6a6c70"/><circle cx="1185.7" cy="495.6" r="0.9" fill="#b5b3b0"/><circle cx="1187.2" cy="515.3" r="0.7" fill="#b5b3b0"/><circle cx="1186.7" cy="509.2" r="0.6" fill="#a3a5a8"/><circle cx="1156.4" cy="495.2" r="0.9" fill="#75777b"/><circle cx="1182.6" cy="499.3" r="1.0" fill="#b5b3b0"/><circle cx="1174.7" cy="503.4" r="0.7" fill="#a3a5a8"/><circle cx="1171.1" cy="495.0" r="1.0" fill="#b5b3b0"/><circle cx="1186.0" cy="500.2" r="0.5" fill="#a3a5a8"/><circle cx="1174.1" cy="503.2" r="0.8" fill="#b5b3b0"/><circle cx="1187.0" cy="502.4" r="1.0" fill="#a3a5a8"/><circle cx="1158.3" cy="513.0" r="0.7" fill="#75777b"/><circle cx="1172.5" cy="517.1" r="0.6" fill="#b5b3b0"/><circle cx="1175.0" cy="506.8" r="0.5" fill="#a3a5a8"/><circle cx="1186.8" cy="502.1" r="0.6" fill="#b5b3b0"/><circle cx="1158.1" cy="518.9" r="0.8" fill="#75777b"/><circle cx="1166.6" cy="521.0" r="0.6" fill="#6a6c70"/><circle cx="1157.3" cy="515.9" r="0.5" fill="#b5b3b0"/><circle cx="1166.0" cy="519.4" r="0.9" fill="#75777b"/><circle cx="1165.6" cy="505.0" r="1.0" fill="#6a6c70"/><circle cx="1161.6" cy="498.9" r="1.0" fill="#a3a5a8"/><circle cx="1184.9" cy="502.1" r="0.8" fill="#b5b3b0"/><circle cx="1183.8" cy="514.2" r="0.6" fill="#6a6c70"/><circle cx="1155.7" cy="491.3" r="0.9" fill="#a3a5a8"/><circle cx="1158.9" cy="502.0" r="0.5" fill="#b5b3b0"/><circle cx="1179.3" cy="495.4" r="0.8" fill="#6a6c70"/><circle cx="1173.1" cy="491.2" r="0.7" fill="#b5b3b0"/><circle cx="1169.9" cy="495.5" r="0.7" fill="#b5b3b0"/><circle cx="1171.0" cy="512.6" r="0.7" fill="#6a6c70"/><circle cx="1159.4" cy="497.7" r="0.6" fill="#6a6c70"/><circle cx="1159.9" cy="492.1" r="0.8" fill="#a3a5a8"/><circle cx="1180.3" cy="507.0" r="0.7" fill="#75777b"/><circle cx="1181.7" cy="508.2" r="0.9" fill="#b5b3b0"/><circle cx="1183.9" cy="494.2" r="0.5" fill="#6a6c70"/><circle cx="1175.0" cy="510.5" r="0.8" fill="#a3a5a8"/><circle cx="1159.7" cy="517.5" r="1.0" fill="#a3a5a8"/><circle cx="1183.3" cy="501.7" r="0.9" fill="#6a6c70"/><circle cx="1170.7" cy="504.6" r="0.8" fill="#a3a5a8"/><circle cx="1155.7" cy="509.3" r="0.8" fill="#a3a5a8"/><circle cx="1166.0" cy="511.2" r="0.6" fill="#b5b3b0"/><circle cx="1174.4" cy="494.9" r="0.9" fill="#a3a5a8"/><circle cx="1171.2" cy="501.0" r="1.1" fill="#b5b3b0"/><circle cx="1159.8" cy="510.4" r="0.7" fill="#75777b"/><circle cx="1159.1" cy="504.4" r="0.9" fill="#6a6c70"/><circle cx="1167.4" cy="514.7" r="1.0" fill="#6a6c70"/><circle cx="1159.0" cy="521.7" r="0.3" fill="#b5b3b0"/><circle cx="1162.2" cy="505.0" r="0.8" fill="#6a6c70"/><circle cx="1158.2" cy="520.7" r="1.0" fill="#b5b3b0"/><circle cx="1165.1" cy="513.9" r="1.0" fill="#b5b3b0"/><circle cx="1172.8" cy="507.1" r="0.9" fill="#a3a5a8"/><circle cx="1178.7" cy="516.7" r="0.6" fill="#b5b3b0"/><circle cx="1177.6" cy="516.1" r="0.7" fill="#a3a5a8"/><circle cx="1187.6" cy="506.9" r="0.4" fill="#a3a5a8"/><circle cx="1157.2" cy="502.4" r="0.6" fill="#a3a5a8"/><circle cx="1185.9" cy="504.3" r="0.9" fill="#75777b"/><circle cx="1167.6" cy="496.3" r="0.7" fill="#75777b"/><circle cx="1159.9" cy="505.2" r="0.7" fill="#6a6c70"/><circle cx="1165.6" cy="499.0" r="1.0" fill="#6a6c70"/><circle cx="1168.3" cy="498.7" r="0.6" fill="#6a6c70"/><circle cx="1184.4" cy="503.1" r="1.1" fill="#6a6c70"/><circle cx="1170.1" cy="518.0" r="0.5" fill="#b5b3b0"/><circle cx="1172.4" cy="520.5" r="0.8" fill="#75777b"/><circle cx="1173.7" cy="518.7" r="0.6" fill="#6a6c70"/><circle cx="1179.8" cy="517.2" r="1.0" fill="#b5b3b0"/><circle cx="1184.6" cy="503.9" r="0.8" fill="#b5b3b0"/><circle cx="1177.9" cy="499.2" r="0.9" fill="#b5b3b0"/><circle cx="1160.3" cy="504.9" r="0.8" fill="#b5b3b0"/><circle cx="1164.8" cy="513.9" r="1.0" fill="#6a6c70"/><circle cx="1171.4" cy="501.4" r="0.9" fill="#b5b3b0"/><circle cx="1164.9" cy="497.1" r="0.7" fill="#a3a5a8"/><circle cx="1172.4" cy="516.6" r="0.8" fill="#6a6c70"/><circle cx="1156.7" cy="503.2" r="1.0" fill="#a3a5a8"/><circle cx="1180.3" cy="490.4" r="0.8" fill="#6a6c70"/><circle cx="1171.5" cy="490.7" r="0.6" fill="#b5b3b0"/><circle cx="1169.9" cy="500.9" r="0.8" fill="#75777b"/><circle cx="1163.4" cy="494.5" r="0.5" fill="#a3a5a8"/><circle cx="1158.6" cy="512.7" r="1.1" fill="#75777b"/><circle cx="1166.4" cy="507.4" r="1.0" fill="#75777b"/><circle cx="1174.6" cy="499.1" r="0.5" fill="#b5b3b0"/><circle cx="1176.9" cy="512.8" r="0.8" fill="#b5b3b0"/><circle cx="1170.4" cy="491.8" r="0.8" fill="#75777b"/><circle cx="1169.1" cy="514.4" r="1.0" fill="#a3a5a8"/><circle cx="1160.2" cy="505.2" r="0.7" fill="#b5b3b0"/><circle cx="1163.0" cy="520.7" r="1.0" fill="#6a6c70"/><circle cx="1171.1" cy="518.0" r="0.8" fill="#75777b"/><circle cx="1171.0" cy="521.3" r="0.7" fill="#6a6c70"/><circle cx="1162.9" cy="510.5" r="0.6" fill="#b5b3b0"/><circle cx="1184.5" cy="507.7" r="0.9" fill="#a3a5a8"/><circle cx="1169.2" cy="495.7" r="0.9" fill="#75777b"/><circle cx="1170.8" cy="512.6" r="1.0" fill="#a3a5a8"/><circle cx="1181.4" cy="510.9" r="0.9" fill="#a3a5a8"/><circle cx="1161.1" cy="512.9" r="0.9" fill="#6a6c70"/><circle cx="1174.9" cy="519.3" r="1.0" fill="#75777b"/><circle cx="1165.3" cy="505.4" r="1.1" fill="#a3a5a8"/><circle cx="1181.4" cy="504.8" r="0.7" fill="#b5b3b0"/><circle cx="1171.7" cy="503.2" r="0.8" fill="#6a6c70"/><circle cx="1163.0" cy="493.0" r="0.5" fill="#a3a5a8"/><circle cx="1164.0" cy="512.3" r="1.0" fill="#75777b"/><circle cx="1181.9" cy="500.9" r="1.0" fill="#a3a5a8"/><circle cx="1178.1" cy="519.5" r="1.0" fill="#b5b3b0"/><circle cx="1176.3" cy="519.2" r="1.1" fill="#6a6c70"/><circle cx="1160.2" cy="493.9" r="0.6" fill="#b5b3b0"/><circle cx="1157.0" cy="492.0" r="0.9" fill="#75777b"/><circle cx="1180.3" cy="510.3" r="1.0" fill="#b5b3b0"/><rect x="1190.0" y="489.5" width="33.5" height="32.5" fill="#87847f"/><circle cx="1205.2" cy="507.7" r="1.2" fill="#bdb8ad"/><circle cx="1205.1" cy="517.3" r="0.7" fill="#bdb8ad"/><circle cx="1211.1" cy="515.3" r="0.6" fill="#5c5a55"/><circle cx="1194.8" cy="507.0" r="1.2" fill="#6a6761"/><circle cx="1209.9" cy="502.4" r="0.9" fill="#a9a59d"/><circle cx="1210.9" cy="516.5" r="0.6" fill="#6a6761"/><circle cx="1196.4" cy="497.4" r="0.5" fill="#bdb8ad"/><circle cx="1200.9" cy="508.7" r="0.7" fill="#a9a59d"/><circle cx="1211.4" cy="505.7" r="1.0" fill="#bdb8ad"/><circle cx="1211.9" cy="502.7" r="0.9" fill="#6a6761"/><circle cx="1213.7" cy="499.7" r="0.7" fill="#5c5a55"/><circle cx="1191.0" cy="507.8" r="0.6" fill="#6a6761"/><circle cx="1218.4" cy="502.1" r="1.3" fill="#6a6761"/><circle cx="1197.2" cy="519.6" r="0.5" fill="#bdb8ad"/><circle cx="1222.8" cy="502.4" r="0.6" fill="#a9a59d"/><circle cx="1216.1" cy="498.3" r="0.6" fill="#5c5a55"/><circle cx="1190.5" cy="502.8" r="0.5" fill="#a9a59d"/><circle cx="1198.3" cy="492.8" r="0.5" fill="#bdb8ad"/><circle cx="1196.0" cy="507.7" r="0.9" fill="#a9a59d"/><circle cx="1223.0" cy="514.5" r="0.5" fill="#bdb8ad"/><circle cx="1193.9" cy="503.2" r="0.7" fill="#5c5a55"/><circle cx="1219.0" cy="521.2" r="0.8" fill="#6a6761"/><circle cx="1197.1" cy="502.3" r="1.2" fill="#6a6761"/><circle cx="1191.4" cy="494.3" r="0.9" fill="#6a6761"/><circle cx="1215.9" cy="500.2" r="0.7" fill="#6a6761"/><circle cx="1192.5" cy="496.3" r="1.0" fill="#6a6761"/><circle cx="1210.1" cy="501.6" r="0.9" fill="#bdb8ad"/><circle cx="1217.9" cy="493.9" r="0.8" fill="#a9a59d"/><circle cx="1200.4" cy="496.9" r="1.0" fill="#a9a59d"/><circle cx="1195.3" cy="509.9" r="0.9" fill="#bdb8ad"/><circle cx="1219.6" cy="509.1" r="0.8" fill="#6a6761"/><circle cx="1193.7" cy="506.2" r="0.7" fill="#bdb8ad"/><circle cx="1198.6" cy="516.3" r="1.0" fill="#5c5a55"/><circle cx="1207.4" cy="519.7" r="1.3" fill="#a9a59d"/><circle cx="1197.7" cy="507.7" r="1.2" fill="#6a6761"/><circle cx="1199.4" cy="519.3" r="0.7" fill="#6a6761"/><circle cx="1192.3" cy="502.9" r="0.7" fill="#6a6761"/><circle cx="1195.9" cy="501.5" r="1.0" fill="#a9a59d"/><circle cx="1193.1" cy="494.0" r="0.9" fill="#5c5a55"/><circle cx="1212.0" cy="512.0" r="1.0" fill="#a9a59d"/><circle cx="1209.8" cy="519.5" r="0.9" fill="#5c5a55"/><circle cx="1213.5" cy="520.8" r="0.5" fill="#6a6761"/><circle cx="1206.2" cy="513.2" r="0.8" fill="#6a6761"/><circle cx="1192.5" cy="507.2" r="1.1" fill="#a9a59d"/><circle cx="1216.6" cy="519.2" r="0.8" fill="#bdb8ad"/><circle cx="1220.2" cy="517.8" r="0.8" fill="#6a6761"/><circle cx="1218.9" cy="508.1" r="1.0" fill="#bdb8ad"/><circle cx="1202.7" cy="489.9" r="0.4" fill="#6a6761"/><circle cx="1211.4" cy="521.8" r="0.2" fill="#5c5a55"/><circle cx="1203.0" cy="513.4" r="1.0" fill="#bdb8ad"/><circle cx="1205.5" cy="507.1" r="0.9" fill="#6a6761"/><circle cx="1200.4" cy="492.4" r="0.5" fill="#6a6761"/><circle cx="1206.7" cy="509.5" r="1.2" fill="#5c5a55"/><circle cx="1220.0" cy="501.5" r="0.6" fill="#a9a59d"/><circle cx="1207.4" cy="514.0" r="0.8" fill="#bdb8ad"/><circle cx="1206.7" cy="497.3" r="0.8" fill="#5c5a55"/><circle cx="1196.6" cy="503.5" r="1.1" fill="#a9a59d"/><circle cx="1219.5" cy="502.0" r="1.0" fill="#5c5a55"/><circle cx="1197.0" cy="493.9" r="0.8" fill="#6a6761"/><circle cx="1213.8" cy="520.4" r="0.7" fill="#a9a59d"/><circle cx="1193.8" cy="504.8" r="1.2" fill="#bdb8ad"/><circle cx="1202.8" cy="506.4" r="1.0" fill="#bdb8ad"/><circle cx="1200.7" cy="516.4" r="0.7" fill="#6a6761"/><circle cx="1212.7" cy="498.6" r="0.8" fill="#6a6761"/><circle cx="1211.5" cy="502.7" r="0.7" fill="#5c5a55"/><circle cx="1198.0" cy="494.1" r="0.5" fill="#6a6761"/><circle cx="1205.0" cy="510.0" r="1.0" fill="#5c5a55"/><circle cx="1222.1" cy="511.7" r="0.7" fill="#bdb8ad"/><circle cx="1198.6" cy="512.7" r="1.1" fill="#6a6761"/><circle cx="1196.0" cy="498.4" r="0.8" fill="#a9a59d"/><circle cx="1203.2" cy="515.2" r="1.2" fill="#6a6761"/><circle cx="1203.8" cy="518.5" r="0.8" fill="#bdb8ad"/><circle cx="1205.2" cy="509.8" r="1.2" fill="#bdb8ad"/><circle cx="1208.4" cy="510.7" r="0.9" fill="#5c5a55"/><circle cx="1205.5" cy="510.7" r="0.7" fill="#6a6761"/><circle cx="1197.1" cy="518.7" r="1.3" fill="#5c5a55"/><circle cx="1208.0" cy="515.2" r="0.8" fill="#6a6761"/><circle cx="1201.7" cy="492.2" r="0.9" fill="#bdb8ad"/><circle cx="1215.7" cy="505.3" r="0.5" fill="#6a6761"/><circle cx="1204.4" cy="490.6" r="0.9" fill="#a9a59d"/><circle cx="1207.4" cy="511.5" r="0.9" fill="#bdb8ad"/><circle cx="1209.4" cy="511.9" r="1.1" fill="#bdb8ad"/><circle cx="1207.6" cy="498.9" r="1.1" fill="#a9a59d"/><circle cx="1207.5" cy="516.9" r="0.9" fill="#5c5a55"/><circle cx="1212.5" cy="520.5" r="1.2" fill="#a9a59d"/><circle cx="1200.2" cy="494.1" r="0.9" fill="#5c5a55"/><circle cx="1209.2" cy="496.0" r="0.9" fill="#6a6761"/><circle cx="1210.3" cy="490.4" r="0.9" fill="#bdb8ad"/><circle cx="1208.2" cy="521.7" r="0.3" fill="#6a6761"/><circle cx="1213.1" cy="491.6" r="0.9" fill="#bdb8ad"/><circle cx="1220.8" cy="515.5" r="0.8" fill="#a9a59d"/><circle cx="1205.9" cy="493.6" r="0.8" fill="#bdb8ad"/><circle cx="1207.6" cy="493.0" r="0.8" fill="#6a6761"/><circle cx="1221.0" cy="493.7" r="1.1" fill="#6a6761"/><circle cx="1191.2" cy="494.6" r="0.5" fill="#5c5a55"/><circle cx="1200.8" cy="501.0" r="1.0" fill="#6a6761"/><circle cx="1206.7" cy="508.4" r="1.2" fill="#5c5a55"/><circle cx="1214.0" cy="512.3" r="1.2" fill="#6a6761"/><circle cx="1202.6" cy="502.9" r="0.9" fill="#a9a59d"/><circle cx="1208.0" cy="517.6" r="0.9" fill="#a9a59d"/><circle cx="1207.7" cy="517.2" r="1.0" fill="#a9a59d"/><circle cx="1197.8" cy="513.6" r="1.1" fill="#a9a59d"/><circle cx="1200.6" cy="499.7" r="1.2" fill="#a9a59d"/><circle cx="1216.1" cy="495.8" r="0.6" fill="#a9a59d"/><circle cx="1194.4" cy="492.4" r="0.8" fill="#bdb8ad"/><circle cx="1217.9" cy="503.2" r="1.1" fill="#a9a59d"/><circle cx="1196.7" cy="509.9" r="1.1" fill="#6a6761"/><circle cx="1196.7" cy="511.7" r="1.2" fill="#5c5a55"/><circle cx="1193.9" cy="505.9" r="1.1" fill="#a9a59d"/><circle cx="1216.9" cy="505.2" r="0.5" fill="#bdb8ad"/><circle cx="1194.9" cy="495.5" r="0.7" fill="#a9a59d"/><circle cx="1223.2" cy="519.6" r="0.3" fill="#6a6761"/><circle cx="1194.5" cy="511.6" r="0.6" fill="#6a6761"/><circle cx="1200.9" cy="504.7" r="0.9" fill="#bdb8ad"/><circle cx="1197.0" cy="501.6" r="1.0" fill="#6a6761"/><circle cx="1218.3" cy="495.4" r="0.9" fill="#5c5a55"/><circle cx="1203.6" cy="495.8" r="0.6" fill="#6a6761"/><circle cx="1200.8" cy="492.3" r="1.2" fill="#bdb8ad"/><circle cx="1209.1" cy="495.7" r="1.0" fill="#5c5a55"/><circle cx="1217.0" cy="497.9" r="1.2" fill="#a9a59d"/><circle cx="1217.3" cy="502.7" r="1.2" fill="#5c5a55"/><circle cx="1215.7" cy="514.4" r="0.8" fill="#a9a59d"/><circle cx="1192.4" cy="500.6" r="0.9" fill="#6a6761"/><circle cx="1219.7" cy="521.7" r="0.3" fill="#6a6761"/><circle cx="1197.8" cy="520.2" r="1.0" fill="#5c5a55"/><circle cx="1197.2" cy="502.7" r="0.6" fill="#6a6761"/><circle cx="1213.5" cy="514.3" r="1.3" fill="#6a6761"/><circle cx="1193.8" cy="493.0" r="0.7" fill="#bdb8ad"/><circle cx="1203.5" cy="491.1" r="0.7" fill="#bdb8ad"/><circle cx="1190.4" cy="497.9" r="0.4" fill="#5c5a55"/><circle cx="1208.4" cy="506.0" r="1.3" fill="#6a6761"/><circle cx="1211.4" cy="515.8" r="0.6" fill="#6a6761"/><circle cx="1202.9" cy="520.0" r="0.8" fill="#a9a59d"/><circle cx="1218.7" cy="507.1" r="1.0" fill="#bdb8ad"/><circle cx="1221.7" cy="503.2" r="0.9" fill="#5c5a55"/><circle cx="1202.2" cy="498.8" r="1.0" fill="#5c5a55"/><circle cx="1212.2" cy="513.8" r="0.5" fill="#a9a59d"/><circle cx="1209.6" cy="510.1" r="0.8" fill="#bdb8ad"/><circle cx="1191.8" cy="499.7" r="0.8" fill="#5c5a55"/><circle cx="1192.5" cy="518.9" r="0.8" fill="#bdb8ad"/><circle cx="1198.4" cy="514.1" r="0.5" fill="#6a6761"/><circle cx="1221.4" cy="513.0" r="0.9" fill="#a9a59d"/><circle cx="1210.2" cy="493.2" r="1.0" fill="#bdb8ad"/><circle cx="1194.0" cy="517.5" r="0.8" fill="#a9a59d"/><circle cx="1194.2" cy="503.9" r="1.0" fill="#bdb8ad"/><circle cx="1210.1" cy="510.3" r="1.0" fill="#5c5a55"/><circle cx="1216.1" cy="506.7" r="1.3" fill="#5c5a55"/><circle cx="1214.6" cy="497.2" r="0.6" fill="#5c5a55"/><circle cx="1216.3" cy="509.8" r="0.8" fill="#5c5a55"/><circle cx="1210.4" cy="513.1" r="1.1" fill="#a9a59d"/><circle cx="1211.2" cy="514.0" r="0.7" fill="#a9a59d"/><circle cx="1206.8" cy="510.7" r="0.7" fill="#6a6761"/><circle cx="1211.1" cy="489.8" r="0.3" fill="#6a6761"/><circle cx="1210.9" cy="492.8" r="0.9" fill="#6a6761"/><circle cx="1215.3" cy="519.2" r="0.6" fill="#a9a59d"/><circle cx="1211.1" cy="501.6" r="0.9" fill="#a9a59d"/><circle cx="1201.3" cy="505.6" r="0.6" fill="#6a6761"/><circle cx="1216.9" cy="504.0" r="1.2" fill="#a9a59d"/><circle cx="1204.9" cy="513.8" r="0.8" fill="#a9a59d"/><circle cx="1202.4" cy="510.7" r="1.3" fill="#5c5a55"/><circle cx="1199.7" cy="514.2" r="1.2" fill="#a9a59d"/><circle cx="1204.3" cy="501.5" r="0.6" fill="#5c5a55"/><circle cx="1192.6" cy="492.2" r="1.0" fill="#bdb8ad"/><circle cx="1217.3" cy="504.6" r="1.2" fill="#6a6761"/><circle cx="1192.5" cy="496.4" r="1.0" fill="#6a6761"/><circle cx="1213.3" cy="505.6" r="1.1" fill="#5c5a55"/><circle cx="1199.5" cy="494.1" r="0.8" fill="#5c5a55"/><circle cx="1202.3" cy="493.3" r="1.1" fill="#5c5a55"/><rect x="1048" y="523.8" width="33.3" height="32" fill="#aaa79c"/><path d="M1049.5,523.8 L1049.5,555.8" stroke="#c4c1b6" stroke-width=".8"/><path d="M1052.5,523.8 L1052.5,555.8" stroke="#8d8a80" stroke-width=".8"/><path d="M1055.5,523.8 L1055.5,555.8" stroke="#c4c1b6" stroke-width=".8"/><path d="M1058.5,523.8 L1058.5,555.8" stroke="#8d8a80" stroke-width=".8"/><path d="M1061.5,523.8 L1061.5,555.8" stroke="#c4c1b6" stroke-width=".8"/><path d="M1064.5,523.8 L1064.5,555.8" stroke="#8d8a80" stroke-width=".8"/><path d="M1067.5,523.8 L1067.5,555.8" stroke="#c4c1b6" stroke-width=".8"/><path d="M1070.5,523.8 L1070.5,555.8" stroke="#8d8a80" stroke-width=".8"/><path d="M1073.5,523.8 L1073.5,555.8" stroke="#c4c1b6" stroke-width=".8"/><path d="M1076.5,523.8 L1076.5,555.8" stroke="#8d8a80" stroke-width=".8"/><path d="M1079.5,523.8 L1079.5,555.8" stroke="#c4c1b6" stroke-width=".8"/><rect x="1083.7" y="523.8" width="33.3" height="32.0" fill="#c1a161"/><circle cx="1099.5" cy="544.8" r="0.8" fill="#b59555"/><circle cx="1105.1" cy="538.5" r="0.9" fill="#b59555"/><circle cx="1102.3" cy="545.0" r="0.6" fill="#cdb075"/><circle cx="1095.9" cy="534.7" r="0.6" fill="#bd9c5c"/><circle cx="1111.0" cy="526.2" r="0.8" fill="#cdb075"/><circle cx="1106.4" cy="549.3" r="0.5" fill="#b59555"/><circle cx="1111.0" cy="545.0" r="0.6" fill="#cdb075"/><circle cx="1115.2" cy="527.4" r="0.7" fill="#b59555"/><circle cx="1101.7" cy="552.0" r="0.8" fill="#bd9c5c"/><circle cx="1113.2" cy="541.6" r="0.8" fill="#b59555"/><circle cx="1097.0" cy="537.2" r="0.8" fill="#cdb075"/><circle cx="1104.0" cy="541.1" r="0.8" fill="#b59555"/><circle cx="1115.9" cy="555.0" r="0.8" fill="#cdb075"/><circle cx="1115.0" cy="551.5" r="0.7" fill="#cdb075"/><circle cx="1087.5" cy="531.3" r="0.7" fill="#bd9c5c"/><circle cx="1102.8" cy="548.3" r="0.6" fill="#cdb075"/><circle cx="1111.1" cy="537.6" r="0.8" fill="#b59555"/><circle cx="1106.2" cy="525.2" r="0.6" fill="#bd9c5c"/><circle cx="1087.1" cy="541.4" r="0.6" fill="#bd9c5c"/><circle cx="1092.8" cy="537.7" r="0.7" fill="#bd9c5c"/><circle cx="1104.9" cy="525.5" r="0.7" fill="#b59555"/><circle cx="1095.0" cy="538.4" r="0.8" fill="#cdb075"/><circle cx="1091.7" cy="555.4" r="0.4" fill="#bd9c5c"/><circle cx="1095.8" cy="529.9" r="0.9" fill="#bd9c5c"/><circle cx="1083.9" cy="532.4" r="0.2" fill="#cdb075"/><circle cx="1089.7" cy="549.2" r="0.8" fill="#b59555"/><circle cx="1104.3" cy="555.3" r="0.5" fill="#bd9c5c"/><circle cx="1088.9" cy="553.5" r="0.9" fill="#bd9c5c"/><circle cx="1111.4" cy="544.3" r="0.6" fill="#bd9c5c"/><circle cx="1100.4" cy="539.5" r="0.7" fill="#bd9c5c"/><circle cx="1115.2" cy="552.4" r="0.6" fill="#cdb075"/><circle cx="1104.2" cy="525.3" r="0.7" fill="#bd9c5c"/><circle cx="1105.0" cy="538.0" r="0.9" fill="#bd9c5c"/><circle cx="1093.2" cy="532.0" r="0.8" fill="#bd9c5c"/><circle cx="1084.6" cy="541.7" r="0.6" fill="#b59555"/><circle cx="1091.7" cy="537.7" r="1.0" fill="#bd9c5c"/><circle cx="1102.7" cy="546.8" r="1.0" fill="#cdb075"/><circle cx="1109.0" cy="537.2" r="0.8" fill="#cdb075"/><circle cx="1110.0" cy="542.4" r="0.7" fill="#cdb075"/><circle cx="1104.9" cy="536.1" r="0.6" fill="#bd9c5c"/><circle cx="1107.3" cy="552.7" r="0.9" fill="#b59555"/><circle cx="1114.0" cy="540.9" r="0.9" fill="#cdb075"/><circle cx="1110.1" cy="546.5" r="0.6" fill="#cdb075"/><circle cx="1114.8" cy="545.9" r="0.8" fill="#bd9c5c"/><circle cx="1104.1" cy="530.6" r="0.8" fill="#bd9c5c"/><circle cx="1096.8" cy="531.7" r="0.7" fill="#cdb075"/><circle cx="1086.4" cy="534.4" r="0.8" fill="#bd9c5c"/><circle cx="1094.1" cy="546.1" r="0.9" fill="#bd9c5c"/><circle cx="1104.9" cy="537.8" r="0.6" fill="#b59555"/><circle cx="1099.9" cy="538.0" r="0.6" fill="#bd9c5c"/><circle cx="1103.5" cy="538.4" r="0.9" fill="#b59555"/><circle cx="1115.1" cy="524.0" r="0.2" fill="#cdb075"/><circle cx="1112.0" cy="545.8" r="0.6" fill="#bd9c5c"/><circle cx="1114.3" cy="539.8" r="0.8" fill="#b59555"/><circle cx="1100.4" cy="536.2" r="0.8" fill="#bd9c5c"/><circle cx="1092.0" cy="538.5" r="0.9" fill="#b59555"/><circle cx="1097.3" cy="546.2" r="0.9" fill="#bd9c5c"/><circle cx="1106.1" cy="545.0" r="1.0" fill="#bd9c5c"/><circle cx="1102.7" cy="533.8" r="0.9" fill="#b59555"/><circle cx="1094.4" cy="539.8" r="0.7" fill="#cdb075"/><circle cx="1089.4" cy="539.1" r="0.9" fill="#b59555"/><circle cx="1092.1" cy="525.3" r="0.9" fill="#cdb075"/><circle cx="1097.3" cy="543.9" r="0.6" fill="#bd9c5c"/><circle cx="1094.4" cy="527.8" r="0.8" fill="#bd9c5c"/><circle cx="1104.0" cy="548.9" r="0.7" fill="#bd9c5c"/><circle cx="1105.6" cy="534.7" r="0.9" fill="#cdb075"/><circle cx="1096.5" cy="536.6" r="0.9" fill="#b59555"/><circle cx="1110.0" cy="550.5" r="0.6" fill="#cdb075"/><circle cx="1101.1" cy="525.5" r="0.9" fill="#bd9c5c"/><circle cx="1111.0" cy="535.3" r="0.9" fill="#cdb075"/><circle cx="1109.4" cy="551.3" r="0.7" fill="#b59555"/><circle cx="1108.6" cy="551.3" r="0.8" fill="#b59555"/><circle cx="1084.1" cy="529.3" r="0.4" fill="#bd9c5c"/><circle cx="1110.6" cy="553.5" r="1.0" fill="#cdb075"/><circle cx="1101.9" cy="524.5" r="0.7" fill="#cdb075"/><circle cx="1106.5" cy="541.0" r="0.7" fill="#bd9c5c"/><circle cx="1083.9" cy="527.9" r="0.2" fill="#cdb075"/><circle cx="1104.9" cy="538.8" r="0.8" fill="#cdb075"/><circle cx="1112.1" cy="552.4" r="0.5" fill="#cdb075"/><circle cx="1084.4" cy="528.8" r="0.7" fill="#cdb075"/><circle cx="1106.7" cy="554.4" r="0.8" fill="#cdb075"/><circle cx="1102.0" cy="554.6" r="0.7" fill="#b59555"/><circle cx="1111.6" cy="527.9" r="0.5" fill="#b59555"/><circle cx="1097.8" cy="549.6" r="0.9" fill="#b59555"/><circle cx="1084.7" cy="545.8" r="0.8" fill="#bd9c5c"/><circle cx="1115.7" cy="547.7" r="1.0" fill="#b59555"/><circle cx="1103.5" cy="542.6" r="0.9" fill="#bd9c5c"/><circle cx="1090.6" cy="548.0" r="0.7" fill="#bd9c5c"/><circle cx="1111.4" cy="549.4" r="0.7" fill="#bd9c5c"/><rect x="1119.0" y="523.8" width="33.5" height="32.0" fill="#857d78"/><circle cx="1127.7" cy="545.7" r="0.9" fill="#a09892"/><circle cx="1140.8" cy="545.1" r="1.0" fill="#a09892"/><circle cx="1123.4" cy="540.8" r="0.6" fill="#5a524e"/><circle cx="1120.0" cy="527.8" r="0.9" fill="#6a625e"/><circle cx="1152.3" cy="550.5" r="0.2" fill="#5a524e"/><circle cx="1146.7" cy="547.6" r="1.1" fill="#5a524e"/><circle cx="1130.9" cy="531.3" r="1.0" fill="#b5ada6"/><circle cx="1141.5" cy="552.2" r="0.9" fill="#6a625e"/><circle cx="1130.6" cy="542.8" r="0.9" fill="#5a524e"/><circle cx="1142.1" cy="541.5" r="0.9" fill="#a09892"/><circle cx="1133.8" cy="547.1" r="0.8" fill="#5a524e"/><circle cx="1125.8" cy="540.5" r="0.7" fill="#b5ada6"/><circle cx="1127.8" cy="532.8" r="1.0" fill="#b5ada6"/><circle cx="1137.4" cy="541.9" r="1.0" fill="#5a524e"/><circle cx="1123.4" cy="537.6" r="0.9" fill="#b5ada6"/><circle cx="1132.1" cy="546.8" r="1.1" fill="#6a625e"/><circle cx="1126.5" cy="539.7" r="0.9" fill="#b5ada6"/><circle cx="1140.4" cy="528.9" r="0.7" fill="#5a524e"/><circle cx="1148.7" cy="549.5" r="0.6" fill="#5a524e"/><circle cx="1136.4" cy="544.8" r="1.0" fill="#a09892"/><circle cx="1143.2" cy="530.6" r="0.9" fill="#6a625e"/><circle cx="1131.0" cy="547.1" r="0.7" fill="#5a524e"/><circle cx="1125.5" cy="549.0" r="0.8" fill="#a09892"/><circle cx="1124.6" cy="537.5" r="0.9" fill="#6a625e"/><circle cx="1151.5" cy="550.2" r="0.9" fill="#6a625e"/><circle cx="1123.2" cy="533.7" r="0.7" fill="#5a524e"/><circle cx="1137.9" cy="546.2" r="1.1" fill="#5a524e"/><circle cx="1147.5" cy="524.9" r="0.7" fill="#a09892"/><circle cx="1135.6" cy="554.8" r="0.8" fill="#b5ada6"/><circle cx="1126.5" cy="530.4" r="1.0" fill="#b5ada6"/><circle cx="1135.8" cy="552.9" r="0.9" fill="#5a524e"/><circle cx="1133.2" cy="550.2" r="0.6" fill="#b5ada6"/><circle cx="1138.7" cy="535.2" r="0.6" fill="#5a524e"/><circle cx="1133.3" cy="544.3" r="0.8" fill="#5a524e"/><circle cx="1132.3" cy="526.6" r="1.0" fill="#6a625e"/><circle cx="1140.9" cy="533.6" r="0.8" fill="#b5ada6"/><circle cx="1130.2" cy="533.1" r="0.8" fill="#a09892"/><circle cx="1124.0" cy="525.5" r="0.7" fill="#a09892"/><circle cx="1126.3" cy="533.5" r="0.7" fill="#6a625e"/><circle cx="1130.6" cy="527.0" r="0.8" fill="#b5ada6"/><circle cx="1120.5" cy="540.9" r="0.6" fill="#6a625e"/><circle cx="1129.8" cy="552.4" r="0.8" fill="#a09892"/><circle cx="1149.2" cy="552.4" r="1.0" fill="#a09892"/><circle cx="1122.0" cy="553.6" r="0.5" fill="#5a524e"/><circle cx="1145.9" cy="530.6" r="0.9" fill="#a09892"/><circle cx="1136.4" cy="553.3" r="0.8" fill="#b5ada6"/><circle cx="1139.8" cy="550.7" r="1.0" fill="#6a625e"/><circle cx="1139.5" cy="554.0" r="1.0" fill="#5a524e"/><circle cx="1136.9" cy="533.4" r="1.1" fill="#5a524e"/><circle cx="1127.7" cy="535.7" r="1.1" fill="#a09892"/><circle cx="1143.4" cy="527.2" r="0.9" fill="#6a625e"/><circle cx="1139.8" cy="550.5" r="0.9" fill="#5a524e"/><circle cx="1149.8" cy="525.1" r="0.6" fill="#b5ada6"/><circle cx="1145.3" cy="538.2" r="0.5" fill="#6a625e"/><circle cx="1136.8" cy="532.6" r="0.6" fill="#a09892"/><circle cx="1151.0" cy="554.3" r="0.7" fill="#a09892"/><circle cx="1152.3" cy="548.2" r="0.2" fill="#5a524e"/><circle cx="1124.2" cy="542.3" r="1.1" fill="#b5ada6"/><circle cx="1125.5" cy="535.8" r="0.8" fill="#a09892"/><circle cx="1120.0" cy="552.8" r="0.8" fill="#a09892"/><circle cx="1121.7" cy="552.7" r="0.8" fill="#6a625e"/><circle cx="1126.2" cy="547.7" r="0.9" fill="#b5ada6"/><circle cx="1119.9" cy="540.8" r="0.9" fill="#a09892"/><circle cx="1129.0" cy="543.6" r="0.9" fill="#b5ada6"/><circle cx="1150.0" cy="532.0" r="0.8" fill="#6a625e"/><circle cx="1127.2" cy="540.8" r="0.5" fill="#b5ada6"/><circle cx="1148.9" cy="552.8" r="0.9" fill="#6a625e"/><circle cx="1136.6" cy="555.6" r="0.2" fill="#6a625e"/><circle cx="1122.4" cy="553.1" r="1.1" fill="#5a524e"/><circle cx="1146.8" cy="545.6" r="0.9" fill="#5a524e"/><circle cx="1138.8" cy="532.0" r="0.6" fill="#a09892"/><circle cx="1139.0" cy="525.6" r="0.9" fill="#6a625e"/><circle cx="1145.0" cy="551.8" r="0.7" fill="#b5ada6"/><circle cx="1146.0" cy="540.2" r="0.5" fill="#b5ada6"/><circle cx="1136.7" cy="532.8" r="0.7" fill="#6a625e"/><circle cx="1149.6" cy="545.7" r="0.7" fill="#6a625e"/><circle cx="1144.7" cy="553.6" r="0.7" fill="#6a625e"/><circle cx="1152.0" cy="538.1" r="0.5" fill="#6a625e"/><circle cx="1121.7" cy="530.7" r="0.6" fill="#5a524e"/><circle cx="1152.2" cy="550.7" r="0.3" fill="#b5ada6"/><circle cx="1150.3" cy="533.2" r="0.6" fill="#6a625e"/><circle cx="1144.1" cy="544.8" r="1.1" fill="#b5ada6"/><circle cx="1140.0" cy="533.8" r="1.1" fill="#a09892"/><circle cx="1142.4" cy="525.4" r="0.6" fill="#a09892"/><circle cx="1141.1" cy="546.5" r="0.9" fill="#b5ada6"/><circle cx="1147.6" cy="528.8" r="0.5" fill="#6a625e"/><circle cx="1136.4" cy="540.5" r="1.0" fill="#a09892"/><circle cx="1122.1" cy="548.6" r="0.7" fill="#5a524e"/><circle cx="1127.2" cy="532.8" r="0.8" fill="#b5ada6"/><circle cx="1149.4" cy="532.8" r="0.9" fill="#6a625e"/><circle cx="1147.1" cy="526.5" r="0.5" fill="#6a625e"/><circle cx="1151.3" cy="531.9" r="1.0" fill="#a09892"/><circle cx="1139.9" cy="527.0" r="0.8" fill="#6a625e"/><circle cx="1120.5" cy="552.4" r="0.8" fill="#a09892"/><circle cx="1142.8" cy="531.3" r="0.7" fill="#5a524e"/><circle cx="1123.2" cy="546.6" r="0.8" fill="#6a625e"/><circle cx="1144.8" cy="551.2" r="0.7" fill="#6a625e"/><circle cx="1133.1" cy="528.3" r="0.5" fill="#a09892"/><circle cx="1127.2" cy="528.6" r="1.0" fill="#6a625e"/><circle cx="1131.0" cy="534.3" r="0.7" fill="#a09892"/><circle cx="1122.6" cy="547.5" r="0.8" fill="#b5ada6"/><circle cx="1150.6" cy="549.4" r="0.9" fill="#6a625e"/><circle cx="1135.5" cy="541.5" r="1.0" fill="#b5ada6"/><circle cx="1145.8" cy="536.5" r="0.7" fill="#b5ada6"/><circle cx="1132.4" cy="526.4" r="0.6" fill="#a09892"/><circle cx="1146.9" cy="542.8" r="0.8" fill="#b5ada6"/><circle cx="1133.8" cy="541.0" r="1.0" fill="#b5ada6"/><circle cx="1143.9" cy="552.3" r="0.8" fill="#a09892"/><circle cx="1119.9" cy="554.9" r="0.5" fill="#5a524e"/><circle cx="1149.1" cy="525.2" r="0.7" fill="#b5ada6"/><circle cx="1132.4" cy="543.5" r="0.8" fill="#a09892"/><circle cx="1133.4" cy="542.0" r="0.5" fill="#b5ada6"/><circle cx="1126.4" cy="545.0" r="0.6" fill="#b5ada6"/><circle cx="1125.9" cy="525.0" r="0.5" fill="#b5ada6"/><circle cx="1132.5" cy="551.8" r="0.6" fill="#b5ada6"/><circle cx="1121.9" cy="554.8" r="0.9" fill="#b5ada6"/><circle cx="1121.7" cy="540.9" r="0.9" fill="#6a625e"/><circle cx="1121.0" cy="549.3" r="0.9" fill="#a09892"/><circle cx="1143.2" cy="524.7" r="0.9" fill="#a09892"/><circle cx="1134.6" cy="524.9" r="1.0" fill="#a09892"/><circle cx="1128.3" cy="549.5" r="0.8" fill="#a09892"/><circle cx="1123.9" cy="549.2" r="0.9" fill="#6a625e"/><circle cx="1124.9" cy="525.9" r="0.6" fill="#b5ada6"/><circle cx="1151.2" cy="545.1" r="0.8" fill="#a09892"/><circle cx="1121.3" cy="548.8" r="0.5" fill="#6a625e"/><circle cx="1132.0" cy="546.1" r="0.6" fill="#6a625e"/><circle cx="1143.5" cy="536.0" r="0.6" fill="#b5ada6"/><circle cx="1140.1" cy="544.2" r="0.6" fill="#a09892"/><circle cx="1147.1" cy="542.3" r="1.1" fill="#6a625e"/><circle cx="1135.9" cy="537.5" r="1.0" fill="#b5ada6"/><circle cx="1139.7" cy="531.7" r="0.7" fill="#b5ada6"/><circle cx="1144.8" cy="524.0" r="0.2" fill="#b5ada6"/><circle cx="1126.9" cy="545.3" r="1.0" fill="#5a524e"/><circle cx="1119.7" cy="548.5" r="0.7" fill="#5a524e"/><circle cx="1139.3" cy="553.0" r="0.9" fill="#6a625e"/><circle cx="1141.2" cy="553.3" r="0.6" fill="#5a524e"/><circle cx="1127.1" cy="537.9" r="0.9" fill="#5a524e"/><circle cx="1122.4" cy="524.9" r="0.7" fill="#6a625e"/><circle cx="1121.4" cy="552.3" r="0.6" fill="#5a524e"/><circle cx="1121.8" cy="548.3" r="1.0" fill="#a09892"/><circle cx="1144.0" cy="539.4" r="0.8" fill="#6a625e"/><circle cx="1134.6" cy="546.7" r="1.1" fill="#5a524e"/><circle cx="1137.5" cy="554.6" r="0.5" fill="#b5ada6"/><circle cx="1144.6" cy="551.2" r="1.0" fill="#a09892"/><circle cx="1150.8" cy="528.8" r="0.8" fill="#6a625e"/><circle cx="1132.0" cy="533.2" r="0.8" fill="#b5ada6"/><circle cx="1146.3" cy="539.7" r="0.6" fill="#b5ada6"/><circle cx="1129.1" cy="526.3" r="0.8" fill="#a09892"/><circle cx="1134.8" cy="545.7" r="0.8" fill="#6a625e"/><circle cx="1134.9" cy="533.6" r="0.9" fill="#5a524e"/><circle cx="1119.4" cy="554.1" r="0.4" fill="#a09892"/><circle cx="1136.7" cy="525.0" r="0.7" fill="#b5ada6"/><circle cx="1133.1" cy="535.6" r="0.6" fill="#5a524e"/><circle cx="1144.8" cy="545.3" r="0.6" fill="#b5ada6"/><circle cx="1125.9" cy="526.9" r="1.1" fill="#6a625e"/><circle cx="1127.3" cy="532.8" r="1.0" fill="#b5ada6"/><circle cx="1147.2" cy="544.0" r="0.5" fill="#a09892"/><circle cx="1144.3" cy="532.1" r="1.1" fill="#a09892"/><circle cx="1123.6" cy="537.1" r="0.7" fill="#5a524e"/><circle cx="1129.5" cy="532.0" r="0.9" fill="#5a524e"/><circle cx="1140.8" cy="551.5" r="0.6" fill="#a09892"/><circle cx="1122.5" cy="530.4" r="0.7" fill="#a09892"/><circle cx="1141.7" cy="554.8" r="0.7" fill="#a09892"/><circle cx="1125.4" cy="540.3" r="0.6" fill="#5a524e"/><circle cx="1151.3" cy="538.7" r="0.8" fill="#b5ada6"/><rect x="1154.8" y="523.8" width="33.2" height="32" fill="#bf8066"/><path d="M1154.8,534.5 L1188,534.5 M1154.8,545 L1188,545 M1166,523.8 L1166,534.5 M1177,523.8 L1177,534.5 M1160,534.5 L1160,545 M1171.5,534.5 L1171.5,545 M1183,534.5 L1183,545 M1166,545 L1166,555.8 M1177,545 L1177,555.8" stroke="#a96b52" stroke-width=".7"/><rect x="1194.0" y="523.8" width="25.0" height="32.0" fill="#a7a8a9"/><circle cx="1196.7" cy="546.3" r="0.8" fill="#999a9b"/><circle cx="1200.8" cy="532.0" r="0.9" fill="#a0a1a2"/><circle cx="1205.2" cy="538.7" r="0.9" fill="#b6b7b8"/><circle cx="1213.4" cy="527.6" r="0.6" fill="#b6b7b8"/><circle cx="1203.0" cy="532.1" r="0.9" fill="#a0a1a2"/><circle cx="1206.9" cy="529.0" r="0.8" fill="#b6b7b8"/><circle cx="1198.1" cy="544.7" r="0.6" fill="#b6b7b8"/><circle cx="1194.7" cy="532.6" r="0.7" fill="#b6b7b8"/><circle cx="1204.1" cy="555.5" r="0.3" fill="#a0a1a2"/><circle cx="1196.4" cy="544.3" r="0.9" fill="#a0a1a2"/><circle cx="1208.7" cy="544.1" r="0.6" fill="#999a9b"/><circle cx="1212.7" cy="539.4" r="0.8" fill="#b6b7b8"/><circle cx="1205.3" cy="530.8" r="0.9" fill="#a0a1a2"/><circle cx="1200.4" cy="527.7" r="1.0" fill="#b6b7b8"/><circle cx="1201.0" cy="524.7" r="0.9" fill="#999a9b"/><circle cx="1211.2" cy="542.6" r="0.7" fill="#a0a1a2"/><circle cx="1198.2" cy="536.2" r="0.7" fill="#b6b7b8"/><circle cx="1204.9" cy="542.9" r="0.5" fill="#b6b7b8"/><circle cx="1203.9" cy="538.2" r="0.8" fill="#b6b7b8"/><circle cx="1195.7" cy="528.4" r="0.9" fill="#a0a1a2"/><circle cx="1205.0" cy="550.2" r="0.7" fill="#b6b7b8"/><circle cx="1194.5" cy="546.5" r="0.5" fill="#b6b7b8"/><circle cx="1200.6" cy="533.5" r="0.6" fill="#a0a1a2"/><circle cx="1208.0" cy="549.3" r="0.5" fill="#999a9b"/><circle cx="1194.9" cy="533.8" r="0.9" fill="#a0a1a2"/><circle cx="1206.7" cy="540.5" r="0.9" fill="#b6b7b8"/><circle cx="1196.8" cy="554.4" r="0.9" fill="#999a9b"/><circle cx="1199.8" cy="551.7" r="0.6" fill="#999a9b"/><circle cx="1199.2" cy="545.6" r="0.7" fill="#a0a1a2"/><circle cx="1213.0" cy="535.6" r="0.8" fill="#a0a1a2"/><circle cx="1212.5" cy="549.0" r="0.6" fill="#a0a1a2"/><circle cx="1215.0" cy="535.5" r="0.7" fill="#b6b7b8"/><circle cx="1207.6" cy="548.6" r="0.7" fill="#a0a1a2"/><circle cx="1194.8" cy="544.4" r="0.7" fill="#b6b7b8"/><circle cx="1196.2" cy="549.6" r="0.6" fill="#999a9b"/><circle cx="1211.3" cy="528.3" r="0.6" fill="#b6b7b8"/><circle cx="1197.1" cy="552.5" r="0.5" fill="#999a9b"/><circle cx="1200.4" cy="535.6" r="0.7" fill="#999a9b"/><circle cx="1205.1" cy="526.7" r="0.9" fill="#999a9b"/><circle cx="1197.7" cy="545.2" r="0.6" fill="#a0a1a2"/><circle cx="1215.5" cy="550.0" r="1.0" fill="#a0a1a2"/><circle cx="1210.4" cy="541.6" r="0.5" fill="#b6b7b8"/><circle cx="1205.7" cy="554.5" r="0.7" fill="#999a9b"/><circle cx="1215.6" cy="525.8" r="0.8" fill="#a0a1a2"/><circle cx="1207.6" cy="526.9" r="0.9" fill="#b6b7b8"/><circle cx="1215.0" cy="527.5" r="0.5" fill="#a0a1a2"/><circle cx="1217.3" cy="526.0" r="0.9" fill="#b6b7b8"/><circle cx="1195.1" cy="555.3" r="0.5" fill="#999a9b"/><circle cx="1206.4" cy="540.7" r="0.6" fill="#b6b7b8"/><circle cx="1200.2" cy="545.6" r="0.8" fill="#999a9b"/><circle cx="1207.7" cy="549.3" r="0.9" fill="#999a9b"/><circle cx="1217.2" cy="552.6" r="0.9" fill="#b6b7b8"/><circle cx="1203.6" cy="533.2" r="0.9" fill="#b6b7b8"/><circle cx="1194.7" cy="528.2" r="0.7" fill="#a0a1a2"/><circle cx="1201.8" cy="530.7" r="0.8" fill="#b6b7b8"/><circle cx="1194.6" cy="544.5" r="0.6" fill="#b6b7b8"/><circle cx="1208.4" cy="549.2" r="0.7" fill="#a0a1a2"/><circle cx="1213.1" cy="555.0" r="0.8" fill="#999a9b"/><circle cx="1203.4" cy="546.7" r="0.6" fill="#a0a1a2"/><circle cx="1218.4" cy="548.1" r="0.6" fill="#999a9b"/><circle cx="1200.4" cy="551.3" r="0.6" fill="#999a9b"/><circle cx="1205.3" cy="545.0" r="0.5" fill="#999a9b"/><circle cx="1210.9" cy="545.8" r="0.8" fill="#b6b7b8"/><circle cx="1205.5" cy="552.6" r="0.5" fill="#999a9b"/><circle cx="1211.6" cy="529.7" r="0.7" fill="#a0a1a2"/><circle cx="1199.1" cy="527.2" r="0.7" fill="#999a9b"/><circle cx="1212.9" cy="534.9" r="0.7" fill="#b6b7b8"/><circle cx="1195.2" cy="543.3" r="0.7" fill="#b6b7b8"/><circle cx="1205.9" cy="533.6" r="0.5" fill="#999a9b"/><circle cx="1207.0" cy="545.6" r="0.7" fill="#a0a1a2"/><circle cx="1201.4" cy="545.3" r="0.9" fill="#999a9b"/><circle cx="1213.9" cy="524.6" r="0.8" fill="#999a9b"/><circle cx="1215.6" cy="551.0" r="0.8" fill="#a0a1a2"/><circle cx="1214.3" cy="529.5" r="0.6" fill="#a0a1a2"/><circle cx="1209.9" cy="534.5" r="0.8" fill="#b6b7b8"/><circle cx="1196.8" cy="525.1" r="0.9" fill="#b6b7b8"/><circle cx="1198.3" cy="530.2" r="0.9" fill="#999a9b"/><circle cx="1206.8" cy="547.4" r="1.0" fill="#b6b7b8"/><circle cx="1208.9" cy="527.4" r="0.9" fill="#b6b7b8"/><circle cx="1218.7" cy="543.1" r="0.3" fill="#a0a1a2"/><circle cx="1214.6" cy="550.1" r="0.6" fill="#a0a1a2"/><circle cx="1207.6" cy="541.2" r="1.0" fill="#a0a1a2"/><circle cx="1203.4" cy="540.9" r="0.6" fill="#a0a1a2"/><circle cx="1205.9" cy="527.6" r="0.9" fill="#999a9b"/><circle cx="1215.8" cy="542.4" r="0.6" fill="#999a9b"/><circle cx="1197.3" cy="541.6" r="0.7" fill="#a0a1a2"/><circle cx="1195.6" cy="545.1" r="1.0" fill="#b6b7b8"/><circle cx="1197.1" cy="540.0" r="0.9" fill="#999a9b"/><rect x="1048" y="557.6" width="33.3" height="9" fill="#bb6370"/><rect x="1083.7" y="557.6" width="33.3" height="9" fill="#c4a097"/><path d="M1092,557.6 L1092,566.6 M1100.5,557.6 L1100.5,566.6 M1109,557.6 L1109,566.6" stroke="#ab8880" stroke-width=".6"/><rect x="1119" y="557.6" width="33.5" height="9" fill="#b8541c"/><rect x="1154.8" y="557.6" width="33.2" height="9" fill="#a9b374"/><rect x="1190" y="560.5" width="33.5" height="6" fill="#f2f5ee"/><path d="M1190,561.5 L1223.5,561.5" stroke="#6f9a58" stroke-width="1.6"/><path d="M1193,561 L1193,566.5 M1220,561 L1220,566.5" stroke="#6f9a58" stroke-width="1.2"/></g><rect x="1047" y="567" width="205" height="6" fill="#f4f4f4"/><rect x="1047.3" y="580.3" width="51" height="12" rx="3" fill="#fff" stroke="#d4d4d4" stroke-width=".5"/><text x="1050.6" y="589.3" font-family="Liberation Sans,sans-serif" font-size="7.6" fill="#222">Color</text><path d="M1090.8,585.6 L1092.6,587.6 L1094.4,585.6" fill="none" stroke="#222" stroke-width="1"/><rect x="1105.0" y="580.3" width="51" height="12" rx="3" fill="#fff" stroke="#d4d4d4" stroke-width=".5"/><text x="1108.3" y="589.3" font-family="Liberation Sans,sans-serif" font-size="7.6" fill="#222">List</text><path d="M1148.5,585.6 L1150.3,587.6 L1152.1,585.6" fill="none" stroke="#222" stroke-width="1"/><text x="1047.8" y="610.8" font-family="Liberation Sans,sans-serif" font-size="7.95" fill="#222">Opacity</text><rect x="1047.5" y="617.3" width="173" height="2.6" rx="1.3" fill="#dcdcdc"/><path d="M1048,616 L1048,621.2 M1134.5,616 L1134.5,621.2" stroke="#c4c4c4" stroke-width=".8"/><rect x="1217.6" y="612.8" width="5.4" height="11.6" rx="2.5" fill="#fff" stroke="#cfcfcf" stroke-width=".5"/><rect x="1227.8" y="613" width="27.5" height="11.8" fill="#fff"/><text x="1241.3" y="622" font-family="Liberation Sans,sans-serif" font-size="7.5" fill="#222" text-anchor="middle">100%</text><path d="M1042,631.5 L1262.5,631.5" stroke="#dedede" stroke-width=".8"/><rect x="1046.2" y="635.8" width="21.2" height="20.6" rx="3" fill="#8faf44" stroke="#7f9e3c" stroke-width=".6"/><path d="M1071.5,650.8 L1072,648.5 L1077.5,643 L1079.3,644.8 L1073.8,650.3Z" fill="#ddd" stroke="#777" stroke-width=".7"/><path d="M1077,641.5 L1080.8,645.3 L1079.5,646.5 L1075.8,642.8Z M1078.5,643 L1080.5,641 Q1081.8,641.5 1081,642.8Z" fill="#555"/><rect x="1086.3" y="637.2" width="8.8" height="8.8" rx="1" fill="#b85c08"/><rect x="1096.0" y="637.5" width="8.2" height="8.2" rx="1.2" fill="#efefef" stroke="#d0d0d0" stroke-width=".8"/><rect x="1105.3" y="637.5" width="8.2" height="8.2" rx="1.2" fill="#efefef" stroke="#d0d0d0" stroke-width=".8"/><rect x="1114.7" y="637.5" width="8.2" height="8.2" rx="1.2" fill="#efefef" stroke="#d0d0d0" stroke-width=".8"/><rect x="1124.1" y="637.5" width="8.2" height="8.2" rx="1.2" fill="#efefef" stroke="#d0d0d0" stroke-width=".8"/><rect x="1133.4" y="637.5" width="8.2" height="8.2" rx="1.2" fill="#efefef" stroke="#d0d0d0" stroke-width=".8"/><rect x="1142.8" y="637.5" width="8.2" height="8.2" rx="1.2" fill="#efefef" stroke="#d0d0d0" stroke-width=".8"/><rect x="1152.2" y="637.5" width="8.2" height="8.2" rx="1.2" fill="#efefef" stroke="#d0d0d0" stroke-width=".8"/><rect x="1161.6" y="637.5" width="8.2" height="8.2" rx="1.2" fill="#efefef" stroke="#d0d0d0" stroke-width=".8"/><rect x="1170.9" y="637.5" width="8.2" height="8.2" rx="1.2" fill="#efefef" stroke="#d0d0d0" stroke-width=".8"/><rect x="1180.3" y="637.5" width="8.2" height="8.2" rx="1.2" fill="#efefef" stroke="#d0d0d0" stroke-width=".8"/><rect x="1189.7" y="637.5" width="8.2" height="8.2" rx="1.2" fill="#efefef" stroke="#d0d0d0" stroke-width=".8"/><rect x="1199.0" y="637.5" width="8.2" height="8.2" rx="1.2" fill="#efefef" stroke="#d0d0d0" stroke-width=".8"/><rect x="1208.4" y="637.5" width="8.2" height="8.2" rx="1.2" fill="#efefef" stroke="#d0d0d0" stroke-width=".8"/><rect x="1217.8" y="637.5" width="8.2" height="8.2" rx="1.2" fill="#efefef" stroke="#d0d0d0" stroke-width=".8"/><rect x="1227.1" y="637.5" width="8.2" height="8.2" rx="1.2" fill="#efefef" stroke="#d0d0d0" stroke-width=".8"/><rect x="1236.5" y="637.5" width="8.2" height="8.2" rx="1.2" fill="#efefef" stroke="#d0d0d0" stroke-width=".8"/><rect x="1245.9" y="637.5" width="8.2" height="8.2" rx="1.2" fill="#efefef" stroke="#d0d0d0" stroke-width=".8"/><rect x="1086.6" y="646.9" width="8.2" height="8.2" rx="1.2" fill="#efefef" stroke="#d0d0d0" stroke-width=".8"/><rect x="1096.0" y="646.9" width="8.2" height="8.2" rx="1.2" fill="#efefef" stroke="#d0d0d0" stroke-width=".8"/><rect x="1105.3" y="646.9" width="8.2" height="8.2" rx="1.2" fill="#efefef" stroke="#d0d0d0" stroke-width=".8"/><rect x="1114.7" y="646.9" width="8.2" height="8.2" rx="1.2" fill="#efefef" stroke="#d0d0d0" stroke-width=".8"/><rect x="1124.1" y="646.9" width="8.2" height="8.2" rx="1.2" fill="#efefef" stroke="#d0d0d0" stroke-width=".8"/><rect x="1133.4" y="646.9" width="8.2" height="8.2" rx="1.2" fill="#efefef" stroke="#d0d0d0" stroke-width=".8"/><rect x="1142.8" y="646.9" width="8.2" height="8.2" rx="1.2" fill="#efefef" stroke="#d0d0d0" stroke-width=".8"/><rect x="1152.2" y="646.9" width="8.2" height="8.2" rx="1.2" fill="#efefef" stroke="#d0d0d0" stroke-width=".8"/><rect x="1161.6" y="646.9" width="8.2" height="8.2" rx="1.2" fill="#efefef" stroke="#d0d0d0" stroke-width=".8"/><rect x="1170.9" y="646.9" width="8.2" height="8.2" rx="1.2" fill="#efefef" stroke="#d0d0d0" stroke-width=".8"/><rect x="1180.3" y="646.9" width="8.2" height="8.2" rx="1.2" fill="#efefef" stroke="#d0d0d0" stroke-width=".8"/><rect x="1189.7" y="646.9" width="8.2" height="8.2" rx="1.2" fill="#efefef" stroke="#d0d0d0" stroke-width=".8"/><rect x="1199.0" y="646.9" width="8.2" height="8.2" rx="1.2" fill="#efefef" stroke="#d0d0d0" stroke-width=".8"/><rect x="1208.4" y="646.9" width="8.2" height="8.2" rx="1.2" fill="#efefef" stroke="#d0d0d0" stroke-width=".8"/><rect x="1217.8" y="646.9" width="8.2" height="8.2" rx="1.2" fill="#efefef" stroke="#d0d0d0" stroke-width=".8"/><rect x="1227.1" y="646.9" width="8.2" height="8.2" rx="1.2" fill="#efefef" stroke="#d0d0d0" stroke-width=".8"/><rect x="1236.5" y="646.9" width="8.2" height="8.2" rx="1.2" fill="#efefef" stroke="#d0d0d0" stroke-width=".8"/><rect x="1245.9" y="646.9" width="8.2" height="8.2" rx="1.2" fill="#efefef" stroke="#d0d0d0" stroke-width=".8"/></svg>
<div class="sub" style="top:616.5px;letter-spacing:.5px">and they are the same height</div><div class="sub" style="top:655px;letter-spacing:.55px">consisting one,</div>
</div></body></html>
